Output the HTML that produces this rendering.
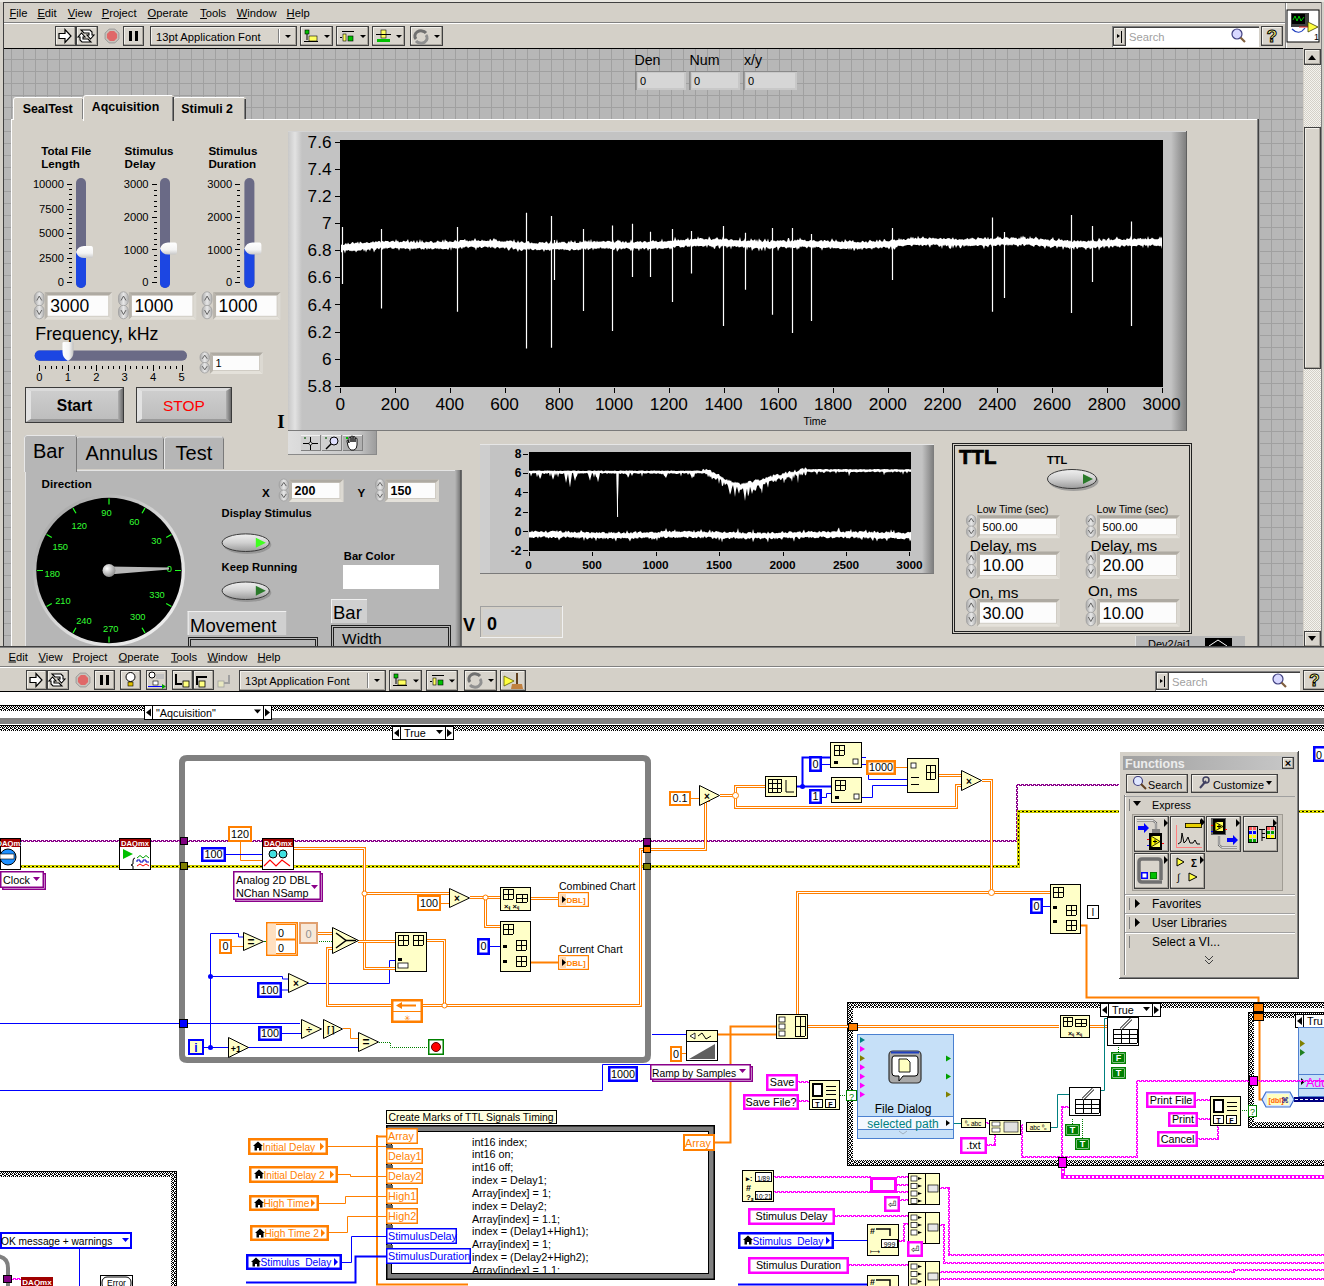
<!DOCTYPE html>
<html><head><meta charset="utf-8"><title>LabVIEW</title>
<style>html,body{margin:0;padding:0;background:#fff;width:1324px;height:1286px;overflow:hidden}svg{display:block}text{white-space:pre}</style>
</head><body><svg width="1324" height="1286" viewBox="0 0 1324 1286" shape-rendering="auto"><defs>
<pattern id="dith" width="2" height="2" patternUnits="userSpaceOnUse"><rect width="2" height="2" fill="#f4f3ee"/><rect width="1" height="1" fill="#d4d0c8"/><rect x="1" y="1" width="1" height="1" fill="#d4d0c8"/></pattern>
<linearGradient id="spin" x1="0" y1="0" x2="1" y2="0"><stop offset="0" stop-color="#a8a8a8"/><stop offset="0.5" stop-color="#e8e8e8"/><stop offset="1" stop-color="#b0b0b0"/></linearGradient>
<linearGradient id="thumb" x1="0" y1="0" x2="0" y2="1"><stop offset="0" stop-color="#ffffff"/><stop offset="0.6" stop-color="#f4f4f4"/><stop offset="1" stop-color="#c8c8c8"/></linearGradient>
<linearGradient id="thumb2" x1="0" y1="0" x2="1" y2="0"><stop offset="0" stop-color="#ffffff"/><stop offset="0.6" stop-color="#f4f4f4"/><stop offset="1" stop-color="#c0c0c0"/></linearGradient>
<linearGradient id="gbtn" x1="0" y1="0" x2="0" y2="1"><stop offset="0" stop-color="#cfcfcf"/><stop offset="1" stop-color="#bcbcbc"/></linearGradient><linearGradient id="bvr" x1="0" y1="0" x2="1" y2="0"><stop offset="0" stop-color="#b0b0b0"/><stop offset="1" stop-color="#6a6a6a"/></linearGradient>
<linearGradient id="lgrad" x1="0" y1="0" x2="1" y2="0"><stop offset="0" stop-color="#c8c8c8"/><stop offset="0.5" stop-color="#e2e2e2"/><stop offset="1" stop-color="#c3c3c3"/></linearGradient>
<linearGradient id="rgrad" x1="0" y1="0" x2="1" y2="0"><stop offset="0" stop-color="#c3c3c3"/><stop offset="1" stop-color="#7a7a7a"/></linearGradient>
<linearGradient id="rgrad2" x1="0" y1="0" x2="1" y2="0"><stop offset="0" stop-color="#b6b6b6"/><stop offset="1" stop-color="#7a7a7a"/></linearGradient><linearGradient id="palg" x1="0" y1="0" x2="1" y2="0"><stop offset="0" stop-color="#dedede"/><stop offset="0.8" stop-color="#c4c4c4"/><stop offset="1" stop-color="#9a9a9a"/></linearGradient>
<linearGradient id="ledg" x1="0" y1="0" x2="0" y2="1"><stop offset="0" stop-color="#f0f0f0"/><stop offset="0.5" stop-color="#d0d0d0"/><stop offset="1" stop-color="#9a9a9a"/></linearGradient>
<linearGradient id="bezel" x1="0" y1="0" x2="1" y2="1"><stop offset="0" stop-color="#9a9a9a"/><stop offset="0.5" stop-color="#d8d8d8"/><stop offset="1" stop-color="#f4f4f4"/></linearGradient>
<radialGradient id="hub" cx="0.35" cy="0.35" r="0.7"><stop offset="0" stop-color="#ffffff"/><stop offset="1" stop-color="#8a8a8a"/></radialGradient>
<linearGradient id="ttlbar" x1="0" y1="0" x2="1" y2="0"><stop offset="0" stop-color="#a0a0a0"/><stop offset="1" stop-color="#c8c8c8"/></linearGradient>
<pattern id="hatch" width="4" height="5" patternUnits="userSpaceOnUse"><rect width="4" height="5" fill="#fff"/><rect x="0" y="0" width="1" height="1" fill="#000"/><rect x="2" y="0" width="1" height="1" fill="#000"/><rect x="1" y="1" width="1" height="1" fill="#000"/><rect x="3" y="1" width="2" height="1" fill="#000"/><rect x="0" y="2" width="1" height="1" fill="#000"/><rect x="2" y="2" width="1" height="1" fill="#000"/><rect x="1" y="3" width="2" height="1" fill="#000"/><rect x="3" y="3" width="1" height="1" fill="#000"/><rect x="0" y="4" width="1" height="1" fill="#000"/><rect x="2" y="4" width="1" height="1" fill="#000"/></pattern>
<pattern id="hatchv" width="5" height="4" patternUnits="userSpaceOnUse"><rect width="5" height="4" fill="#fff"/><rect x="0" y="0" width="1" height="1" fill="#000"/><rect x="0" y="2" width="1" height="1" fill="#000"/><rect x="1" y="1" width="1" height="1" fill="#000"/><rect x="1" y="3" width="1" height="2" fill="#000"/><rect x="2" y="0" width="1" height="1" fill="#000"/><rect x="2" y="2" width="1" height="1" fill="#000"/><rect x="3" y="1" width="1" height="2" fill="#000"/><rect x="3" y="3" width="1" height="1" fill="#000"/><rect x="4" y="0" width="1" height="1" fill="#000"/><rect x="4" y="2" width="1" height="1" fill="#000"/></pattern>
</defs><rect x="0" y="0" width="1324" height="647" fill="#d4d0c8" /><rect x="0" y="0" width="1324" height="2" fill="#e9e7e1" /><line x1="3" y1="2.5" x2="1322" y2="2.5" stroke="#404040" stroke-width="1" /><line x1="3.5" y1="2" x2="3.5" y2="647" stroke="#404040" stroke-width="1" /><line x1="1321.5" y1="2" x2="1321.5" y2="647" stroke="#808080" stroke-width="1" /><line x1="4" y1="22.5" x2="1285" y2="22.5" stroke="#808080" stroke-width="1" /><line x1="4" y1="23.5" x2="1285" y2="23.5" stroke="#ffffff" stroke-width="1" /><line x1="1285.5" y1="3" x2="1285.5" y2="48" stroke="#808080" stroke-width="1" /><line x1="1286.5" y1="3" x2="1286.5" y2="48" stroke="#ffffff" stroke-width="1" /><line x1="4" y1="48.5" x2="1303" y2="48.5" stroke="#000" stroke-width="1" /><text x="9.5" y="17" font-family='"Liberation Sans", sans-serif' font-size="11.2" fill="#000" font-weight="normal" text-anchor="start" >File</text><line x1="9.5" y1="18.5" x2="16.34075" y2="18.5" stroke="#000" stroke-width="1" /><text x="37.4" y="17" font-family='"Liberation Sans", sans-serif' font-size="11.2" fill="#000" font-weight="normal" text-anchor="start" >Edit</text><line x1="37.4" y1="18.5" x2="44.87075" y2="18.5" stroke="#000" stroke-width="1" /><text x="67.8" y="17" font-family='"Liberation Sans", sans-serif' font-size="11.2" fill="#000" font-weight="normal" text-anchor="start" >View</text><line x1="67.8" y1="18.5" x2="75.27074999999999" y2="18.5" stroke="#000" stroke-width="1" /><text x="101.7" y="17" font-family='"Liberation Sans", sans-serif' font-size="11.2" fill="#000" font-weight="normal" text-anchor="start" >Project</text><line x1="101.7" y1="18.5" x2="109.17075" y2="18.5" stroke="#000" stroke-width="1" /><text x="147.6" y="17" font-family='"Liberation Sans", sans-serif' font-size="11.2" fill="#000" font-weight="normal" text-anchor="start" >Operate</text><line x1="147.6" y1="18.5" x2="156.3115" y2="18.5" stroke="#000" stroke-width="1" /><text x="200.1" y="17" font-family='"Liberation Sans", sans-serif' font-size="11.2" fill="#000" font-weight="normal" text-anchor="start" >Tools</text><line x1="200.1" y1="18.5" x2="206.94074999999998" y2="18.5" stroke="#000" stroke-width="1" /><text x="236.8" y="17" font-family='"Liberation Sans", sans-serif' font-size="11.2" fill="#000" font-weight="normal" text-anchor="start" >Window</text><line x1="236.8" y1="18.5" x2="247.37175000000002" y2="18.5" stroke="#000" stroke-width="1" /><text x="286.6" y="17" font-family='"Liberation Sans", sans-serif' font-size="11.2" fill="#000" font-weight="normal" text-anchor="start" >Help</text><line x1="286.6" y1="18.5" x2="294.68850000000003" y2="18.5" stroke="#000" stroke-width="1" /><rect x="55" y="26" width="21" height="20" fill="#d8d4cc" /><line x1="56" y1="27.5" x2="75" y2="27.5" stroke="#f2f0ea" stroke-width="1" /><line x1="56.5" y1="27" x2="56.5" y2="45" stroke="#f2f0ea" stroke-width="1" /><line x1="56" y1="44.5" x2="75" y2="44.5" stroke="#a8a49c" stroke-width="1" /><line x1="74.5" y1="27" x2="74.5" y2="45" stroke="#a8a49c" stroke-width="1" /><rect x="55.5" y="26.5" width="20" height="19" fill="none" stroke="#404040" stroke-width="1" /><polygon points="59,33.5 65,33.5 65,29.5 71,36 65,42.5 65,38.5 59,38.5" fill="#fff" stroke="#000" stroke-width="1.2" /><rect x="76" y="26" width="22" height="20" fill="#d8d4cc" /><line x1="77" y1="27.5" x2="97" y2="27.5" stroke="#f2f0ea" stroke-width="1" /><line x1="77.5" y1="27" x2="77.5" y2="45" stroke="#f2f0ea" stroke-width="1" /><line x1="77" y1="44.5" x2="97" y2="44.5" stroke="#a8a49c" stroke-width="1" /><line x1="96.5" y1="27" x2="96.5" y2="45" stroke="#a8a49c" stroke-width="1" /><rect x="76.5" y="26.5" width="21" height="19" fill="none" stroke="#404040" stroke-width="1" /><polygon points="81,30 90,30 92,32 92,35 94,35 90.5,39 87,35 89,35 89,33 84,33" fill="#fff" stroke="#000" stroke-width="1.1" /><polygon points="91,42 82,42 80,40 80,37 78,37 81.5,33 85,37 83,37 83,39 88,39" fill="#fff" stroke="#000" stroke-width="1.1" /><rect x="102" y="26" width="20" height="20" fill="#d4d0c8" /><polygon points="118.9,38.9 114.9,42.9 109.1,42.9 105.1,38.9 105.1,33.1 109.1,29.1 114.9,29.1 118.9,33.1" fill="#c8c4bc" stroke="#9a9a9a" stroke-width="1" /><polygon points="117.1,38.1 114.1,41.1 109.9,41.1 106.9,38.1 106.9,33.9 109.9,30.9 114.1,30.9 117.1,33.9" fill="#e06868" /><rect x="123" y="26" width="21" height="20" fill="#d8d4cc" /><line x1="124" y1="27.5" x2="143" y2="27.5" stroke="#f2f0ea" stroke-width="1" /><line x1="124.5" y1="27" x2="124.5" y2="45" stroke="#f2f0ea" stroke-width="1" /><line x1="124" y1="44.5" x2="143" y2="44.5" stroke="#a8a49c" stroke-width="1" /><line x1="142.5" y1="27" x2="142.5" y2="45" stroke="#a8a49c" stroke-width="1" /><rect x="123.5" y="26.5" width="20" height="19" fill="none" stroke="#404040" stroke-width="1" /><rect x="129" y="31" width="3" height="10" fill="#000" /><rect x="135" y="31" width="3" height="10" fill="#000" /><rect x="150" y="26" width="147" height="20" fill="#d8d4cc" /><line x1="151" y1="27.5" x2="296" y2="27.5" stroke="#f2f0ea" stroke-width="1" /><line x1="151.5" y1="27" x2="151.5" y2="45" stroke="#f2f0ea" stroke-width="1" /><line x1="151" y1="44.5" x2="296" y2="44.5" stroke="#a8a49c" stroke-width="1" /><line x1="295.5" y1="27" x2="295.5" y2="45" stroke="#a8a49c" stroke-width="1" /><rect x="150.5" y="26.5" width="146" height="19" fill="none" stroke="#404040" stroke-width="1" /><text x="156" y="40.5" font-family='"Liberation Sans", sans-serif' font-size="11.2" fill="#000" font-weight="normal" text-anchor="start" >13pt Application Font</text><line x1="278.5" y1="29" x2="278.5" y2="43" stroke="#808080" stroke-width="1" /><line x1="279.5" y1="29" x2="279.5" y2="43" stroke="#ffffff" stroke-width="1" /><polygon points="285,35 291,35 288,38" fill="#000" /><rect x="300" y="26" width="33" height="20" fill="#d8d4cc" /><line x1="301" y1="27.5" x2="332" y2="27.5" stroke="#f2f0ea" stroke-width="1" /><line x1="301.5" y1="27" x2="301.5" y2="45" stroke="#f2f0ea" stroke-width="1" /><line x1="301" y1="44.5" x2="332" y2="44.5" stroke="#a8a49c" stroke-width="1" /><line x1="331.5" y1="27" x2="331.5" y2="45" stroke="#a8a49c" stroke-width="1" /><rect x="300.5" y="26.5" width="32" height="19" fill="none" stroke="#404040" stroke-width="1" /><polygon points="324,35.0 330,35.0 327,38.0" fill="#000" /><rect x="305" y="30" width="4" height="4" fill="#00c000" stroke="#000" stroke-width="0.6" /><line x1="307" y1="34" x2="307" y2="40" stroke="#000" stroke-width="1" /><rect x="309" y="36" width="8" height="5" fill="#ffff60" stroke="#000" stroke-width="0.6" /><line x1="304" y1="41.5" x2="318" y2="41.5" stroke="#000" stroke-width="1" /><rect x="336" y="26" width="33" height="20" fill="#d8d4cc" /><line x1="337" y1="27.5" x2="368" y2="27.5" stroke="#f2f0ea" stroke-width="1" /><line x1="337.5" y1="27" x2="337.5" y2="45" stroke="#f2f0ea" stroke-width="1" /><line x1="337" y1="44.5" x2="368" y2="44.5" stroke="#a8a49c" stroke-width="1" /><line x1="367.5" y1="27" x2="367.5" y2="45" stroke="#a8a49c" stroke-width="1" /><rect x="336.5" y="26.5" width="32" height="19" fill="none" stroke="#404040" stroke-width="1" /><polygon points="360,35.0 366,35.0 363,38.0" fill="#000" /><line x1="342" y1="31.5" x2="354" y2="31.5" stroke="#000" stroke-width="1" /><rect x="343" y="34" width="3" height="7" fill="#ffff60" stroke="#000" stroke-width="0.6" /><rect x="348" y="36" width="5" height="5" fill="#00c000" stroke="#000" stroke-width="0.6" /><line x1="340" y1="37.5" x2="342" y2="37.5" stroke="#000" stroke-width="1" /><rect x="372" y="26" width="33" height="20" fill="#d8d4cc" /><line x1="373" y1="27.5" x2="404" y2="27.5" stroke="#f2f0ea" stroke-width="1" /><line x1="373.5" y1="27" x2="373.5" y2="45" stroke="#f2f0ea" stroke-width="1" /><line x1="373" y1="44.5" x2="404" y2="44.5" stroke="#a8a49c" stroke-width="1" /><line x1="403.5" y1="27" x2="403.5" y2="45" stroke="#a8a49c" stroke-width="1" /><rect x="372.5" y="26.5" width="32" height="19" fill="none" stroke="#404040" stroke-width="1" /><polygon points="396,35.0 402,35.0 399,38.0" fill="#000" /><rect x="377" y="39" width="13" height="3" fill="#00c000" /><rect x="381" y="30" width="5" height="8" fill="#ffff60" stroke="#000" stroke-width="0.6" /><line x1="376" y1="34.5" x2="391" y2="34.5" stroke="#000" stroke-width="1" /><rect x="410" y="26" width="33" height="20" fill="#d8d4cc" /><line x1="411" y1="27.5" x2="442" y2="27.5" stroke="#f2f0ea" stroke-width="1" /><line x1="411.5" y1="27" x2="411.5" y2="45" stroke="#f2f0ea" stroke-width="1" /><line x1="411" y1="44.5" x2="442" y2="44.5" stroke="#a8a49c" stroke-width="1" /><line x1="441.5" y1="27" x2="441.5" y2="45" stroke="#a8a49c" stroke-width="1" /><rect x="410.5" y="26.5" width="32" height="19" fill="none" stroke="#404040" stroke-width="1" /><polygon points="434,35.0 440,35.0 437,38.0" fill="#000" /><path d="M416,39.0 A6,5 0 0 1 426,33.0" fill="none" stroke="#707070" stroke-width="3"/><path d="M426,35.0 A6,5 0 0 1 416,41.0" fill="none" stroke="#909090" stroke-width="3"/><rect x="1112" y="26" width="147" height="21" fill="#ffffff" /><line x1="1112" y1="26.5" x2="1259" y2="26.5" stroke="#808080" stroke-width="1" /><line x1="1112.5" y1="26" x2="1112.5" y2="47" stroke="#808080" stroke-width="1" /><line x1="1113" y1="27.5" x2="1259" y2="27.5" stroke="#404040" stroke-width="1" /><rect x="1113" y="27" width="13" height="19" fill="#d8d4cc" /><line x1="1114" y1="28.5" x2="1125" y2="28.5" stroke="#f2f0ea" stroke-width="1" /><line x1="1114.5" y1="28" x2="1114.5" y2="45" stroke="#f2f0ea" stroke-width="1" /><line x1="1114" y1="44.5" x2="1125" y2="44.5" stroke="#a8a49c" stroke-width="1" /><line x1="1124.5" y1="28" x2="1124.5" y2="45" stroke="#a8a49c" stroke-width="1" /><rect x="1113.5" y="27.5" width="12" height="18" fill="none" stroke="#404040" stroke-width="1" /><polygon points="1117,34 1120,36 1117,38" fill="#000" /><line x1="1121.5" y1="31" x2="1121.5" y2="43" stroke="#000" stroke-width="1" /><text x="1129" y="41" font-family='"Liberation Sans", sans-serif' font-size="11.2" fill="#a0a0a0" font-weight="normal" text-anchor="start" >Search</text><circle cx="1237" cy="34" r="5" fill="#d8d8ff" stroke="#404080" stroke-width="1.2"/><line x1="1240.5" y1="37.5" x2="1245" y2="42" stroke="#806040" stroke-width="2.2" /><rect x="1261" y="26" width="22" height="20" fill="#d8d4cc" /><line x1="1262" y1="27.5" x2="1282" y2="27.5" stroke="#f2f0ea" stroke-width="1" /><line x1="1262.5" y1="27" x2="1262.5" y2="45" stroke="#f2f0ea" stroke-width="1" /><line x1="1262" y1="44.5" x2="1282" y2="44.5" stroke="#a8a49c" stroke-width="1" /><line x1="1281.5" y1="27" x2="1281.5" y2="45" stroke="#a8a49c" stroke-width="1" /><rect x="1261.5" y="26.5" width="21" height="19" fill="none" stroke="#404040" stroke-width="1" /><text x="1272.0" y="42" font-family='"Liberation Sans", sans-serif' font-size="17" fill="#ffff80" font-weight="bold" text-anchor="middle" stroke="#000" stroke-width="1">?</text><rect x="1287" y="10" width="32" height="32" fill="#fff" stroke="#000" stroke-width="1" /><rect x="1291" y="13" width="18" height="14" fill="#404040" /><rect x="1292" y="14" width="13" height="10" fill="#000" /><polyline points="1293,20 1295,16 1297,21 1299,16 1301,21 1304,17" fill="none" stroke="#00d000" stroke-width="1" /><path d="M1292,29 Q1299,36 1305,28" fill="none" stroke="#2040c0" stroke-width="1.2"/><line x1="1299" y1="27" x2="1317" y2="27" stroke="#e02020" stroke-width="1" /><polygon points="1308,22 1318,27 1308,32" fill="#ffff40" stroke="#404000" stroke-width="0.8" /><text x="1314" y="40" font-family='"Liberation Sans", sans-serif' font-size="9" fill="#000" font-weight="normal" text-anchor="start" >1</text><rect x="4" y="49" width="1299" height="598" fill="#b7b7b7" /><path d="M11.5,49V647M23.5,49V647M35.5,49V647M47.5,49V647M59.5,49V647M71.5,49V647M83.5,49V647M95.5,49V647M107.5,49V647M119.5,49V647M131.5,49V647M143.5,49V647M155.5,49V647M167.5,49V647M179.5,49V647M191.5,49V647M203.5,49V647M215.5,49V647M227.5,49V647M239.5,49V647M251.5,49V647M263.5,49V647M275.5,49V647M287.5,49V647M299.5,49V647M311.5,49V647M323.5,49V647M335.5,49V647M347.5,49V647M359.5,49V647M371.5,49V647M383.5,49V647M395.5,49V647M407.5,49V647M419.5,49V647M431.5,49V647M443.5,49V647M455.5,49V647M467.5,49V647M479.5,49V647M491.5,49V647M503.5,49V647M515.5,49V647M527.5,49V647M539.5,49V647M551.5,49V647M563.5,49V647M575.5,49V647M587.5,49V647M599.5,49V647M611.5,49V647M623.5,49V647M635.5,49V647M647.5,49V647M659.5,49V647M671.5,49V647M683.5,49V647M695.5,49V647M707.5,49V647M719.5,49V647M731.5,49V647M743.5,49V647M755.5,49V647M767.5,49V647M779.5,49V647M791.5,49V647M803.5,49V647M815.5,49V647M827.5,49V647M839.5,49V647M851.5,49V647M863.5,49V647M875.5,49V647M887.5,49V647M899.5,49V647M911.5,49V647M923.5,49V647M935.5,49V647M947.5,49V647M959.5,49V647M971.5,49V647M983.5,49V647M995.5,49V647M1007.5,49V647M1019.5,49V647M1031.5,49V647M1043.5,49V647M1055.5,49V647M1067.5,49V647M1079.5,49V647M1091.5,49V647M1103.5,49V647M1115.5,49V647M1127.5,49V647M1139.5,49V647M1151.5,49V647M1163.5,49V647M1175.5,49V647M1187.5,49V647M1199.5,49V647M1211.5,49V647M1223.5,49V647M1235.5,49V647M1247.5,49V647M1259.5,49V647M1271.5,49V647M1283.5,49V647M1295.5,49V647M4,59.5H1303M4,71.5H1303M4,83.5H1303M4,95.5H1303M4,107.5H1303M4,119.5H1303M4,131.5H1303M4,143.5H1303M4,155.5H1303M4,167.5H1303M4,179.5H1303M4,191.5H1303M4,203.5H1303M4,215.5H1303M4,227.5H1303M4,239.5H1303M4,251.5H1303M4,263.5H1303M4,275.5H1303M4,287.5H1303M4,299.5H1303M4,311.5H1303M4,323.5H1303M4,335.5H1303M4,347.5H1303M4,359.5H1303M4,371.5H1303M4,383.5H1303M4,395.5H1303M4,407.5H1303M4,419.5H1303M4,431.5H1303M4,443.5H1303M4,455.5H1303M4,467.5H1303M4,479.5H1303M4,491.5H1303M4,503.5H1303M4,515.5H1303M4,527.5H1303M4,539.5H1303M4,551.5H1303M4,563.5H1303M4,575.5H1303M4,587.5H1303M4,599.5H1303M4,611.5H1303M4,623.5H1303M4,635.5H1303" stroke="#a0a0a0" stroke-width="1" fill="none"/><rect x="1304" y="49" width="17" height="598" fill="url(#dith)"/><rect x="1304" y="49" width="17" height="16" fill="#d8d4cc" /><line x1="1305" y1="50.5" x2="1320" y2="50.5" stroke="#f2f0ea" stroke-width="1" /><line x1="1305.5" y1="50" x2="1305.5" y2="64" stroke="#f2f0ea" stroke-width="1" /><line x1="1305" y1="63.5" x2="1320" y2="63.5" stroke="#a8a49c" stroke-width="1" /><line x1="1319.5" y1="50" x2="1319.5" y2="64" stroke="#a8a49c" stroke-width="1" /><rect x="1304.5" y="49.5" width="16" height="15" fill="none" stroke="#404040" stroke-width="1" /><polygon points="1308,60 1316,60 1312,55" fill="#000" /><rect x="1304" y="127" width="17" height="242" fill="#d8d4cc" /><line x1="1305" y1="128.5" x2="1320" y2="128.5" stroke="#f2f0ea" stroke-width="1" /><line x1="1305.5" y1="128" x2="1305.5" y2="368" stroke="#f2f0ea" stroke-width="1" /><line x1="1305" y1="367.5" x2="1320" y2="367.5" stroke="#a8a49c" stroke-width="1" /><line x1="1319.5" y1="128" x2="1319.5" y2="368" stroke="#a8a49c" stroke-width="1" /><rect x="1304.5" y="127.5" width="16" height="241" fill="none" stroke="#404040" stroke-width="1" /><rect x="1304" y="631" width="17" height="16" fill="#d8d4cc" /><line x1="1305" y1="632.5" x2="1320" y2="632.5" stroke="#f2f0ea" stroke-width="1" /><line x1="1305.5" y1="632" x2="1305.5" y2="646" stroke="#f2f0ea" stroke-width="1" /><line x1="1305" y1="645.5" x2="1320" y2="645.5" stroke="#a8a49c" stroke-width="1" /><line x1="1319.5" y1="632" x2="1319.5" y2="646" stroke="#a8a49c" stroke-width="1" /><rect x="1304.5" y="631.5" width="16" height="15" fill="none" stroke="#404040" stroke-width="1" /><polygon points="1308,636 1316,636 1312,641" fill="#000" /><text x="634.4" y="64.5" font-family='"Liberation Sans", sans-serif' font-size="14.2" fill="#000" font-weight="normal" text-anchor="start" >Den</text><text x="689.5" y="64.5" font-family='"Liberation Sans", sans-serif' font-size="14.2" fill="#000" font-weight="normal" text-anchor="start" >Num</text><text x="743.9" y="64.5" font-family='"Liberation Sans", sans-serif' font-size="14.2" fill="#000" font-weight="normal" text-anchor="start" >x/y</text><rect x="635" y="71" width="51" height="19" fill="#c8c8c8" /><line x1="635" y1="71.5" x2="686" y2="71.5" stroke="#8a8a8a" stroke-width="1" /><line x1="635.5" y1="71" x2="635.5" y2="90" stroke="#8a8a8a" stroke-width="1" /><line x1="636.5" y1="72" x2="636.5" y2="90" stroke="#9c9c9c" stroke-width="1" /><rect x="638" y="73" width="46" height="15" fill="#d6d6d6" /><text x="640" y="85" font-family='"Liberation Sans", sans-serif' font-size="11" fill="#000" font-weight="normal" text-anchor="start" >0</text><rect x="689" y="71" width="51" height="19" fill="#c8c8c8" /><line x1="689" y1="71.5" x2="740" y2="71.5" stroke="#8a8a8a" stroke-width="1" /><line x1="689.5" y1="71" x2="689.5" y2="90" stroke="#8a8a8a" stroke-width="1" /><line x1="690.5" y1="72" x2="690.5" y2="90" stroke="#9c9c9c" stroke-width="1" /><rect x="692" y="73" width="46" height="15" fill="#d6d6d6" /><text x="694" y="85" font-family='"Liberation Sans", sans-serif' font-size="11" fill="#000" font-weight="normal" text-anchor="start" >0</text><rect x="743" y="71" width="54" height="19" fill="#c8c8c8" /><line x1="743" y1="71.5" x2="797" y2="71.5" stroke="#8a8a8a" stroke-width="1" /><line x1="743.5" y1="71" x2="743.5" y2="90" stroke="#8a8a8a" stroke-width="1" /><line x1="744.5" y1="72" x2="744.5" y2="90" stroke="#9c9c9c" stroke-width="1" /><rect x="746" y="73" width="49" height="15" fill="#d6d6d6" /><text x="748" y="85" font-family='"Liberation Sans", sans-serif' font-size="11" fill="#000" font-weight="normal" text-anchor="start" >0</text><rect x="11" y="119" width="1248" height="528" fill="#d4d0c8" /><line x1="11" y1="119.5" x2="1258" y2="119.5" stroke="#ffffff" stroke-width="1" /><line x1="11.5" y1="119" x2="11.5" y2="647" stroke="#ffffff" stroke-width="1" /><line x1="1257.5" y1="119" x2="1257.5" y2="647" stroke="#808080" stroke-width="1" /><line x1="1258.5" y1="119" x2="1258.5" y2="647" stroke="#404040" stroke-width="1" /><path d="M13,120 V100 Q13,97 16,97 H82 Q84,97 84,99 V120 Z" fill="#d4d0c8"/><path d="M13.5,120 V100 Q13.5,97.5 16,97.5 H82" fill="none" stroke="#ffffff" stroke-width="1"/><line x1="82.5" y1="99" x2="82.5" y2="119" stroke="#808080" stroke-width="1" /><line x1="83.5" y1="99" x2="83.5" y2="119" stroke="#404040" stroke-width="1" /><text x="22.7" y="112.7" font-family='"Liberation Sans", sans-serif' font-size="12.4" fill="#000" font-weight="bold" text-anchor="start" >SealTest</text><path d="M173,120 V100 Q173,97 176,97 H244 Q246,97 246,99 V120 Z" fill="#d4d0c8"/><path d="M173.5,120 V100 Q173.5,97.5 176,97.5 H244" fill="none" stroke="#ffffff" stroke-width="1"/><line x1="244.5" y1="99" x2="244.5" y2="119" stroke="#808080" stroke-width="1" /><line x1="245.5" y1="99" x2="245.5" y2="119" stroke="#404040" stroke-width="1" /><text x="181.3" y="112.7" font-family='"Liberation Sans", sans-serif' font-size="12.4" fill="#000" font-weight="bold" text-anchor="start" >Stimuli 2</text><path d="M83,121 V98 Q83,95 86,95 H172 Q174,95 174,97 V121 Z" fill="#d4d0c8"/><path d="M83.5,121 V98 Q83.5,95.5 86,95.5 H172" fill="none" stroke="#ffffff" stroke-width="1"/><line x1="172.5" y1="97" x2="172.5" y2="121" stroke="#808080" stroke-width="1" /><line x1="173.5" y1="97" x2="173.5" y2="121" stroke="#404040" stroke-width="1" /><text x="91.8" y="110.8" font-family='"Liberation Sans", sans-serif' font-size="12.4" fill="#000" font-weight="bold" text-anchor="start" >Aqcuisition</text><text x="41.2" y="155" font-family='"Liberation Sans", sans-serif' font-size="11.6" fill="#000" font-weight="bold" text-anchor="start" >Total File</text><text x="41.2" y="168.2" font-family='"Liberation Sans", sans-serif' font-size="11.6" fill="#000" font-weight="bold" text-anchor="start" >Length</text><text x="124.6" y="155" font-family='"Liberation Sans", sans-serif' font-size="11.6" fill="#000" font-weight="bold" text-anchor="start" >Stimulus</text><text x="124.6" y="168.2" font-family='"Liberation Sans", sans-serif' font-size="11.6" fill="#000" font-weight="bold" text-anchor="start" >Delay</text><text x="208.4" y="155" font-family='"Liberation Sans", sans-serif' font-size="11.6" fill="#000" font-weight="bold" text-anchor="start" >Stimulus</text><text x="208.4" y="168.2" font-family='"Liberation Sans", sans-serif' font-size="11.6" fill="#000" font-weight="bold" text-anchor="start" >Duration</text><rect x="76" y="178" width="10" height="110" rx="5" fill="#6a6a86"/><rect x="76" y="252" width="10" height="36" rx="5" fill="#1c46e2"/><rect x="76" y="252" width="10" height="6" fill="#1c46e2" /><path d="M76,252 Q78,246 84,246 L91,246 Q93,246 93,249 L93,255 Q93,258 91,258 L84,258 Q78,258 76,252 Z" fill="url(#thumb)"/><path d="M67,184.5H72M69,189.5H72M69,194.5H72M69,199.5H72M69,204.5H72M67,209.5H72M69,214.5H72M69,218.5H72M69,223.5H72M69,228.5H72M67,233.5H72M69,238.5H72M69,243.5H72M69,248.5H72M69,253.5H72M67,258.5H72M69,262.5H72M69,267.5H72M69,272.5H72M69,277.5H72M67,282.5H72" stroke="#000" stroke-width="1"/><text x="64" y="188.3" font-family='"Liberation Sans", sans-serif' font-size="11.2" fill="#000" font-weight="normal" text-anchor="end" >10000</text><text x="64" y="212.8" font-family='"Liberation Sans", sans-serif' font-size="11.2" fill="#000" font-weight="normal" text-anchor="end" >7500</text><text x="64" y="237.3" font-family='"Liberation Sans", sans-serif' font-size="11.2" fill="#000" font-weight="normal" text-anchor="end" >5000</text><text x="64" y="262" font-family='"Liberation Sans", sans-serif' font-size="11.2" fill="#000" font-weight="normal" text-anchor="end" >2500</text><text x="64" y="286" font-family='"Liberation Sans", sans-serif' font-size="11.2" fill="#000" font-weight="normal" text-anchor="end" >0</text><rect x="160" y="178" width="10" height="110" rx="5" fill="#6a6a86"/><rect x="160" y="248.5" width="10" height="39.5" rx="5" fill="#1c46e2"/><rect x="160" y="248.5" width="10" height="6" fill="#1c46e2" /><path d="M160,248.5 Q162,242.5 168,242.5 L175,242.5 Q177,242.5 177,245.5 L177,251.5 Q177,254.5 175,254.5 L168,254.5 Q162,254.5 160,248.5 Z" fill="url(#thumb)"/><path d="M152,184.5H157M154,190.5H157M154,195.5H157M154,201.5H157M154,206.5H157M154,211.5H157M152,217.5H157M154,222.5H157M154,228.5H157M154,233.5H157M154,239.5H157M154,244.5H157M152,249.5H157M154,255.5H157M154,260.5H157M154,266.5H157M154,271.5H157M154,277.5H157M152,282.5H157" stroke="#000" stroke-width="1"/><text x="148.6" y="188.3" font-family='"Liberation Sans", sans-serif' font-size="11.2" fill="#000" font-weight="normal" text-anchor="end" >3000</text><text x="148.6" y="221" font-family='"Liberation Sans", sans-serif' font-size="11.2" fill="#000" font-weight="normal" text-anchor="end" >2000</text><text x="148.6" y="253.5" font-family='"Liberation Sans", sans-serif' font-size="11.2" fill="#000" font-weight="normal" text-anchor="end" >1000</text><text x="148.6" y="286" font-family='"Liberation Sans", sans-serif' font-size="11.2" fill="#000" font-weight="normal" text-anchor="end" >0</text><rect x="244.4" y="178" width="10" height="110" rx="5" fill="#6a6a86"/><rect x="244.4" y="248.5" width="10" height="39.5" rx="5" fill="#1c46e2"/><rect x="244.4" y="248.5" width="10" height="6" fill="#1c46e2" /><path d="M244.4,248.5 Q246.4,242.5 252.4,242.5 L259.4,242.5 Q261.4,242.5 261.4,245.5 L261.4,251.5 Q261.4,254.5 259.4,254.5 L252.4,254.5 Q246.4,254.5 244.4,248.5 Z" fill="url(#thumb)"/><path d="M235,184.5H240M237,190.5H240M237,195.5H240M237,201.5H240M237,206.5H240M237,211.5H240M235,217.5H240M237,222.5H240M237,228.5H240M237,233.5H240M237,239.5H240M237,244.5H240M235,249.5H240M237,255.5H240M237,260.5H240M237,266.5H240M237,271.5H240M237,277.5H240M235,282.5H240" stroke="#000" stroke-width="1"/><text x="232.2" y="188.3" font-family='"Liberation Sans", sans-serif' font-size="11.2" fill="#000" font-weight="normal" text-anchor="end" >3000</text><text x="232.2" y="221" font-family='"Liberation Sans", sans-serif' font-size="11.2" fill="#000" font-weight="normal" text-anchor="end" >2000</text><text x="232.2" y="253.5" font-family='"Liberation Sans", sans-serif' font-size="11.2" fill="#000" font-weight="normal" text-anchor="end" >1000</text><text x="232.2" y="286" font-family='"Liberation Sans", sans-serif' font-size="11.2" fill="#000" font-weight="normal" text-anchor="end" >0</text><rect x="34.3" y="291.8" width="9.900000000000006" height="14.0" rx="4.950000000000003" ry="5.450000000000003" fill="url(#spin)" stroke="#a0a0a0" stroke-width="0.8"/><rect x="34.3" y="305.3" width="9.900000000000006" height="13.5" rx="4.950000000000003" ry="5.450000000000003" fill="url(#spin)" stroke="#a0a0a0" stroke-width="0.8"/><polyline points="36.8,300.5 39.2,296.1 41.8,300.5" fill="none" stroke="#555" stroke-width="0.9" /><polyline points="36.8,310.1 39.2,314.5 41.8,310.1" fill="none" stroke="#555" stroke-width="0.9" /><rect x="44.7" y="292.3" width="67.5" height="27.5" fill="#d0ccc4" /><polygon points="44.7,292.3 112.2,292.3 109.2,295.3 47.7,295.3" fill="#aeaaa2" /><polygon points="44.7,292.3 47.7,295.3 47.7,316.8 44.7,319.8" fill="#b8b4ac" /><polygon points="44.7,319.8 112.2,319.8 109.2,316.8 47.7,316.8" fill="#e4e1da" /><polygon points="112.2,292.3 112.2,319.8 109.2,316.8 109.2,295.3" fill="#dcd9d2" /><rect x="47.7" y="295.8" width="60.5" height="20.0" fill="#fcfcfc" /><text x="50.2" y="311.5" font-family='"Liberation Sans", sans-serif' font-size="17.5" fill="#000" font-weight="normal" text-anchor="start" >3000</text><rect x="118.5" y="291.8" width="9.900000000000006" height="14.0" rx="4.950000000000003" ry="5.450000000000003" fill="url(#spin)" stroke="#a0a0a0" stroke-width="0.8"/><rect x="118.5" y="305.3" width="9.900000000000006" height="13.5" rx="4.950000000000003" ry="5.450000000000003" fill="url(#spin)" stroke="#a0a0a0" stroke-width="0.8"/><polyline points="121.0,300.5 123.5,296.1 126.0,300.5" fill="none" stroke="#555" stroke-width="0.9" /><polyline points="121.0,310.1 123.5,314.5 126.0,310.1" fill="none" stroke="#555" stroke-width="0.9" /><rect x="128.9" y="292.3" width="67.5" height="27.5" fill="#d0ccc4" /><polygon points="128.9,292.3 196.4,292.3 193.4,295.3 131.9,295.3" fill="#aeaaa2" /><polygon points="128.9,292.3 131.9,295.3 131.9,316.8 128.9,319.8" fill="#b8b4ac" /><polygon points="128.9,319.8 196.4,319.8 193.4,316.8 131.9,316.8" fill="#e4e1da" /><polygon points="196.4,292.3 196.4,319.8 193.4,316.8 193.4,295.3" fill="#dcd9d2" /><rect x="131.9" y="295.8" width="60.5" height="20.0" fill="#fcfcfc" /><text x="134.4" y="311.5" font-family='"Liberation Sans", sans-serif' font-size="17.5" fill="#000" font-weight="normal" text-anchor="start" >1000</text><rect x="202.1" y="291.8" width="9.900000000000006" height="14.0" rx="4.950000000000003" ry="5.450000000000003" fill="url(#spin)" stroke="#a0a0a0" stroke-width="0.8"/><rect x="202.1" y="305.3" width="9.900000000000006" height="13.5" rx="4.950000000000003" ry="5.450000000000003" fill="url(#spin)" stroke="#a0a0a0" stroke-width="0.8"/><polyline points="204.6,300.5 207.1,296.1 209.6,300.5" fill="none" stroke="#555" stroke-width="0.9" /><polyline points="204.6,310.1 207.1,314.5 209.6,310.1" fill="none" stroke="#555" stroke-width="0.9" /><rect x="213.1" y="292.3" width="67.50000000000003" height="27.5" fill="#d0ccc4" /><polygon points="213.1,292.3 280.6,292.3 277.6,295.3 216.1,295.3" fill="#aeaaa2" /><polygon points="213.1,292.3 216.1,295.3 216.1,316.8 213.1,319.8" fill="#b8b4ac" /><polygon points="213.1,319.8 280.6,319.8 277.6,316.8 216.1,316.8" fill="#e4e1da" /><polygon points="280.6,292.3 280.6,319.8 277.6,316.8 277.6,295.3" fill="#dcd9d2" /><rect x="216.1" y="295.8" width="60.50000000000003" height="20.0" fill="#fcfcfc" /><text x="218.6" y="311.5" font-family='"Liberation Sans", sans-serif' font-size="17.5" fill="#000" font-weight="normal" text-anchor="start" >1000</text><text x="35.3" y="340.4" font-family='"Liberation Sans", sans-serif' font-size="17.8" fill="#000" font-weight="normal" text-anchor="start" >Frequency, kHz</text><rect x="34.7" y="350.6" width="152.3" height="10.2" rx="5" fill="#6a6a86"/><rect x="34.7" y="350.6" width="34" height="10.2" rx="5" fill="#1c46e2"/><rect x="60" y="350.6" width="9" height="10.2" fill="#1c46e2" /><path d="M62.5,343 Q62.5,342 64,342 H72 Q73.5,342 73.5,343 V352 Q73.5,358 68,361 Q62.5,358 62.5,352 Z" fill="url(#thumb2)"/><path d="M39.5,365V371M45.5,366V369M51.5,366V369M56.5,366V369M62.5,366V369M68.5,365V371M74.5,366V369M79.5,366V369M85.5,366V369M91.5,366V369M96.5,365V371M102.5,366V369M108.5,366V369M113.5,366V369M119.5,366V369M125.5,365V371M130.5,366V369M136.5,366V369M142.5,366V369M147.5,366V369M153.5,365V371M159.5,366V369M165.5,366V369M170.5,366V369M176.5,366V369M182.5,365V371" stroke="#000" stroke-width="1"/><text x="39.4" y="381" font-family='"Liberation Sans", sans-serif' font-size="11.2" fill="#000" font-weight="normal" text-anchor="middle" >0</text><text x="67.84" y="381" font-family='"Liberation Sans", sans-serif' font-size="11.2" fill="#000" font-weight="normal" text-anchor="middle" >1</text><text x="96.28" y="381" font-family='"Liberation Sans", sans-serif' font-size="11.2" fill="#000" font-weight="normal" text-anchor="middle" >2</text><text x="124.72" y="381" font-family='"Liberation Sans", sans-serif' font-size="11.2" fill="#000" font-weight="normal" text-anchor="middle" >3</text><text x="153.16" y="381" font-family='"Liberation Sans", sans-serif' font-size="11.2" fill="#000" font-weight="normal" text-anchor="middle" >4</text><text x="181.60000000000002" y="381" font-family='"Liberation Sans", sans-serif' font-size="11.2" fill="#000" font-weight="normal" text-anchor="middle" >5</text><rect x="200.0" y="352.0" width="9.5" height="11.0" rx="4.75" ry="5.25" fill="url(#spin)" stroke="#a0a0a0" stroke-width="0.8"/><rect x="200.0" y="362.5" width="9.5" height="10.5" rx="4.75" ry="5.25" fill="url(#spin)" stroke="#a0a0a0" stroke-width="0.8"/><polyline points="202.2,358.8 204.8,355.2 207.2,358.8" fill="none" stroke="#555" stroke-width="0.9" /><polyline points="202.2,366.2 204.8,369.8 207.2,366.2" fill="none" stroke="#555" stroke-width="0.9" /><rect x="210" y="352.5" width="53" height="21.5" fill="#d0ccc4" /><polygon points="210,352.5 263,352.5 260,355.5 213,355.5" fill="#aeaaa2" /><polygon points="210,352.5 213,355.5 213,371 210,374" fill="#b8b4ac" /><polygon points="210,374 263,374 260,371 213,371" fill="#e4e1da" /><polygon points="263,352.5 263,374 260,371 260,355.5" fill="#dcd9d2" /><rect x="213" y="356" width="46" height="14" fill="#fcfcfc" /><text x="215.5" y="367" font-family='"Liberation Sans", sans-serif' font-size="11" fill="#000" font-weight="normal" text-anchor="start" >1</text><rect x="25" y="387" width="99" height="36" fill="#3a3a3a" /><rect x="26" y="388" width="97" height="34" fill="url(#gbtn)" /><polygon points="26,388 123,388 118,391 31,391" fill="#dadada" /><polygon points="26,388 31,391 31,419 26,422" fill="#e2e2e2" /><polygon points="123,388 123,422 118,419 118,391" fill="url(#bvr)"/><polygon points="26,422 123,422 118,419 31,419" fill="#9a9a9a" /><text x="74.5" y="410.7" font-family='"Liberation Sans", sans-serif' font-size="15.6" fill="#000" font-weight="bold" text-anchor="middle" >Start</text><rect x="136" y="387" width="96" height="36" fill="#3a3a3a" /><rect x="137" y="388" width="94" height="34" fill="url(#gbtn)" /><polygon points="137,388 231,388 226,391 142,391" fill="#dadada" /><polygon points="137,388 142,391 142,419 137,422" fill="#e2e2e2" /><polygon points="231,388 231,422 226,419 226,391" fill="url(#bvr)"/><polygon points="137,422 231,422 226,419 142,419" fill="#9a9a9a" /><text x="184.0" y="410.7" font-family='"Liberation Sans", sans-serif' font-size="15.5" fill="#ff0000" font-weight="normal" text-anchor="middle" >STOP</text><text x="281" y="428" font-family='"Liberation Serif", serif' font-size="19" fill="#000" font-weight="bold" text-anchor="middle" >I</text><rect x="288" y="131" width="899" height="300" fill="#c3c3c3" /><rect x="288" y="131" width="14" height="300" fill="url(#lgrad)"/><rect x="1171" y="131" width="16" height="300" fill="url(#rgrad)"/><line x1="288" y1="131.5" x2="1187" y2="131.5" stroke="#d4d4d4" stroke-width="1" /><line x1="288" y1="430.5" x2="1187" y2="430.5" stroke="#7a7a7a" stroke-width="1" /><line x1="1186.5" y1="131" x2="1186.5" y2="431" stroke="#606060" stroke-width="1" /><rect x="340" y="140" width="823" height="247" fill="#000" /><text x="331.5" y="147.9" font-family='"Liberation Sans", sans-serif' font-size="17.2" fill="#000" font-weight="normal" text-anchor="end" >7.6</text><text x="331.5" y="175.0" font-family='"Liberation Sans", sans-serif' font-size="17.2" fill="#000" font-weight="normal" text-anchor="end" >7.4</text><text x="331.5" y="202.10000000000002" font-family='"Liberation Sans", sans-serif' font-size="17.2" fill="#000" font-weight="normal" text-anchor="end" >7.2</text><text x="331.5" y="229.20000000000002" font-family='"Liberation Sans", sans-serif' font-size="17.2" fill="#000" font-weight="normal" text-anchor="end" >7</text><text x="331.5" y="256.3" font-family='"Liberation Sans", sans-serif' font-size="17.2" fill="#000" font-weight="normal" text-anchor="end" >6.8</text><text x="331.5" y="283.4" font-family='"Liberation Sans", sans-serif' font-size="17.2" fill="#000" font-weight="normal" text-anchor="end" >6.6</text><text x="331.5" y="310.5" font-family='"Liberation Sans", sans-serif' font-size="17.2" fill="#000" font-weight="normal" text-anchor="end" >6.4</text><text x="331.5" y="337.6" font-family='"Liberation Sans", sans-serif' font-size="17.2" fill="#000" font-weight="normal" text-anchor="end" >6.2</text><text x="331.5" y="364.70000000000005" font-family='"Liberation Sans", sans-serif' font-size="17.2" fill="#000" font-weight="normal" text-anchor="end" >6</text><text x="331.5" y="391.8" font-family='"Liberation Sans", sans-serif' font-size="17.2" fill="#000" font-weight="normal" text-anchor="end" >5.8</text><text x="340.3" y="409.8" font-family='"Liberation Sans", sans-serif' font-size="17.2" fill="#000" font-weight="normal" text-anchor="middle" >0</text><text x="395.05" y="409.8" font-family='"Liberation Sans", sans-serif' font-size="17.2" fill="#000" font-weight="normal" text-anchor="middle" >200</text><text x="449.8" y="409.8" font-family='"Liberation Sans", sans-serif' font-size="17.2" fill="#000" font-weight="normal" text-anchor="middle" >400</text><text x="504.55" y="409.8" font-family='"Liberation Sans", sans-serif' font-size="17.2" fill="#000" font-weight="normal" text-anchor="middle" >600</text><text x="559.3" y="409.8" font-family='"Liberation Sans", sans-serif' font-size="17.2" fill="#000" font-weight="normal" text-anchor="middle" >800</text><text x="614.05" y="409.8" font-family='"Liberation Sans", sans-serif' font-size="17.2" fill="#000" font-weight="normal" text-anchor="middle" >1000</text><text x="668.8" y="409.8" font-family='"Liberation Sans", sans-serif' font-size="17.2" fill="#000" font-weight="normal" text-anchor="middle" >1200</text><text x="723.55" y="409.8" font-family='"Liberation Sans", sans-serif' font-size="17.2" fill="#000" font-weight="normal" text-anchor="middle" >1400</text><text x="778.3" y="409.8" font-family='"Liberation Sans", sans-serif' font-size="17.2" fill="#000" font-weight="normal" text-anchor="middle" >1600</text><text x="833.05" y="409.8" font-family='"Liberation Sans", sans-serif' font-size="17.2" fill="#000" font-weight="normal" text-anchor="middle" >1800</text><text x="887.8" y="409.8" font-family='"Liberation Sans", sans-serif' font-size="17.2" fill="#000" font-weight="normal" text-anchor="middle" >2000</text><text x="942.55" y="409.8" font-family='"Liberation Sans", sans-serif' font-size="17.2" fill="#000" font-weight="normal" text-anchor="middle" >2200</text><text x="997.3" y="409.8" font-family='"Liberation Sans", sans-serif' font-size="17.2" fill="#000" font-weight="normal" text-anchor="middle" >2400</text><text x="1052.05" y="409.8" font-family='"Liberation Sans", sans-serif' font-size="17.2" fill="#000" font-weight="normal" text-anchor="middle" >2600</text><text x="1106.8" y="409.8" font-family='"Liberation Sans", sans-serif' font-size="17.2" fill="#000" font-weight="normal" text-anchor="middle" >2800</text><text x="1161.55" y="409.8" font-family='"Liberation Sans", sans-serif' font-size="17.2" fill="#000" font-weight="normal" text-anchor="middle" >3000</text><path d="M335,142.5H340M335,169.5H340M335,196.5H340M335,223.5H340M335,250.5H340M335,277.5H340M335,304.5H340M335,332.5H340M335,359.5H340M335,386.5H340M340.5,388V393M395.5,388V393M450.5,388V393M505.5,388V393M559.5,388V393M614.5,388V393M669.5,388V393M724.5,388V393M778.5,388V393M833.5,388V393M888.5,388V393M943.5,388V393M997.5,388V393M1052.5,388V393M1107.5,388V393M1162.5,388V393" stroke="#000" stroke-width="1"/><text x="815" y="425" font-family='"Liberation Sans", sans-serif' font-size="10.5" fill="#000" font-weight="normal" text-anchor="middle" >Time</text><polygon points="341,244.7 342,244.5 343,245.1 344,244.9 345,244.0 346,242.9 347,244.6 348,242.4 349,244.0 350,244.2 351,243.6 352,242.3 353,242.0 354,243.4 355,243.3 356,242.5 357,243.0 358,241.5 359,243.9 360,241.4 361,242.2 362,243.1 363,243.6 364,242.8 365,243.0 366,242.6 367,242.0 368,242.7 369,243.0 370,243.1 371,242.1 372,242.5 373,241.0 374,242.6 375,242.0 376,241.1 377,242.2 378,241.3 379,240.9 380,241.3 381,242.7 382,241.3 383,240.7 384,242.2 385,240.8 386,241.0 387,241.0 388,241.0 389,241.7 390,242.2 391,240.9 392,241.2 393,240.5 394,241.6 395,242.0 396,239.1 397,241.5 398,240.6 399,242.4 400,242.1 401,241.8 402,242.3 403,240.9 404,240.7 405,241.5 406,241.6 407,240.7 408,239.0 409,242.4 410,242.3 411,240.7 412,241.7 413,241.8 414,239.9 415,242.7 416,242.6 417,240.0 418,242.5 419,242.2 420,239.0 421,242.6 422,239.9 423,242.1 424,242.6 425,242.7 426,241.3 427,242.2 428,241.7 429,242.6 430,241.2 431,240.9 432,241.6 433,242.7 434,242.7 435,242.3 436,242.5 437,240.9 438,240.4 439,241.8 440,241.5 441,242.3 442,241.4 443,239.6 444,242.6 445,239.1 446,240.9 447,240.8 448,242.5 449,241.4 450,241.5 451,241.4 452,241.9 453,241.9 454,241.5 455,239.7 456,240.7 457,241.6 458,241.5 459,241.8 460,240.1 461,240.0 462,240.0 463,240.0 464,240.1 465,238.8 466,241.2 467,240.0 468,241.4 469,241.1 470,240.4 471,241.5 472,239.7 473,241.1 474,239.9 475,237.9 476,239.9 477,241.2 478,239.9 479,240.8 480,241.0 481,240.9 482,239.4 483,240.8 484,240.5 485,240.7 486,241.1 487,240.9 488,240.5 489,241.3 490,238.7 491,239.8 492,241.2 493,239.6 494,238.0 495,239.7 496,239.1 497,240.4 498,241.6 499,240.4 500,241.2 501,241.7 502,241.3 503,241.8 504,241.5 505,241.6 506,241.6 507,240.2 508,241.3 509,240.7 510,240.5 511,240.5 512,240.9 513,241.8 514,238.9 515,241.9 516,242.6 517,242.4 518,240.2 519,242.4 520,242.5 521,241.6 522,241.3 523,242.3 524,242.8 525,243.0 526,241.9 527,241.4 528,240.9 529,241.6 530,243.5 531,242.8 532,242.4 533,243.6 534,243.1 535,243.4 536,243.3 537,243.5 538,243.8 539,242.2 540,242.1 541,242.4 542,242.3 543,242.3 544,243.0 545,242.8 546,241.4 547,241.8 548,243.4 549,243.6 550,242.5 551,240.0 552,242.6 553,243.9 554,242.4 555,243.2 556,242.3 557,239.3 558,243.2 559,242.3 560,242.5 561,242.4 562,241.5 563,242.2 564,241.6 565,242.6 566,243.0 567,243.8 568,242.2 569,240.9 570,242.7 571,240.1 572,241.7 573,242.1 574,242.5 575,240.2 576,243.1 577,243.1 578,242.8 579,242.9 580,240.8 581,242.4 582,241.4 583,242.3 584,241.9 585,240.0 586,241.7 587,241.0 588,242.0 589,239.8 590,242.4 591,238.7 592,242.5 593,241.2 594,241.6 595,240.8 596,242.6 597,240.4 598,242.3 599,241.3 600,242.0 601,241.2 602,241.7 603,240.7 604,241.2 605,241.5 606,242.0 607,240.8 608,241.1 609,240.8 610,241.3 611,241.7 612,241.7 613,239.4 614,242.4 615,242.6 616,241.2 617,241.0 618,239.5 619,241.0 620,240.3 621,242.3 622,242.2 623,240.8 624,242.7 625,242.1 626,241.1 627,242.8 628,242.8 629,242.5 630,242.4 631,239.2 632,241.5 633,242.1 634,242.9 635,241.9 636,242.0 637,241.6 638,241.2 639,242.0 640,241.1 641,241.5 642,242.4 643,242.2 644,240.9 645,241.3 646,241.6 647,242.7 648,241.8 649,241.9 650,241.6 651,241.2 652,240.9 653,240.1 654,241.1 655,241.6 656,240.6 657,241.7 658,242.1 659,242.1 660,241.2 661,241.4 662,238.4 663,242.0 664,241.2 665,241.5 666,241.5 667,241.6 668,240.8 669,241.0 670,240.7 671,240.8 672,241.0 673,240.8 674,240.5 675,236.7 676,239.6 677,241.1 678,239.1 679,240.3 680,240.6 681,239.5 682,240.4 683,239.8 684,240.2 685,240.3 686,238.8 687,239.3 688,237.3 689,240.3 690,239.6 691,238.4 692,239.5 693,239.1 694,239.2 695,238.4 696,239.0 697,239.3 698,236.2 699,238.8 700,238.1 701,238.1 702,238.5 703,238.5 704,239.8 705,239.1 706,239.3 707,239.0 708,239.8 709,236.2 710,238.0 711,239.7 712,239.9 713,238.7 714,239.4 715,238.5 716,238.6 717,237.1 718,238.4 719,239.8 720,239.0 721,239.4 722,239.4 723,236.2 724,238.7 725,238.7 726,238.6 727,238.7 728,239.7 729,240.5 730,239.5 731,239.3 732,239.2 733,240.3 734,240.5 735,240.0 736,240.5 737,240.0 738,240.7 739,240.0 740,237.0 741,241.0 742,241.3 743,240.4 744,240.6 745,238.1 746,241.4 747,240.7 748,240.8 749,240.5 750,240.9 751,238.2 752,240.0 753,240.4 754,240.3 755,239.0 756,241.6 757,239.2 758,241.9 759,238.3 760,240.3 761,240.3 762,241.9 763,241.5 764,240.3 765,238.4 766,240.7 767,241.5 768,238.5 769,241.9 770,242.0 771,240.3 772,240.2 773,240.4 774,240.8 775,240.7 776,241.5 777,240.5 778,240.2 779,240.9 780,240.2 781,240.6 782,240.8 783,240.1 784,240.3 785,240.8 786,241.7 787,241.5 788,238.1 789,237.9 790,241.5 791,241.0 792,239.9 793,241.2 794,240.7 795,239.6 796,240.8 797,239.7 798,239.6 799,240.2 800,237.5 801,239.6 802,239.7 803,240.1 804,240.2 805,239.5 806,241.2 807,240.9 808,241.2 809,241.0 810,240.2 811,240.1 812,240.5 813,240.5 814,239.8 815,241.0 816,241.2 817,241.5 818,241.4 819,241.3 820,240.4 821,240.2 822,240.2 823,241.8 824,239.9 825,240.1 826,241.0 827,240.8 828,240.3 829,241.4 830,241.9 831,240.4 832,238.2 833,240.3 834,241.2 835,241.6 836,239.2 837,241.2 838,241.4 839,241.8 840,241.8 841,242.3 842,240.6 843,242.0 844,242.3 845,238.9 846,240.5 847,241.6 848,241.6 849,240.8 850,239.9 851,241.2 852,241.3 853,239.7 854,242.2 855,241.7 856,242.4 857,242.2 858,241.7 859,242.4 860,242.2 861,242.4 862,240.9 863,240.8 864,242.1 865,242.3 866,240.9 867,242.5 868,242.4 869,240.7 870,239.7 871,240.8 872,241.3 873,241.4 874,241.1 875,242.2 876,241.0 877,239.6 878,241.9 879,240.3 880,239.4 881,241.3 882,241.4 883,241.5 884,239.0 885,239.5 886,241.3 887,241.0 888,241.5 889,241.3 890,241.1 891,239.7 892,239.6 893,240.2 894,239.3 895,240.0 896,240.7 897,239.7 898,240.2 899,237.8 900,240.0 901,238.6 902,240.1 903,239.2 904,239.0 905,239.9 906,240.0 907,239.1 908,238.2 909,238.4 910,238.7 911,236.6 912,238.5 913,236.7 914,239.1 915,237.8 916,238.1 917,238.9 918,235.7 919,237.9 920,238.5 921,238.3 922,237.5 923,236.3 924,237.8 925,238.4 926,238.0 927,238.8 928,239.0 929,237.4 930,237.4 931,238.2 932,238.4 933,237.6 934,238.5 935,238.3 936,238.6 937,238.4 938,239.3 939,238.4 940,238.3 941,237.8 942,239.3 943,238.8 944,238.1 945,238.9 946,239.1 947,238.5 948,238.0 949,238.2 950,238.3 951,239.6 952,238.5 953,237.2 954,239.5 955,239.2 956,238.6 957,239.7 958,239.9 959,239.2 960,239.2 961,239.6 962,239.3 963,239.4 964,240.1 965,238.8 966,239.6 967,238.1 968,238.4 969,239.4 970,238.3 971,238.7 972,237.4 973,238.2 974,238.6 975,239.2 976,239.8 977,238.6 978,236.9 979,238.1 980,238.3 981,238.1 982,238.6 983,238.8 984,238.5 985,236.8 986,238.2 987,239.2 988,236.7 989,239.2 990,238.9 991,237.8 992,239.1 993,239.5 994,238.5 995,239.0 996,238.1 997,237.6 998,235.7 999,238.0 1000,236.7 1001,238.3 1002,239.1 1003,239.1 1004,237.4 1005,237.7 1006,236.8 1007,237.6 1008,237.4 1009,238.8 1010,238.8 1011,237.2 1012,237.5 1013,237.6 1014,237.4 1015,238.3 1016,237.4 1017,238.8 1018,239.2 1019,237.6 1020,239.0 1021,236.0 1022,237.9 1023,235.4 1024,237.5 1025,236.5 1026,239.1 1027,238.7 1028,237.9 1029,239.3 1030,236.0 1031,238.4 1032,237.8 1033,238.8 1034,238.8 1035,237.8 1036,236.6 1037,238.0 1038,238.6 1039,239.9 1040,238.8 1041,238.6 1042,239.1 1043,238.9 1044,239.7 1045,239.3 1046,239.3 1047,240.0 1048,239.2 1049,240.5 1050,240.4 1051,239.1 1052,238.8 1053,236.9 1054,239.9 1055,240.2 1056,240.9 1057,240.5 1058,239.5 1059,238.1 1060,239.9 1061,239.7 1062,239.5 1063,240.7 1064,240.7 1065,240.0 1066,240.7 1067,239.9 1068,240.0 1069,241.6 1070,240.2 1071,241.6 1072,241.7 1073,241.7 1074,239.9 1075,240.8 1076,241.4 1077,240.8 1078,240.2 1079,241.5 1080,241.0 1081,240.3 1082,241.8 1083,240.8 1084,241.3 1085,241.0 1086,241.7 1087,241.7 1088,240.7 1089,240.4 1090,241.5 1091,240.1 1092,241.2 1093,238.9 1094,241.1 1095,241.2 1096,241.2 1097,241.4 1098,240.3 1099,237.8 1100,239.3 1101,240.6 1102,241.0 1103,238.5 1104,239.4 1105,239.1 1106,240.9 1107,239.4 1108,238.6 1109,237.6 1110,240.5 1111,239.3 1112,239.9 1113,240.2 1114,239.4 1115,239.4 1116,238.1 1117,236.4 1118,238.7 1119,238.7 1120,239.1 1121,239.6 1122,239.9 1123,239.9 1124,239.3 1125,239.9 1126,239.7 1127,238.1 1128,239.1 1129,238.8 1130,238.2 1131,235.6 1132,239.4 1133,239.4 1134,238.2 1135,238.7 1136,239.0 1137,239.4 1138,237.9 1139,239.1 1140,238.1 1141,238.2 1142,239.4 1143,238.3 1144,239.5 1145,238.3 1146,238.8 1147,239.4 1148,235.9 1149,239.2 1150,239.1 1151,238.8 1152,237.6 1153,238.5 1154,238.7 1155,239.4 1156,238.9 1157,239.5 1158,238.9 1159,238.6 1160,236.3 1161,238.6 1162,236.6 1162,248.9 1161,245.4 1160,246.4 1159,245.8 1158,245.8 1157,245.7 1156,246.3 1155,245.5 1154,246.0 1153,244.4 1152,244.8 1151,245.4 1150,246.1 1149,244.9 1148,248.6 1147,244.9 1146,246.0 1145,245.3 1144,244.6 1143,248.0 1142,245.6 1141,246.2 1140,245.1 1139,245.3 1138,244.8 1137,246.3 1136,246.3 1135,246.1 1134,246.1 1133,246.1 1132,246.4 1131,246.1 1130,245.8 1129,245.6 1128,246.6 1127,245.3 1126,245.2 1125,246.6 1124,246.4 1123,246.0 1122,245.3 1121,246.1 1120,247.7 1119,247.1 1118,246.2 1117,246.9 1116,245.6 1115,246.2 1114,245.5 1113,247.5 1112,247.1 1111,245.8 1110,246.7 1109,248.8 1108,246.8 1107,246.1 1106,246.4 1105,246.5 1104,248.5 1103,246.1 1102,247.0 1101,247.6 1100,248.0 1099,250.4 1098,246.4 1097,247.0 1096,247.9 1095,248.2 1094,247.6 1093,247.8 1092,248.3 1091,248.4 1090,249.6 1089,247.2 1088,248.2 1087,247.8 1086,250.2 1085,248.5 1084,248.1 1083,247.3 1082,247.3 1081,247.1 1080,247.7 1079,246.8 1078,248.3 1077,249.3 1076,247.3 1075,246.7 1074,250.0 1073,248.0 1072,248.0 1071,246.8 1070,249.4 1069,247.9 1068,247.8 1067,247.3 1066,248.1 1065,246.4 1064,247.4 1063,250.1 1062,246.6 1061,246.8 1060,246.7 1059,246.8 1058,246.4 1057,248.7 1056,246.2 1055,245.8 1054,246.2 1053,247.2 1052,247.0 1051,248.3 1050,247.5 1049,246.1 1048,247.0 1047,245.6 1046,246.2 1045,248.9 1044,246.9 1043,246.1 1042,246.1 1041,245.6 1040,246.8 1039,246.2 1038,245.8 1037,244.7 1036,245.0 1035,245.0 1034,247.0 1033,246.3 1032,245.8 1031,245.4 1030,245.0 1029,244.3 1028,244.7 1027,244.6 1026,244.8 1025,245.5 1024,246.2 1023,244.3 1022,244.1 1021,246.0 1020,244.7 1019,245.5 1018,247.0 1017,245.7 1016,244.7 1015,245.2 1014,244.3 1013,244.6 1012,245.8 1011,244.5 1010,245.6 1009,244.6 1008,246.0 1007,244.2 1006,245.6 1005,245.1 1004,245.2 1003,244.2 1002,244.6 1001,244.6 1000,246.5 999,245.0 998,244.6 997,245.3 996,245.9 995,245.9 994,245.6 993,246.1 992,247.2 991,244.7 990,244.6 989,245.6 988,247.6 987,246.2 986,246.0 985,245.4 984,249.3 983,246.5 982,245.2 981,245.3 980,245.0 979,245.6 978,246.0 977,246.0 976,245.0 975,245.8 974,245.6 973,245.9 972,245.7 971,246.0 970,246.3 969,245.5 968,246.5 967,245.0 966,246.1 965,245.5 964,247.1 963,244.9 962,245.8 961,248.0 960,248.2 959,245.8 958,245.2 957,245.8 956,248.0 955,245.0 954,245.8 953,248.4 952,245.2 951,248.6 950,248.7 949,247.7 948,244.9 947,246.2 946,245.9 945,244.5 944,246.2 943,244.7 942,249.0 941,245.4 940,246.4 939,246.8 938,245.3 937,244.5 936,244.5 935,245.0 934,244.4 933,244.2 932,245.5 931,244.8 930,247.8 929,246.0 928,244.3 927,245.1 926,245.8 925,245.0 924,245.0 923,245.7 922,246.2 921,244.4 920,245.3 919,245.7 918,244.8 917,245.1 916,245.0 915,244.8 914,244.8 913,244.8 912,246.4 911,245.7 910,244.9 909,244.9 908,245.1 907,245.1 906,245.5 905,245.5 904,246.0 903,246.6 902,246.3 901,245.9 900,245.8 899,246.0 898,245.6 897,247.5 896,247.0 895,249.3 894,249.4 893,247.7 892,250.5 891,246.2 890,247.7 889,249.4 888,247.9 887,247.2 886,248.1 885,247.3 884,246.7 883,246.9 882,248.4 881,247.6 880,247.4 879,248.5 878,248.4 877,247.6 876,247.3 875,247.5 874,248.4 873,247.8 872,249.8 871,248.5 870,248.3 869,247.9 868,248.2 867,248.4 866,249.0 865,247.7 864,248.1 863,248.4 862,250.3 861,248.0 860,249.4 859,248.5 858,249.6 857,249.5 856,247.8 855,249.6 854,251.3 853,248.2 852,248.3 851,249.9 850,247.8 849,250.0 848,248.1 847,248.9 846,248.9 845,248.7 844,248.7 843,248.4 842,249.1 841,249.1 840,249.2 839,248.3 838,248.1 837,248.3 836,248.2 835,248.3 834,248.1 833,248.5 832,247.0 831,248.8 830,248.7 829,247.1 828,247.8 827,247.5 826,248.1 825,247.9 824,247.8 823,248.1 822,250.7 821,248.0 820,248.2 819,247.1 818,246.9 817,247.2 816,246.5 815,248.3 814,246.8 813,248.8 812,246.9 811,247.2 810,247.4 809,246.4 808,246.8 807,248.4 806,247.4 805,246.8 804,246.7 803,246.8 802,246.3 801,247.5 800,246.3 799,248.9 798,248.1 797,250.0 796,247.2 795,247.9 794,248.0 793,248.0 792,246.7 791,248.8 790,246.7 789,247.9 788,246.9 787,248.2 786,248.5 785,247.6 784,246.7 783,247.2 782,246.9 781,246.6 780,247.4 779,248.4 778,251.3 777,246.8 776,246.9 775,248.2 774,247.8 773,249.4 772,248.6 771,247.9 770,249.4 769,248.3 768,248.7 767,247.2 766,247.3 765,251.4 764,247.5 763,247.6 762,251.0 761,249.2 760,248.0 759,251.4 758,248.6 757,248.1 756,247.7 755,248.2 754,248.5 753,249.2 752,251.0 751,247.0 750,247.4 749,247.7 748,246.7 747,250.5 746,246.4 745,246.8 744,248.1 743,247.3 742,246.2 741,247.3 740,246.8 739,247.8 738,246.3 737,246.8 736,246.9 735,245.9 734,246.2 733,246.8 732,245.9 731,249.4 730,246.0 729,247.0 728,246.5 727,248.4 726,246.0 725,246.4 724,245.8 723,245.6 722,246.6 721,246.3 720,248.4 719,248.3 718,245.0 717,246.3 716,245.7 715,248.7 714,248.7 713,246.4 712,247.6 711,246.0 710,246.6 709,245.5 708,244.9 707,248.0 706,245.2 705,246.3 704,246.2 703,246.9 702,245.9 701,245.9 700,245.9 699,246.2 698,246.3 697,245.4 696,246.8 695,245.7 694,246.0 693,246.5 692,246.7 691,245.1 690,247.0 689,246.3 688,247.1 687,246.6 686,245.3 685,246.3 684,247.6 683,247.3 682,246.9 681,247.4 680,247.5 679,246.1 678,246.0 677,245.9 676,246.3 675,247.8 674,247.4 673,246.7 672,249.6 671,248.0 670,249.7 669,247.8 668,247.7 667,248.2 666,248.3 665,248.2 664,248.2 663,249.3 662,248.5 661,248.9 660,248.3 659,248.3 658,248.7 657,250.3 656,247.6 655,248.6 654,248.6 653,248.7 652,248.8 651,249.2 650,249.0 649,249.0 648,251.1 647,248.4 646,247.8 645,249.1 644,249.6 643,248.1 642,248.3 641,249.4 640,248.2 639,251.2 638,249.0 637,248.4 636,248.8 635,248.5 634,248.1 633,251.3 632,249.3 631,251.3 630,249.6 629,248.7 628,248.6 627,248.0 626,247.8 625,249.0 624,248.4 623,248.6 622,249.0 621,249.7 620,248.1 619,249.1 618,250.4 617,251.8 616,247.6 615,248.8 614,250.3 613,249.7 612,248.9 611,249.1 610,248.8 609,248.0 608,249.3 607,247.4 606,248.7 605,248.2 604,249.1 603,247.8 602,248.9 601,247.4 600,247.5 599,249.0 598,247.8 597,249.0 596,248.5 595,249.0 594,248.2 593,250.6 592,247.8 591,248.5 590,248.8 589,249.4 588,250.2 587,247.7 586,249.7 585,249.3 584,248.6 583,249.5 582,248.1 581,249.7 580,249.6 579,249.9 578,250.5 577,249.2 576,250.0 575,250.1 574,250.2 573,250.0 572,248.7 571,249.5 570,251.0 569,250.6 568,250.1 567,249.8 566,250.0 565,249.3 564,250.4 563,248.8 562,249.6 561,249.2 560,249.3 559,250.1 558,249.0 557,249.3 556,249.2 555,249.3 554,249.2 553,249.0 552,249.8 551,249.4 550,251.0 549,250.2 548,249.6 547,250.3 546,250.1 545,249.4 544,251.9 543,249.7 542,249.2 541,249.8 540,250.1 539,250.3 538,249.8 537,250.4 536,249.5 535,249.0 534,250.1 533,250.3 532,250.1 531,249.0 530,248.6 529,250.2 528,248.5 527,249.8 526,249.4 525,249.8 524,248.9 523,249.9 522,250.7 521,251.0 520,249.7 519,249.2 518,252.0 517,250.1 516,248.5 515,249.1 514,249.3 513,249.5 512,247.3 511,247.8 510,248.9 509,250.8 508,250.1 507,247.9 506,247.3 505,248.7 504,248.3 503,247.3 502,248.0 501,247.6 500,248.4 499,248.2 498,247.0 497,247.2 496,247.7 495,249.1 494,247.4 493,247.7 492,246.5 491,247.9 490,247.4 489,246.2 488,248.1 487,246.7 486,247.1 485,246.3 484,247.0 483,247.3 482,248.0 481,248.0 480,246.6 479,247.3 478,248.1 477,247.2 476,250.4 475,247.7 474,247.5 473,247.1 472,246.8 471,246.6 470,247.1 469,247.2 468,248.3 467,246.5 466,246.8 465,246.7 464,248.1 463,247.0 462,249.2 461,247.7 460,246.9 459,248.7 458,247.9 457,248.3 456,248.7 455,248.3 454,248.0 453,248.6 452,247.3 451,250.8 450,247.3 449,248.5 448,250.3 447,248.7 446,249.0 445,249.0 444,249.1 443,249.4 442,248.9 441,248.7 440,248.3 439,249.5 438,248.3 437,248.7 436,248.5 435,248.1 434,249.3 433,249.1 432,249.7 431,248.3 430,248.4 429,249.3 428,248.0 427,250.1 426,248.2 425,248.0 424,250.0 423,248.7 422,249.3 421,249.5 420,247.8 419,247.9 418,248.4 417,248.1 416,249.5 415,248.2 414,248.9 413,248.5 412,249.4 411,247.9 410,251.6 409,248.7 408,249.1 407,247.9 406,249.2 405,248.7 404,248.2 403,248.3 402,248.4 401,248.3 400,248.2 399,250.7 398,248.3 397,248.4 396,248.1 395,247.8 394,249.0 393,248.6 392,249.0 391,247.6 390,247.6 389,248.1 388,248.0 387,248.9 386,247.6 385,249.1 384,247.9 383,249.4 382,249.4 381,247.6 380,248.1 379,249.4 378,248.4 377,248.1 376,249.5 375,250.2 374,252.5 373,248.9 372,248.3 371,248.4 370,251.1 369,249.6 368,249.6 367,250.1 366,252.5 365,249.6 364,251.6 363,249.0 362,249.4 361,250.4 360,250.6 359,250.6 358,250.4 357,251.1 356,252.5 355,250.4 354,251.1 353,250.4 352,251.4 351,250.6 350,251.2 349,250.3 348,249.9 347,251.0 346,250.1 345,253.4 344,250.4 343,250.2 342,252.1 341,252.5" fill="#fff" /><path d="M342.5,227V284M381.5,229V308.5M457.5,227V311.7M526.5,212.7V348.5M551.5,215.9V347.8M554.5,240V280M583.5,229V311M612.5,225.4V331M632.5,223.8V277M650.5,231.7V277M672.5,229V302M691.5,231V273.6M723.5,226V326M745.5,232.7V289.8M772.5,227.9V314.8M792.5,228V333M811.5,234V321M892.5,228V280M992.5,217.4V311.7M1004.5,232V298M1071.5,215V313M1092.5,226V282M1131.5,221.6V326" stroke="#fff" stroke-width="1.2"/><rect x="288" y="431" width="89" height="24" fill="url(#palg)" /><line x1="288" y1="454.5" x2="377" y2="454.5" stroke="#8a8a8a" stroke-width="1" /><line x1="376.5" y1="431" x2="376.5" y2="455" stroke="#8a8a8a" stroke-width="1" /><rect x="301" y="435" width="20" height="16" fill="#d0d0d0" /><line x1="301" y1="435.5" x2="321" y2="435.5" stroke="#f0f0f0" stroke-width="1" /><line x1="301" y1="450.5" x2="321" y2="450.5" stroke="#808080" stroke-width="1" /><line x1="320.5" y1="435" x2="320.5" y2="451" stroke="#808080" stroke-width="1" /><rect x="304" y="437" width="2" height="2" fill="#5a8a5a" /><rect x="322" y="435" width="20" height="16" fill="#d0d0d0" /><line x1="322" y1="435.5" x2="342" y2="435.5" stroke="#f0f0f0" stroke-width="1" /><line x1="322" y1="450.5" x2="342" y2="450.5" stroke="#808080" stroke-width="1" /><line x1="341.5" y1="435" x2="341.5" y2="451" stroke="#808080" stroke-width="1" /><rect x="325" y="437" width="2" height="2" fill="#5a8a5a" /><rect x="343" y="435" width="20" height="16" fill="#b0b0b0" /><line x1="343" y1="435.5" x2="363" y2="435.5" stroke="#f0f0f0" stroke-width="1" /><line x1="343" y1="450.5" x2="363" y2="450.5" stroke="#808080" stroke-width="1" /><line x1="362.5" y1="435" x2="362.5" y2="451" stroke="#808080" stroke-width="1" /><rect x="346" y="437" width="2" height="2" fill="#00c000" /><line x1="303" y1="443.5" x2="318" y2="443.5" stroke="#000" stroke-width="1" /><line x1="310.5" y1="437" x2="310.5" y2="450" stroke="#000" stroke-width="1" /><circle cx="310.5" cy="443.5" r="1.5" fill="#fff" stroke="#000" stroke-width="0.8"/><circle cx="334" cy="441" r="4" fill="#e0e0ff" stroke="#000" stroke-width="1"/><line x1="331" y1="444" x2="326" y2="449" stroke="#000" stroke-width="1.5" /><path d="M348,446 L347,441 Q347,440 348,440 L349,443 L349,437.5 Q350,436.5 351,437.5 L351,442 L351,436.5 Q352,435.5 353,436.5 L353,442 L353,437 Q354,436 355,437 L355,442 L355,438.5 Q356,437.5 357,438.5 L357,445 Q357,449 354,450 L351,450 Q349,449 348,446 Z" fill="#fff" stroke="#000" stroke-width="0.9"/><rect x="480" y="444" width="454" height="130" fill="#c3c3c3" /><rect x="480" y="444" width="10" height="130" fill="#cecece"/><rect x="922" y="444" width="12" height="130" fill="url(#rgrad)"/><line x1="480" y1="444.5" x2="934" y2="444.5" stroke="#e6e6e6" stroke-width="1" /><line x1="480" y1="573.5" x2="934" y2="573.5" stroke="#7a7a7a" stroke-width="1" /><rect x="529" y="452" width="382" height="99" fill="#000" /><text x="521.5" y="458.0" font-family='"Liberation Sans", sans-serif' font-size="12" fill="#000" font-weight="bold" text-anchor="end" >8</text><text x="521.5" y="477.38" font-family='"Liberation Sans", sans-serif' font-size="12" fill="#000" font-weight="bold" text-anchor="end" >6</text><text x="521.5" y="496.76" font-family='"Liberation Sans", sans-serif' font-size="12" fill="#000" font-weight="bold" text-anchor="end" >4</text><text x="521.5" y="516.14" font-family='"Liberation Sans", sans-serif' font-size="12" fill="#000" font-weight="bold" text-anchor="end" >2</text><text x="521.5" y="535.52" font-family='"Liberation Sans", sans-serif' font-size="12" fill="#000" font-weight="bold" text-anchor="end" >0</text><text x="521.5" y="554.9" font-family='"Liberation Sans", sans-serif' font-size="12" fill="#000" font-weight="bold" text-anchor="end" >-2</text><text x="528.6" y="569" font-family='"Liberation Sans", sans-serif' font-size="11.8" fill="#000" font-weight="bold" text-anchor="middle" >0</text><text x="592.08" y="569" font-family='"Liberation Sans", sans-serif' font-size="11.8" fill="#000" font-weight="bold" text-anchor="middle" >500</text><text x="655.5600000000001" y="569" font-family='"Liberation Sans", sans-serif' font-size="11.8" fill="#000" font-weight="bold" text-anchor="middle" >1000</text><text x="719.04" y="569" font-family='"Liberation Sans", sans-serif' font-size="11.8" fill="#000" font-weight="bold" text-anchor="middle" >1500</text><text x="782.52" y="569" font-family='"Liberation Sans", sans-serif' font-size="11.8" fill="#000" font-weight="bold" text-anchor="middle" >2000</text><text x="846.0" y="569" font-family='"Liberation Sans", sans-serif' font-size="11.8" fill="#000" font-weight="bold" text-anchor="middle" >2500</text><text x="909.48" y="569" font-family='"Liberation Sans", sans-serif' font-size="11.8" fill="#000" font-weight="bold" text-anchor="middle" >3000</text><path d="M523,454.5H528M523,473.5H528M523,492.5H528M523,512.5H528M523,531.5H528M523,550.5H528M529.5,552V556M592.5,552V556M656.5,552V556M719.5,552V556M783.5,552V556M846.5,552V556M909.5,552V556" stroke="#000" stroke-width="1"/><polygon points="529,470.8 530,470.7 531,471.0 532,470.8 533,470.7 534,470.5 535,470.7 536,470.7 537,470.8 538,470.6 539,470.6 540,470.5 541,471.0 542,470.7 543,470.9 544,470.7 545,470.5 546,470.7 547,470.4 548,470.6 549,470.7 550,470.4 551,470.9 552,470.6 553,471.2 554,470.5 555,470.4 556,471.2 557,470.7 558,470.9 559,470.9 560,470.7 561,470.7 562,470.9 563,471.0 564,470.8 565,470.7 566,470.7 567,470.8 568,470.6 569,470.7 570,470.8 571,470.9 572,470.7 573,470.6 574,470.6 575,470.6 576,470.9 577,470.9 578,470.5 579,470.7 580,471.0 581,471.0 582,471.1 583,470.7 584,471.1 585,471.0 586,470.9 587,471.1 588,470.5 589,470.4 590,470.6 591,470.8 592,471.0 593,471.0 594,470.6 595,470.5 596,471.1 597,470.8 598,470.7 599,470.5 600,470.9 601,470.5 602,470.5 603,471.2 604,471.2 605,470.8 606,470.6 607,471.1 608,470.5 609,470.9 610,470.7 611,471.0 612,470.8 613,471.1 614,470.7 615,470.6 616,470.9 617,470.9 618,471.0 619,471.1 620,470.5 621,470.5 622,470.8 623,470.7 624,470.7 625,471.1 626,470.6 627,470.5 628,471.1 629,470.5 630,470.6 631,470.8 632,470.5 633,470.7 634,471.1 635,470.6 636,470.9 637,471.1 638,470.9 639,470.6 640,470.8 641,470.5 642,470.5 643,470.6 644,471.0 645,471.0 646,471.0 647,470.5 648,471.0 649,470.9 650,470.9 651,470.4 652,470.8 653,470.8 654,470.5 655,470.4 656,471.0 657,470.4 658,471.0 659,470.6 660,471.0 661,470.9 662,470.5 663,470.7 664,470.9 665,470.7 666,470.8 667,470.7 668,470.5 669,470.9 670,471.0 671,470.6 672,470.4 673,471.1 674,470.6 675,471.1 676,471.1 677,471.1 678,470.9 679,470.8 680,471.0 681,470.6 682,470.9 683,470.5 684,471.0 685,470.9 686,470.6 687,471.1 688,470.6 689,471.0 690,470.5 691,471.1 692,470.8 693,471.0 694,470.5 695,470.8 696,470.4 697,470.5 698,470.6 699,470.7 700,470.8 701,471.2 702,470.8 703,468.7 704,469.5 705,470.6 706,468.8 707,469.6 708,470.1 709,469.9 710,469.7 711,470.5 712,472.7 713,472.0 714,472.6 715,472.9 716,474.2 717,474.2 718,474.0 719,474.1 720,476.3 721,476.2 722,477.4 723,477.2 724,478.9 725,479.5 726,479.9 727,478.9 728,481.1 729,479.5 730,481.3 731,480.3 732,482.8 733,481.8 734,483.3 735,481.6 736,483.1 737,482.0 738,483.1 739,482.6 740,484.2 741,484.7 742,482.9 743,483.9 744,482.5 745,484.0 746,482.2 747,483.5 748,481.6 749,481.1 750,480.8 751,480.9 752,482.5 753,482.2 754,480.4 755,480.1 756,479.0 757,480.3 758,479.0 759,480.5 760,480.4 761,479.9 762,479.6 763,478.2 764,478.7 765,479.1 766,476.9 767,477.7 768,477.3 769,476.4 770,476.5 771,475.2 772,477.5 773,474.8 774,474.4 775,475.5 776,474.2 777,474.3 778,473.7 779,475.5 780,475.0 781,475.4 782,474.1 783,473.0 784,473.7 785,472.5 786,471.6 787,473.7 788,472.4 789,471.3 790,471.0 791,472.5 792,471.5 793,472.6 794,471.2 795,469.5 796,472.0 797,471.7 798,470.9 799,470.6 800,469.3 801,468.6 802,468.5 803,468.1 804,469.7 805,467.4 806,467.8 807,469.2 808,469.6 809,468.9 810,469.4 811,469.3 812,469.4 813,469.0 814,469.2 815,469.3 816,469.1 817,469.4 818,468.9 819,469.0 820,469.0 821,468.9 822,469.4 823,469.5 824,469.5 825,469.1 826,469.0 827,468.9 828,469.3 829,469.7 830,469.6 831,468.9 832,469.6 833,469.6 834,469.0 835,469.3 836,468.9 837,469.6 838,469.0 839,468.9 840,469.5 841,469.3 842,469.7 843,469.1 844,469.3 845,469.0 846,469.0 847,468.9 848,469.5 849,469.4 850,469.0 851,469.2 852,469.6 853,469.6 854,469.3 855,469.4 856,469.0 857,469.5 858,469.6 859,469.4 860,468.9 861,469.3 862,469.3 863,469.6 864,469.1 865,469.4 866,469.5 867,469.4 868,469.4 869,469.4 870,469.0 871,469.5 872,469.6 873,469.5 874,469.0 875,469.0 876,469.3 877,469.0 878,469.0 879,469.0 880,469.4 881,469.6 882,469.3 883,469.2 884,469.1 885,469.1 886,469.3 887,469.0 888,469.2 889,469.4 890,469.7 891,469.2 892,469.3 893,469.5 894,469.3 895,469.0 896,469.2 897,469.0 898,469.5 899,469.5 900,469.5 901,469.6 902,469.5 903,469.4 904,469.7 905,469.6 906,469.1 907,469.3 908,469.1 909,469.2 910,469.4 911,469.2 911,471.8 910,471.9 909,471.5 908,471.6 907,473.6 906,471.7 905,471.6 904,471.8 903,474.8 902,471.5 901,472.4 900,472.3 899,471.5 898,471.4 897,472.3 896,471.7 895,471.5 894,471.5 893,472.5 892,472.3 891,471.4 890,472.4 889,471.4 888,472.4 887,471.7 886,472.8 885,472.5 884,475.3 883,471.8 882,471.8 881,471.6 880,472.4 879,472.0 878,471.6 877,471.8 876,472.1 875,472.3 874,471.9 873,471.3 872,471.4 871,471.7 870,472.0 869,471.7 868,471.7 867,472.3 866,472.0 865,472.5 864,471.4 863,471.8 862,471.8 861,472.3 860,471.8 859,472.1 858,471.9 857,472.5 856,472.3 855,472.0 854,471.7 853,472.0 852,471.9 851,471.9 850,473.3 849,476.3 848,471.5 847,472.3 846,472.3 845,471.5 844,471.8 843,472.0 842,471.7 841,472.1 840,471.7 839,472.5 838,471.4 837,471.5 836,473.8 835,471.8 834,471.4 833,471.5 832,471.4 831,472.1 830,472.4 829,471.6 828,471.6 827,471.4 826,471.3 825,472.3 824,473.1 823,472.5 822,471.6 821,472.4 820,471.7 819,471.5 818,472.1 817,474.9 816,472.4 815,471.9 814,471.3 813,472.3 812,471.9 811,472.5 810,471.8 809,472.0 808,471.5 807,471.8 806,475.2 805,475.3 804,471.8 803,474.3 802,475.6 801,473.5 800,475.5 799,473.1 798,483.3 797,475.7 796,475.5 795,474.0 794,478.2 793,475.2 792,481.7 791,478.2 790,478.4 789,476.5 788,477.8 787,477.1 786,479.7 785,479.2 784,483.4 783,477.9 782,478.4 781,480.3 780,479.6 779,478.0 778,479.1 777,479.8 776,482.3 775,480.3 774,481.4 773,482.1 772,480.2 771,481.0 770,480.7 769,481.8 768,487.7 767,483.6 766,481.7 765,484.6 764,483.8 763,484.7 762,493.7 761,488.8 760,488.4 759,485.9 758,485.0 757,486.3 756,490.1 755,491.1 754,489.2 753,490.4 752,494.0 751,490.0 750,486.7 749,493.7 748,496.5 747,488.5 746,493.4 745,501.1 744,494.3 743,488.3 742,489.1 741,489.9 740,489.6 739,493.7 738,490.4 737,486.4 736,489.4 735,496.9 734,490.0 733,485.1 732,487.5 731,491.9 730,494.8 729,490.3 728,485.9 727,483.7 726,483.7 725,485.3 724,482.3 723,485.5 722,486.2 721,479.7 720,479.3 719,484.1 718,478.3 717,478.4 716,480.1 715,479.0 714,478.1 713,477.9 712,479.4 711,476.2 710,477.5 709,475.0 708,477.3 707,473.7 706,474.4 705,473.2 704,473.0 703,473.4 702,473.5 701,473.4 700,473.0 699,473.4 698,472.8 697,473.4 696,473.6 695,473.5 694,477.3 693,476.2 692,478.5 691,475.8 690,473.7 689,473.3 688,475.0 687,473.1 686,473.2 685,473.3 684,473.7 683,472.9 682,473.1 681,476.6 680,473.0 679,473.6 678,473.7 677,473.9 676,473.9 675,473.6 674,473.6 673,473.4 672,473.6 671,473.1 670,473.6 669,473.7 668,472.9 667,475.4 666,477.9 665,476.4 664,475.4 663,473.6 662,474.4 661,473.7 660,473.8 659,473.8 658,473.1 657,473.8 656,473.7 655,473.4 654,473.3 653,473.4 652,473.8 651,473.4 650,473.7 649,473.0 648,472.8 647,473.5 646,473.6 645,473.6 644,473.5 643,473.0 642,476.7 641,473.0 640,473.4 639,473.7 638,473.7 637,473.4 636,473.2 635,473.3 634,473.1 633,473.8 632,476.1 631,473.7 630,472.8 629,475.9 628,477.8 627,475.0 626,474.3 625,473.5 624,473.7 623,473.9 622,472.9 621,473.7 620,473.9 619,473.3 618,473.4 617,473.6 616,473.4 615,473.5 614,473.7 613,473.0 612,473.7 611,473.2 610,473.5 609,473.2 608,472.9 607,474.3 606,472.8 605,473.3 604,473.1 603,473.6 602,473.8 601,473.0 600,473.0 599,477.9 598,482.2 597,477.8 596,476.4 595,473.5 594,477.6 593,473.8 592,472.9 591,476.6 590,480.8 589,477.4 588,474.0 587,472.8 586,473.3 585,473.2 584,473.2 583,473.8 582,473.1 581,473.8 580,472.9 579,473.9 578,473.0 577,475.8 576,477.6 575,481.1 574,477.2 573,472.8 572,473.2 571,480.2 570,487.5 569,481.0 568,473.7 567,478.6 566,482.9 565,477.8 564,472.8 563,474.0 562,473.7 561,473.9 560,473.5 559,473.4 558,477.6 557,473.0 556,475.8 555,473.2 554,477.0 553,479.7 552,476.8 551,473.0 550,476.5 549,473.1 548,473.1 547,473.9 546,473.0 545,473.8 544,473.9 543,473.2 542,473.2 541,477.0 540,478.9 539,476.3 538,473.9 537,477.3 536,473.2 535,472.9 534,473.4 533,473.0 532,473.8 531,476.6 530,472.9 529,473.2" fill="#fff" /><polygon points="529,532.6 530,531.4 531,532.2 532,530.5 533,531.9 534,531.5 535,530.7 536,530.8 537,531.4 538,531.4 539,532.0 540,531.8 541,531.1 542,531.4 543,531.7 544,532.4 545,531.5 546,530.6 547,532.5 548,532.4 549,532.1 550,531.5 551,530.9 552,531.1 553,530.5 554,531.2 555,530.8 556,531.8 557,529.9 558,532.3 559,530.9 560,531.1 561,530.6 562,532.5 563,532.5 564,532.6 565,532.0 566,530.5 567,532.5 568,530.8 569,531.2 570,532.5 571,532.5 572,531.8 573,533.0 574,531.8 575,531.7 576,532.5 577,533.0 578,532.2 579,532.4 580,532.2 581,530.1 582,531.3 583,532.3 584,532.0 585,533.0 586,531.7 587,531.9 588,532.0 589,532.2 590,533.4 591,532.5 592,531.9 593,532.8 594,532.2 595,533.2 596,532.4 597,532.0 598,533.2 599,532.3 600,532.6 601,533.3 602,531.7 603,532.2 604,531.8 605,533.1 606,533.4 607,533.1 608,533.7 609,531.6 610,533.3 611,531.8 612,532.6 613,533.1 614,532.0 615,533.5 616,532.6 617,533.2 618,531.8 619,531.8 620,532.5 621,533.7 622,533.0 623,532.9 624,532.0 625,533.5 626,532.9 627,530.3 628,532.6 629,533.3 630,533.3 631,531.8 632,533.5 633,532.6 634,532.1 635,531.6 636,531.3 637,533.4 638,532.0 639,531.9 640,531.3 641,531.6 642,533.1 643,532.8 644,532.4 645,532.6 646,532.7 647,532.0 648,532.8 649,532.4 650,531.8 651,532.0 652,531.4 653,532.2 654,532.8 655,532.6 656,532.4 657,533.0 658,532.3 659,531.9 660,532.8 661,530.7 662,531.0 663,531.5 664,530.7 665,530.9 666,528.1 667,530.8 668,532.2 669,531.0 670,530.8 671,532.6 672,531.2 673,531.2 674,530.9 675,529.2 676,532.2 677,530.7 678,532.3 679,531.0 680,532.2 681,531.8 682,531.8 683,531.5 684,530.9 685,530.8 686,531.4 687,531.2 688,531.3 689,530.7 690,531.3 691,531.5 692,531.6 693,532.3 694,529.8 695,532.5 696,532.0 697,531.8 698,531.0 699,531.4 700,531.4 701,528.9 702,531.0 703,532.4 704,531.0 705,532.3 706,532.1 707,532.6 708,532.5 709,530.9 710,529.6 711,532.9 712,531.1 713,531.4 714,532.4 715,531.7 716,531.1 717,531.3 718,531.8 719,531.5 720,532.6 721,532.1 722,532.9 723,532.5 724,531.7 725,531.5 726,532.9 727,532.6 728,533.0 729,531.9 730,532.0 731,531.9 732,532.4 733,531.7 734,531.4 735,532.7 736,532.6 737,531.8 738,528.0 739,533.0 740,531.8 741,533.4 742,533.0 743,531.9 744,533.6 745,532.9 746,533.7 747,533.3 748,532.2 749,532.0 750,532.3 751,532.1 752,533.7 753,529.1 754,533.1 755,532.9 756,533.6 757,533.1 758,531.7 759,533.3 760,531.8 761,533.6 762,533.4 763,532.6 764,532.9 765,532.5 766,533.4 767,533.5 768,531.6 769,532.9 770,533.6 771,533.0 772,531.8 773,532.2 774,533.0 775,533.4 776,532.9 777,533.0 778,533.2 779,532.4 780,532.9 781,532.6 782,531.3 783,531.6 784,533.3 785,532.3 786,532.4 787,533.3 788,532.8 789,531.2 790,531.4 791,531.2 792,532.2 793,532.7 794,532.2 795,532.2 796,532.4 797,532.3 798,531.4 799,532.1 800,531.1 801,532.5 802,533.0 803,531.2 804,529.4 805,532.5 806,532.5 807,532.1 808,531.6 809,530.7 810,532.1 811,531.1 812,531.3 813,532.1 814,532.0 815,531.6 816,532.4 817,532.3 818,532.5 819,531.1 820,531.6 821,532.4 822,531.5 823,530.9 824,531.3 825,531.3 826,532.2 827,532.2 828,530.9 829,531.9 830,532.3 831,532.5 832,531.0 833,531.8 834,530.8 835,531.7 836,531.3 837,531.8 838,528.7 839,527.5 840,531.3 841,532.0 842,532.3 843,531.4 844,532.0 845,532.7 846,531.1 847,531.4 848,530.9 849,531.2 850,531.2 851,528.8 852,532.7 853,531.2 854,532.1 855,531.4 856,531.3 857,532.3 858,532.8 859,531.3 860,530.9 861,531.3 862,531.2 863,531.7 864,531.6 865,531.1 866,529.5 867,532.5 868,533.1 869,531.3 870,532.1 871,532.6 872,531.6 873,533.0 874,530.7 875,531.3 876,532.7 877,532.0 878,531.4 879,532.9 880,532.9 881,532.4 882,532.2 883,532.5 884,533.2 885,532.6 886,531.5 887,531.6 888,532.6 889,531.5 890,533.0 891,529.2 892,531.9 893,532.0 894,529.7 895,533.4 896,532.4 897,532.9 898,532.1 899,532.5 900,532.4 901,533.1 902,533.4 903,532.8 904,533.3 905,533.7 906,533.1 907,532.6 908,531.7 909,532.2 910,532.3 911,531.8 911,539.5 910,541.5 909,538.3 908,538.2 907,538.2 906,537.9 905,539.3 904,539.4 903,538.9 902,538.9 901,538.6 900,539.0 899,539.0 898,539.0 897,539.0 896,537.6 895,538.7 894,538.1 893,538.0 892,538.1 891,537.4 890,537.7 889,538.8 888,538.2 887,541.3 886,539.4 885,538.2 884,538.3 883,538.5 882,539.3 881,538.5 880,538.6 879,538.8 878,539.0 877,541.6 876,538.9 875,537.8 874,537.8 873,541.0 872,539.6 871,537.9 870,537.1 869,538.6 868,538.3 867,538.4 866,537.0 865,538.7 864,537.1 863,537.6 862,540.3 861,538.5 860,538.4 859,537.2 858,538.7 857,536.7 856,537.7 855,537.4 854,538.4 853,536.9 852,536.6 851,536.9 850,538.2 849,538.4 848,537.8 847,538.5 846,537.4 845,536.5 844,538.2 843,538.1 842,537.0 841,536.8 840,537.1 839,538.0 838,536.8 837,537.4 836,536.8 835,538.1 834,537.8 833,538.3 832,538.2 831,536.4 830,537.6 829,537.9 828,538.3 827,538.3 826,537.9 825,536.9 824,536.9 823,536.2 822,537.5 821,536.4 820,536.3 819,537.6 818,538.2 817,537.6 816,538.3 815,537.9 814,538.2 813,536.8 812,537.8 811,537.8 810,536.7 809,538.5 808,536.7 807,537.2 806,537.1 805,537.1 804,538.0 803,537.5 802,537.7 801,537.1 800,538.7 799,539.2 798,537.9 797,537.0 796,536.8 795,537.5 794,541.7 793,538.5 792,537.4 791,538.6 790,537.8 789,537.4 788,538.4 787,537.5 786,537.6 785,537.4 784,537.1 783,537.7 782,539.7 781,539.0 780,537.9 779,538.0 778,538.2 777,539.2 776,537.6 775,539.4 774,537.7 773,538.6 772,539.2 771,539.0 770,538.3 769,537.4 768,542.6 767,539.5 766,538.7 765,537.9 764,537.8 763,538.8 762,537.9 761,539.3 760,539.2 759,537.8 758,538.1 757,538.4 756,537.7 755,537.7 754,539.4 753,542.2 752,537.9 751,537.8 750,538.8 749,538.7 748,538.1 747,538.9 746,539.4 745,539.3 744,538.3 743,537.4 742,538.9 741,538.1 740,538.8 739,538.2 738,539.1 737,537.8 736,538.4 735,538.7 734,537.1 733,537.4 732,538.5 731,537.4 730,539.1 729,539.1 728,537.5 727,538.2 726,538.1 725,538.4 724,539.0 723,538.8 722,542.6 721,538.3 720,538.5 719,540.8 718,536.9 717,538.6 716,538.7 715,538.2 714,537.6 713,539.1 712,538.4 711,536.8 710,537.3 709,536.6 708,537.0 707,537.2 706,538.2 705,536.5 704,536.8 703,538.5 702,536.8 701,538.5 700,537.7 699,537.1 698,536.5 697,538.2 696,538.0 695,537.2 694,538.0 693,538.1 692,537.9 691,536.8 690,536.9 689,536.3 688,538.3 687,537.9 686,537.0 685,537.6 684,536.8 683,536.8 682,537.4 681,536.9 680,537.9 679,537.1 678,538.1 677,537.5 676,537.5 675,538.2 674,537.1 673,537.1 672,538.2 671,536.9 670,538.0 669,536.6 668,537.1 667,537.9 666,538.0 665,538.2 664,536.8 663,536.6 662,537.8 661,536.5 660,537.8 659,538.5 658,537.2 657,541.0 656,538.1 655,538.8 654,539.5 653,538.3 652,539.9 651,537.9 650,538.1 649,538.9 648,537.1 647,537.8 646,537.1 645,537.7 644,537.8 643,537.5 642,538.6 641,538.0 640,537.5 639,537.1 638,538.7 637,538.3 636,538.6 635,537.4 634,539.1 633,538.8 632,538.1 631,539.1 630,541.6 629,539.4 628,538.3 627,538.1 626,538.5 625,537.7 624,538.3 623,538.1 622,537.6 621,539.3 620,537.9 619,538.3 618,538.1 617,538.0 616,541.4 615,539.5 614,537.6 613,539.2 612,538.6 611,538.1 610,537.9 609,538.0 608,539.5 607,538.3 606,537.8 605,539.2 604,537.6 603,539.5 602,537.7 601,538.2 600,538.1 599,538.9 598,537.8 597,538.0 596,541.2 595,538.3 594,537.7 593,537.3 592,539.2 591,537.7 590,537.8 589,537.9 588,539.1 587,539.4 586,538.1 585,537.2 584,541.0 583,537.6 582,537.0 581,537.9 580,537.4 579,539.0 578,537.1 577,538.8 576,536.9 575,538.3 574,537.3 573,536.7 572,537.8 571,537.5 570,537.6 569,537.5 568,536.8 567,536.6 566,538.0 565,537.5 564,536.5 563,536.7 562,537.6 561,538.0 560,538.4 559,540.6 558,538.0 557,537.2 556,538.1 555,537.9 554,536.9 553,537.0 552,537.9 551,537.9 550,536.7 549,538.3 548,538.3 547,536.8 546,538.1 545,536.6 544,536.3 543,536.6 542,536.9 541,537.4 540,537.3 539,536.2 538,538.4 537,536.9 536,536.7 535,537.2 534,538.1 533,537.9 532,537.3 531,538.1 530,536.9 529,538.0" fill="#fff" /><polygon points="616.5,472 617.5,517 618.8,473" fill="#fff" /><polyline points="617,472 617.6,517.0" fill="none" stroke="#fff" stroke-width="1" /><rect x="952" y="443" width="240" height="191" fill="#d4d0c8" /><rect x="952.5" y="443.5" width="239" height="190" fill="none" stroke="#202020" stroke-width="1" /><rect x="954.5" y="445.5" width="235" height="186" fill="none" stroke="#202020" stroke-width="1" /><text x="958.9" y="463.9" font-family='"Liberation Sans", sans-serif' font-size="20.5" fill="#000" font-weight="bold" text-anchor="start" stroke="#000" stroke-width="0.7">TTL</text><text x="1047" y="464" font-family='"Liberation Sans", sans-serif' font-size="11" fill="#000" font-weight="bold" text-anchor="start" >TTL</text><ellipse cx="1073.5" cy="481.0" rx="25.0" ry="10.0" fill="#8a8a8a" opacity="0.7"/><ellipse cx="1072.0" cy="479.0" rx="24.5" ry="9.5" fill="url(#ledg)" stroke="#3a3a3a" stroke-width="1"/><polygon points="1083,474.0 1093,479.0 1083,484.0" fill="#2a7a2a" /><text x="976.8" y="512.5" font-family='"Liberation Sans", sans-serif' font-size="10.6" fill="#000" font-weight="normal" text-anchor="start" >Low Time (sec)</text><text x="1096.5" y="512.5" font-family='"Liberation Sans", sans-serif' font-size="10.6" fill="#000" font-weight="normal" text-anchor="start" >Low Time (sec)</text><rect x="966.5" y="514.8" width="9.5" height="11.700000000000045" rx="4.75" ry="5.25" fill="url(#spin)" stroke="#a0a0a0" stroke-width="0.8"/><rect x="966.5" y="526.0" width="9.5" height="11.200000000000045" rx="4.75" ry="5.25" fill="url(#spin)" stroke="#a0a0a0" stroke-width="0.8"/><polyline points="968.8,522.0 971.2,518.3 973.8,522.0" fill="none" stroke="#555" stroke-width="0.9" /><polyline points="968.8,530.0 971.2,533.7 973.8,530.0" fill="none" stroke="#555" stroke-width="0.9" /><rect x="977" y="515.3" width="83" height="22.90000000000009" fill="#d0ccc4" /><polygon points="977,515.3 1060,515.3 1057,518.3 980,518.3" fill="#aeaaa2" /><polygon points="977,515.3 980,518.3 980,535.2 977,538.2" fill="#b8b4ac" /><polygon points="977,538.2 1060,538.2 1057,535.2 980,535.2" fill="#e4e1da" /><polygon points="1060,515.3 1060,538.2 1057,535.2 1057,518.3" fill="#dcd9d2" /><rect x="980" y="518.8" width="76" height="15.400000000000091" fill="#fcfcfc" /><text x="982.5" y="530.5" font-family='"Liberation Sans", sans-serif' font-size="11.5" fill="#000" font-weight="normal" text-anchor="start" >500.00</text><rect x="1086.1" y="514.8" width="9.400000000000091" height="11.700000000000045" rx="4.7000000000000455" ry="5.2000000000000455" fill="url(#spin)" stroke="#a0a0a0" stroke-width="0.8"/><rect x="1086.1" y="526.0" width="9.400000000000091" height="11.200000000000045" rx="4.7000000000000455" ry="5.2000000000000455" fill="url(#spin)" stroke="#a0a0a0" stroke-width="0.8"/><polyline points="1088.3,522.0 1090.8,518.3 1093.3,522.0" fill="none" stroke="#555" stroke-width="0.9" /><polyline points="1088.3,530.0 1090.8,533.7 1093.3,530.0" fill="none" stroke="#555" stroke-width="0.9" /><rect x="1097" y="515.3" width="83" height="22.90000000000009" fill="#d0ccc4" /><polygon points="1097,515.3 1180,515.3 1177,518.3 1100,518.3" fill="#aeaaa2" /><polygon points="1097,515.3 1100,518.3 1100,535.2 1097,538.2" fill="#b8b4ac" /><polygon points="1097,538.2 1180,538.2 1177,535.2 1100,535.2" fill="#e4e1da" /><polygon points="1180,515.3 1180,538.2 1177,535.2 1177,518.3" fill="#dcd9d2" /><rect x="1100" y="518.8" width="76" height="15.400000000000091" fill="#fcfcfc" /><text x="1102.5" y="530.5" font-family='"Liberation Sans", sans-serif' font-size="11.5" fill="#000" font-weight="normal" text-anchor="start" >500.00</text><rect x="966.5" y="551.0" width="9.5" height="14.0" rx="4.75" ry="5.25" fill="url(#spin)" stroke="#a0a0a0" stroke-width="0.8"/><rect x="966.5" y="564.5" width="9.5" height="13.5" rx="4.75" ry="5.25" fill="url(#spin)" stroke="#a0a0a0" stroke-width="0.8"/><polyline points="968.8,559.7 971.2,555.3 973.8,559.7" fill="none" stroke="#555" stroke-width="0.9" /><polyline points="968.8,569.3 971.2,573.7 973.8,569.3" fill="none" stroke="#555" stroke-width="0.9" /><rect x="977" y="551.5" width="83" height="27.5" fill="#d0ccc4" /><polygon points="977,551.5 1060,551.5 1057,554.5 980,554.5" fill="#aeaaa2" /><polygon points="977,551.5 980,554.5 980,576 977,579" fill="#b8b4ac" /><polygon points="977,579 1060,579 1057,576 980,576" fill="#e4e1da" /><polygon points="1060,551.5 1060,579 1057,576 1057,554.5" fill="#dcd9d2" /><rect x="980" y="555" width="76" height="20" fill="#fcfcfc" /><text x="982.5" y="570.8" font-family='"Liberation Sans", sans-serif' font-size="16.5" fill="#000" font-weight="normal" text-anchor="start" >10.00</text><rect x="1086.1" y="551.0" width="9.400000000000091" height="14.0" rx="4.7000000000000455" ry="5.2000000000000455" fill="url(#spin)" stroke="#a0a0a0" stroke-width="0.8"/><rect x="1086.1" y="564.5" width="9.400000000000091" height="13.5" rx="4.7000000000000455" ry="5.2000000000000455" fill="url(#spin)" stroke="#a0a0a0" stroke-width="0.8"/><polyline points="1088.3,559.7 1090.8,555.3 1093.3,559.7" fill="none" stroke="#555" stroke-width="0.9" /><polyline points="1088.3,569.3 1090.8,573.7 1093.3,569.3" fill="none" stroke="#555" stroke-width="0.9" /><rect x="1097" y="551.5" width="83" height="27.5" fill="#d0ccc4" /><polygon points="1097,551.5 1180,551.5 1177,554.5 1100,554.5" fill="#aeaaa2" /><polygon points="1097,551.5 1100,554.5 1100,576 1097,579" fill="#b8b4ac" /><polygon points="1097,579 1180,579 1177,576 1100,576" fill="#e4e1da" /><polygon points="1180,551.5 1180,579 1177,576 1177,554.5" fill="#dcd9d2" /><rect x="1100" y="555" width="76" height="20" fill="#fcfcfc" /><text x="1102.5" y="570.8" font-family='"Liberation Sans", sans-serif' font-size="16.5" fill="#000" font-weight="normal" text-anchor="start" >20.00</text><rect x="966.5" y="598.6" width="9.5" height="14.099999999999966" rx="4.75" ry="5.25" fill="url(#spin)" stroke="#a0a0a0" stroke-width="0.8"/><rect x="966.5" y="612.2" width="9.5" height="13.599999999999966" rx="4.75" ry="5.25" fill="url(#spin)" stroke="#a0a0a0" stroke-width="0.8"/><polyline points="968.8,607.4 971.2,602.9 973.8,607.4" fill="none" stroke="#555" stroke-width="0.9" /><polyline points="968.8,617.0 971.2,621.5 973.8,617.0" fill="none" stroke="#555" stroke-width="0.9" /><rect x="977" y="599.1" width="83" height="27.699999999999932" fill="#d0ccc4" /><polygon points="977,599.1 1060,599.1 1057,602.1 980,602.1" fill="#aeaaa2" /><polygon points="977,599.1 980,602.1 980,623.8 977,626.8" fill="#b8b4ac" /><polygon points="977,626.8 1060,626.8 1057,623.8 980,623.8" fill="#e4e1da" /><polygon points="1060,599.1 1060,626.8 1057,623.8 1057,602.1" fill="#dcd9d2" /><rect x="980" y="602.6" width="76" height="20.199999999999932" fill="#fcfcfc" /><text x="982.5" y="618.5" font-family='"Liberation Sans", sans-serif' font-size="16.5" fill="#000" font-weight="normal" text-anchor="start" >30.00</text><rect x="1086.1" y="598.6" width="9.400000000000091" height="14.099999999999966" rx="4.7000000000000455" ry="5.2000000000000455" fill="url(#spin)" stroke="#a0a0a0" stroke-width="0.8"/><rect x="1086.1" y="612.2" width="9.400000000000091" height="13.599999999999966" rx="4.7000000000000455" ry="5.2000000000000455" fill="url(#spin)" stroke="#a0a0a0" stroke-width="0.8"/><polyline points="1088.3,607.4 1090.8,602.9 1093.3,607.4" fill="none" stroke="#555" stroke-width="0.9" /><polyline points="1088.3,617.0 1090.8,621.5 1093.3,617.0" fill="none" stroke="#555" stroke-width="0.9" /><rect x="1097" y="599.1" width="83" height="27.699999999999932" fill="#d0ccc4" /><polygon points="1097,599.1 1180,599.1 1177,602.1 1100,602.1" fill="#aeaaa2" /><polygon points="1097,599.1 1100,602.1 1100,623.8 1097,626.8" fill="#b8b4ac" /><polygon points="1097,626.8 1180,626.8 1177,623.8 1100,623.8" fill="#e4e1da" /><polygon points="1180,599.1 1180,626.8 1177,623.8 1177,602.1" fill="#dcd9d2" /><rect x="1100" y="602.6" width="76" height="20.199999999999932" fill="#fcfcfc" /><text x="1102.5" y="618.5" font-family='"Liberation Sans", sans-serif' font-size="16.5" fill="#000" font-weight="normal" text-anchor="start" >10.00</text><text x="969.7" y="550.5" font-family='"Liberation Sans", sans-serif' font-size="15.3" fill="#000" font-weight="normal" text-anchor="start" >Delay, ms</text><text x="1090.4" y="550.5" font-family='"Liberation Sans", sans-serif' font-size="15.3" fill="#000" font-weight="normal" text-anchor="start" >Delay, ms</text><text x="969" y="598" font-family='"Liberation Sans", sans-serif' font-size="15.3" fill="#000" font-weight="normal" text-anchor="start" >On, ms</text><text x="1088" y="596" font-family='"Liberation Sans", sans-serif' font-size="15.3" fill="#000" font-weight="normal" text-anchor="start" >On, ms</text><rect x="1135" y="636" width="110" height="11" fill="#b8b8b8" /><line x1="1135.5" y1="636" x2="1135.5" y2="647" stroke="#e0e0e0" stroke-width="1" /><text x="1148" y="648" font-family='"Liberation Sans", sans-serif' font-size="11" fill="#000" font-weight="normal" text-anchor="start" >Dev2/ai1</text><rect x="1205" y="638" width="27" height="9" fill="#000" /><polyline points="1209,646 1218,640 1227,646" fill="none" stroke="#fff" stroke-width="1" /><text x="463" y="631" font-family='"Liberation Sans", sans-serif' font-size="18" fill="#000" font-weight="bold" text-anchor="start" >V</text><rect x="480" y="606" width="83" height="32" fill="#d4d0c8" /><line x1="480" y1="606.5" x2="563" y2="606.5" stroke="#a0a0a0" stroke-width="1" /><line x1="480.5" y1="606" x2="480.5" y2="638" stroke="#a0a0a0" stroke-width="1" /><line x1="480" y1="637.5" x2="563" y2="637.5" stroke="#f0f0f0" stroke-width="1" /><line x1="562.5" y1="606" x2="562.5" y2="638" stroke="#f0f0f0" stroke-width="1" /><rect x="483" y="609" width="77" height="26" fill="#d0d0d0" /><text x="487" y="630" font-family='"Liberation Sans", sans-serif' font-size="18" fill="#000" font-weight="bold" text-anchor="start" >0</text><rect x="25" y="470" width="437" height="177" fill="#b6b6b6" /><line x1="25" y1="470.5" x2="462" y2="470.5" stroke="#e4e4e4" stroke-width="1" /><line x1="25.5" y1="470" x2="25.5" y2="647" stroke="#e4e4e4" stroke-width="1" /><rect x="455" y="470" width="5" height="177" fill="url(#rgrad2)"/><line x1="460.5" y1="470" x2="460.5" y2="647" stroke="#5a5a5a" stroke-width="1" /><line x1="461.5" y1="470" x2="461.5" y2="647" stroke="#6a6a6a" stroke-width="1" /><path d="M76,469 V439.5 Q76,436.5 79,436.5 H162 Q164,436.5 164,438.5 V469 Z" fill="#b6b6b6"/><path d="M76.5,469 V439.5 Q76.5,437.0 79,437.0 H162" fill="none" stroke="#e8e8e8" stroke-width="1"/><line x1="163.5" y1="438.5" x2="163.5" y2="469" stroke="#7a7a7a" stroke-width="1" /><text x="85.6" y="459.6" font-family='"Liberation Sans", sans-serif' font-size="20" fill="#000" font-weight="normal" text-anchor="start" >Annulus</text><path d="M164,469 V439.5 Q164,436.5 167,436.5 H222 Q224,436.5 224,438.5 V469 Z" fill="#b6b6b6"/><path d="M164.5,469 V439.5 Q164.5,437.0 167,437.0 H222" fill="none" stroke="#e8e8e8" stroke-width="1"/><line x1="223.5" y1="438.5" x2="223.5" y2="469" stroke="#7a7a7a" stroke-width="1" /><text x="175.6" y="459.6" font-family='"Liberation Sans", sans-serif' font-size="20" fill="#000" font-weight="normal" text-anchor="start" >Test</text><path d="M24,472 V438 Q24,435 27,435 H75 Q77,435 77,437 V472 Z" fill="#b6b6b6"/><path d="M24.5,472 V438 Q24.5,435.5 27,435.5 H75" fill="none" stroke="#e8e8e8" stroke-width="1"/><line x1="76.5" y1="437" x2="76.5" y2="472" stroke="#7a7a7a" stroke-width="1" /><text x="33" y="457.8" font-family='"Liberation Sans", sans-serif' font-size="20" fill="#000" font-weight="normal" text-anchor="start" >Bar</text><text x="41.6" y="488" font-family='"Liberation Sans", sans-serif' font-size="11.6" fill="#000" font-weight="bold" text-anchor="start" >Direction</text><circle cx="109" cy="570.5" r="76" fill="url(#bezel)"/><circle cx="109" cy="570.5" r="72.7" fill="#000"/><path d="M175.0,570.5L181.0,570.5M166.2,537.5L171.4,534.5M142.0,513.3L145.0,508.1M109.0,504.5L109.0,498.5M76.0,513.3L73.0,508.1M51.8,537.5L46.6,534.5M43.0,570.5L37.0,570.5M51.8,603.5L46.6,606.5M76.0,627.7L73.0,632.9M109.0,636.5L109.0,642.5M142.0,627.7L145.0,632.9M166.2,603.5L171.4,606.5" stroke="#20ff20" stroke-width="1.2"/><text x="106.4" y="515.8" font-family='"Liberation Sans", sans-serif' font-size="9.3" fill="#33ff33" font-weight="normal" text-anchor="middle" >90</text><text x="134.3" y="525.2" font-family='"Liberation Sans", sans-serif' font-size="9.3" fill="#33ff33" font-weight="normal" text-anchor="middle" >60</text><text x="156.5" y="543.9" font-family='"Liberation Sans", sans-serif' font-size="9.3" fill="#33ff33" font-weight="normal" text-anchor="middle" >30</text><text x="169.4" y="571.9" font-family='"Liberation Sans", sans-serif' font-size="9.3" fill="#33ff33" font-weight="normal" text-anchor="middle" >0</text><text x="157" y="598.0" font-family='"Liberation Sans", sans-serif' font-size="9.3" fill="#33ff33" font-weight="normal" text-anchor="middle" >330</text><text x="137.8" y="619.8" font-family='"Liberation Sans", sans-serif' font-size="9.3" fill="#33ff33" font-weight="normal" text-anchor="middle" >300</text><text x="110.8" y="631.7" font-family='"Liberation Sans", sans-serif' font-size="9.3" fill="#33ff33" font-weight="normal" text-anchor="middle" >270</text><text x="83.9" y="623.7" font-family='"Liberation Sans", sans-serif' font-size="9.3" fill="#33ff33" font-weight="normal" text-anchor="middle" >240</text><text x="62.9" y="604.2" font-family='"Liberation Sans", sans-serif' font-size="9.3" fill="#33ff33" font-weight="normal" text-anchor="middle" >210</text><text x="52.3" y="577.2" font-family='"Liberation Sans", sans-serif' font-size="9.3" fill="#33ff33" font-weight="normal" text-anchor="middle" >180</text><text x="60.3" y="550.1" font-family='"Liberation Sans", sans-serif' font-size="9.3" fill="#33ff33" font-weight="normal" text-anchor="middle" >150</text><text x="79.3" y="529.1" font-family='"Liberation Sans", sans-serif' font-size="9.3" fill="#33ff33" font-weight="normal" text-anchor="middle" >120</text><polygon points="109,566.5 169,567.5 169,569.5 109,574.5" fill="#b8b8b8" /><circle cx="109" cy="570.5" r="6.5" fill="url(#hub)"/><text x="262" y="497" font-family='"Liberation Sans", sans-serif' font-size="11.6" fill="#000" font-weight="bold" text-anchor="start" >X</text><rect x="279.1" y="479.0" width="9.399999999999977" height="11.5" rx="4.699999999999989" ry="5.199999999999989" fill="url(#spin)" stroke="#a0a0a0" stroke-width="0.8"/><rect x="279.1" y="490.0" width="9.399999999999977" height="11.0" rx="4.699999999999989" ry="5.199999999999989" fill="url(#spin)" stroke="#a0a0a0" stroke-width="0.8"/><polyline points="281.3,486.1 283.8,482.4 286.3,486.1" fill="none" stroke="#555" stroke-width="0.9" /><polyline points="281.3,493.9 283.8,497.6 286.3,493.9" fill="none" stroke="#555" stroke-width="0.9" /><rect x="289" y="479.5" width="54.39999999999998" height="22.5" fill="#d0ccc4" /><polygon points="289,479.5 343.4,479.5 340.4,482.5 292,482.5" fill="#aeaaa2" /><polygon points="289,479.5 292,482.5 292,499 289,502" fill="#b8b4ac" /><polygon points="289,502 343.4,502 340.4,499 292,499" fill="#e4e1da" /><polygon points="343.4,479.5 343.4,502 340.4,499 340.4,482.5" fill="#dcd9d2" /><rect x="292" y="483" width="47.39999999999998" height="15" fill="#fcfcfc" /><text x="294.5" y="495" font-family='"Liberation Sans", sans-serif' font-size="12.5" fill="#000" font-weight="bold" text-anchor="start" >200</text><text x="357.4" y="497" font-family='"Liberation Sans", sans-serif' font-size="11.6" fill="#000" font-weight="bold" text-anchor="start" >Y</text><rect x="375.5" y="479.0" width="9" height="11.5" rx="4.5" ry="5.0" fill="url(#spin)" stroke="#a0a0a0" stroke-width="0.8"/><rect x="375.5" y="490.0" width="9" height="11.0" rx="4.5" ry="5.0" fill="url(#spin)" stroke="#a0a0a0" stroke-width="0.8"/><polyline points="377.5,486.1 380.0,482.4 382.5,486.1" fill="none" stroke="#555" stroke-width="0.9" /><polyline points="377.5,493.9 380.0,497.6 382.5,493.9" fill="none" stroke="#555" stroke-width="0.9" /><rect x="385" y="479.5" width="54" height="22.5" fill="#d0ccc4" /><polygon points="385,479.5 439,479.5 436,482.5 388,482.5" fill="#aeaaa2" /><polygon points="385,479.5 388,482.5 388,499 385,502" fill="#b8b4ac" /><polygon points="385,502 439,502 436,499 388,499" fill="#e4e1da" /><polygon points="439,479.5 439,502 436,499 436,482.5" fill="#dcd9d2" /><rect x="388" y="483" width="47" height="15" fill="#fcfcfc" /><text x="390.5" y="495" font-family='"Liberation Sans", sans-serif' font-size="12.5" fill="#000" font-weight="bold" text-anchor="start" >150</text><text x="221.6" y="517" font-family='"Liberation Sans", sans-serif' font-size="11.2" fill="#000" font-weight="bold" text-anchor="start" >Display Stimulus</text><ellipse cx="247.2" cy="544.7" rx="24.10000000000001" ry="9.300000000000011" fill="#8a8a8a" opacity="0.7"/><ellipse cx="245.7" cy="542.7" rx="23.60000000000001" ry="8.800000000000011" fill="url(#ledg)" stroke="#3a3a3a" stroke-width="1"/><polygon points="255.8,537.7 265.8,542.7 255.8,547.7" fill="#40ff20" /><text x="221.6" y="571" font-family='"Liberation Sans", sans-serif' font-size="11.2" fill="#000" font-weight="bold" text-anchor="start" >Keep Running</text><ellipse cx="247.2" cy="592.75" rx="24.10000000000001" ry="9.25" fill="#8a8a8a" opacity="0.7"/><ellipse cx="245.7" cy="590.75" rx="23.60000000000001" ry="8.75" fill="url(#ledg)" stroke="#3a3a3a" stroke-width="1"/><polygon points="255.8,585.75 265.8,590.75 255.8,595.75" fill="#2a7a2a" /><text x="343.8" y="560" font-family='"Liberation Sans", sans-serif' font-size="11.2" fill="#000" font-weight="bold" text-anchor="start" >Bar Color</text><rect x="343" y="565" width="96" height="24" fill="#ffffff" /><rect x="187.7" y="611" width="98.5" height="24" fill="#d0d0d0" /><line x1="187.7" y1="611.5" x2="286.2" y2="611.5" stroke="#f0f0f0" stroke-width="1" /><line x1="188.2" y1="611" x2="188.2" y2="635" stroke="#f0f0f0" stroke-width="1" /><text x="190" y="632" font-family='"Liberation Sans", sans-serif' font-size="18.5" fill="#000" font-weight="normal" text-anchor="start" >Movement</text><rect x="188.5" y="637.5" width="129" height="9" fill="none" stroke="#202020" stroke-width="1" /><rect x="190.5" y="639.5" width="125" height="7" fill="none" stroke="#202020" stroke-width="1" /><rect x="331" y="599" width="36" height="24" fill="#d0d0d0" /><line x1="331" y1="599.5" x2="367" y2="599.5" stroke="#f0f0f0" stroke-width="1" /><line x1="331.5" y1="599" x2="331.5" y2="623" stroke="#f0f0f0" stroke-width="1" /><text x="333" y="619" font-family='"Liberation Sans", sans-serif' font-size="18.5" fill="#000" font-weight="normal" text-anchor="start" >Bar</text><rect x="331.5" y="625.5" width="119" height="21" fill="none" stroke="#202020" stroke-width="1" /><rect x="333.5" y="627.5" width="115" height="19" fill="none" stroke="#202020" stroke-width="1" /><text x="342" y="644" font-family='"Liberation Sans", sans-serif' font-size="15.5" fill="#000" font-weight="normal" text-anchor="start" >Width</text><rect x="0" y="647" width="1324" height="45" fill="#d4d0c8" /><line x1="0" y1="646.5" x2="1324" y2="646.5" stroke="#404040" stroke-width="1" /><line x1="0" y1="647.5" x2="1324" y2="647.5" stroke="#808080" stroke-width="1" /><line x1="0" y1="666.5" x2="1324" y2="666.5" stroke="#808080" stroke-width="1" /><line x1="0" y1="667.5" x2="1324" y2="667.5" stroke="#ffffff" stroke-width="1" /><line x1="0" y1="691.5" x2="1324" y2="691.5" stroke="#000" stroke-width="1" /><text x="8.6" y="660.5" font-family='"Liberation Sans", sans-serif' font-size="11.2" fill="#000" font-weight="normal" text-anchor="start" >Edit</text><line x1="8.6" y1="662.0" x2="16.070749999999997" y2="662.0" stroke="#000" stroke-width="1" /><text x="38.5" y="660.5" font-family='"Liberation Sans", sans-serif' font-size="11.2" fill="#000" font-weight="normal" text-anchor="start" >View</text><line x1="38.5" y1="662.0" x2="45.970749999999995" y2="662.0" stroke="#000" stroke-width="1" /><text x="72.5" y="660.5" font-family='"Liberation Sans", sans-serif' font-size="11.2" fill="#000" font-weight="normal" text-anchor="start" >Project</text><line x1="72.5" y1="662.0" x2="79.97075" y2="662.0" stroke="#000" stroke-width="1" /><text x="118.5" y="660.5" font-family='"Liberation Sans", sans-serif' font-size="11.2" fill="#000" font-weight="normal" text-anchor="start" >Operate</text><line x1="118.5" y1="662.0" x2="127.2115" y2="662.0" stroke="#000" stroke-width="1" /><text x="171" y="660.5" font-family='"Liberation Sans", sans-serif' font-size="11.2" fill="#000" font-weight="normal" text-anchor="start" >Tools</text><line x1="171" y1="662.0" x2="177.84074999999999" y2="662.0" stroke="#000" stroke-width="1" /><text x="207.5" y="660.5" font-family='"Liberation Sans", sans-serif' font-size="11.2" fill="#000" font-weight="normal" text-anchor="start" >Window</text><line x1="207.5" y1="662.0" x2="218.07175" y2="662.0" stroke="#000" stroke-width="1" /><text x="257.5" y="660.5" font-family='"Liberation Sans", sans-serif' font-size="11.2" fill="#000" font-weight="normal" text-anchor="start" >Help</text><line x1="257.5" y1="662.0" x2="265.5885" y2="662.0" stroke="#000" stroke-width="1" /><rect x="26" y="670" width="21" height="20" fill="#d8d4cc" /><line x1="27" y1="671.5" x2="46" y2="671.5" stroke="#f2f0ea" stroke-width="1" /><line x1="27.5" y1="671" x2="27.5" y2="689" stroke="#f2f0ea" stroke-width="1" /><line x1="27" y1="688.5" x2="46" y2="688.5" stroke="#a8a49c" stroke-width="1" /><line x1="45.5" y1="671" x2="45.5" y2="689" stroke="#a8a49c" stroke-width="1" /><rect x="26.5" y="670.5" width="20" height="19" fill="none" stroke="#404040" stroke-width="1" /><polygon points="30,677.5 36,677.5 36,673.5 42,680 36,686.5 36,682.5 30,682.5" fill="#fff" stroke="#000" stroke-width="1.2" /><rect x="47" y="670" width="22" height="20" fill="#d8d4cc" /><line x1="48" y1="671.5" x2="68" y2="671.5" stroke="#f2f0ea" stroke-width="1" /><line x1="48.5" y1="671" x2="48.5" y2="689" stroke="#f2f0ea" stroke-width="1" /><line x1="48" y1="688.5" x2="68" y2="688.5" stroke="#a8a49c" stroke-width="1" /><line x1="67.5" y1="671" x2="67.5" y2="689" stroke="#a8a49c" stroke-width="1" /><rect x="47.5" y="670.5" width="21" height="19" fill="none" stroke="#404040" stroke-width="1" /><polygon points="52,674 61,674 63,676 63,679 65,679 61.5,683 58,679 60,679 60,677 55,677" fill="#fff" stroke="#000" stroke-width="1.1" /><polygon points="62,686 53,686 51,684 51,681 49,681 52.5,677 56,681 54,681 54,683 59,683" fill="#fff" stroke="#000" stroke-width="1.1" /><rect x="73" y="670" width="20" height="20" fill="#d4d0c8" /><polygon points="89.9,682.9 85.9,686.9 80.1,686.9 76.1,682.9 76.1,677.1 80.1,673.1 85.9,673.1 89.9,677.1" fill="#c8c4bc" stroke="#9a9a9a" stroke-width="1" /><polygon points="88.1,682.1 85.1,685.1 80.9,685.1 77.9,682.1 77.9,677.9 80.9,674.9 85.1,674.9 88.1,677.9" fill="#e06868" /><rect x="94" y="670" width="21" height="20" fill="#d8d4cc" /><line x1="95" y1="671.5" x2="114" y2="671.5" stroke="#f2f0ea" stroke-width="1" /><line x1="95.5" y1="671" x2="95.5" y2="689" stroke="#f2f0ea" stroke-width="1" /><line x1="95" y1="688.5" x2="114" y2="688.5" stroke="#a8a49c" stroke-width="1" /><line x1="113.5" y1="671" x2="113.5" y2="689" stroke="#a8a49c" stroke-width="1" /><rect x="94.5" y="670.5" width="20" height="19" fill="none" stroke="#404040" stroke-width="1" /><rect x="100" y="675" width="3" height="10" fill="#000" /><rect x="106" y="675" width="3" height="10" fill="#000" /><rect x="120" y="670" width="21" height="20" fill="#d8d4cc" /><line x1="121" y1="671.5" x2="140" y2="671.5" stroke="#f2f0ea" stroke-width="1" /><line x1="121.5" y1="671" x2="121.5" y2="689" stroke="#f2f0ea" stroke-width="1" /><line x1="121" y1="688.5" x2="140" y2="688.5" stroke="#a8a49c" stroke-width="1" /><line x1="139.5" y1="671" x2="139.5" y2="689" stroke="#a8a49c" stroke-width="1" /><rect x="120.5" y="670.5" width="20" height="19" fill="none" stroke="#404040" stroke-width="1" /><rect x="146" y="670" width="21" height="20" fill="#d8d4cc" /><line x1="147" y1="671.5" x2="166" y2="671.5" stroke="#f2f0ea" stroke-width="1" /><line x1="147.5" y1="671" x2="147.5" y2="689" stroke="#f2f0ea" stroke-width="1" /><line x1="147" y1="688.5" x2="166" y2="688.5" stroke="#a8a49c" stroke-width="1" /><line x1="165.5" y1="671" x2="165.5" y2="689" stroke="#a8a49c" stroke-width="1" /><rect x="146.5" y="670.5" width="20" height="19" fill="none" stroke="#404040" stroke-width="1" /><rect x="172" y="670" width="21" height="20" fill="#d8d4cc" /><line x1="173" y1="671.5" x2="192" y2="671.5" stroke="#f2f0ea" stroke-width="1" /><line x1="173.5" y1="671" x2="173.5" y2="689" stroke="#f2f0ea" stroke-width="1" /><line x1="173" y1="688.5" x2="192" y2="688.5" stroke="#a8a49c" stroke-width="1" /><line x1="191.5" y1="671" x2="191.5" y2="689" stroke="#a8a49c" stroke-width="1" /><rect x="172.5" y="670.5" width="20" height="19" fill="none" stroke="#404040" stroke-width="1" /><rect x="193" y="670" width="21" height="20" fill="#d8d4cc" /><line x1="194" y1="671.5" x2="213" y2="671.5" stroke="#f2f0ea" stroke-width="1" /><line x1="194.5" y1="671" x2="194.5" y2="689" stroke="#f2f0ea" stroke-width="1" /><line x1="194" y1="688.5" x2="213" y2="688.5" stroke="#a8a49c" stroke-width="1" /><line x1="212.5" y1="671" x2="212.5" y2="689" stroke="#a8a49c" stroke-width="1" /><rect x="193.5" y="670.5" width="20" height="19" fill="none" stroke="#404040" stroke-width="1" /><rect x="214" y="670" width="21" height="20" fill="#d4d0c8" /><circle cx="130.5" cy="677" r="4.5" fill="#fff" stroke="#000" stroke-width="1"/><rect x="128" y="682" width="5" height="4" fill="#e0c000" stroke="#000" stroke-width="0.6" /><circle cx="152" cy="675" r="3" fill="#fff" stroke="#000" stroke-width="1"/><rect x="156" y="674" width="8" height="5" fill="#c0c0c0" /><rect x="153" y="681" width="5" height="4" fill="#fff" stroke="#000" stroke-width="0.6" /><line x1="148" y1="686.5" x2="164" y2="686.5" stroke="#0000ff" stroke-width="1" /><polygon points="162,684 166,686.5 162,689" fill="#00a000" /><polyline points="176,674 176,684 182,684" fill="none" stroke="#000" stroke-width="2" /><rect x="183" y="681" width="6" height="6" fill="#ffff80" stroke="#000" stroke-width="0.8" /><polyline points="197,685 197,677 207,677" fill="none" stroke="#000" stroke-width="2" /><rect x="199" y="681" width="6" height="6" fill="#ffff80" stroke="#000" stroke-width="0.8" /><rect x="218" y="681" width="6" height="6" fill="#e8e8c0" stroke="#a0a0a0" stroke-width="0.8" /><polyline points="224,683 229,683 229,675" fill="none" stroke="#a0a0a0" stroke-width="2" /><rect x="239" y="670" width="147" height="21" fill="#d8d4cc" /><line x1="240" y1="671.5" x2="385" y2="671.5" stroke="#f2f0ea" stroke-width="1" /><line x1="240.5" y1="671" x2="240.5" y2="690" stroke="#f2f0ea" stroke-width="1" /><line x1="240" y1="689.5" x2="385" y2="689.5" stroke="#a8a49c" stroke-width="1" /><line x1="384.5" y1="671" x2="384.5" y2="690" stroke="#a8a49c" stroke-width="1" /><rect x="239.5" y="670.5" width="146" height="20" fill="none" stroke="#404040" stroke-width="1" /><text x="245" y="684.5" font-family='"Liberation Sans", sans-serif' font-size="11.2" fill="#000" font-weight="normal" text-anchor="start" >13pt Application Font</text><line x1="367.5" y1="673" x2="367.5" y2="688" stroke="#808080" stroke-width="1" /><line x1="368.5" y1="673" x2="368.5" y2="688" stroke="#ffffff" stroke-width="1" /><polygon points="374,679 380,679 377,682" fill="#000" /><rect x="389" y="670" width="33" height="21" fill="#d8d4cc" /><line x1="390" y1="671.5" x2="421" y2="671.5" stroke="#f2f0ea" stroke-width="1" /><line x1="390.5" y1="671" x2="390.5" y2="690" stroke="#f2f0ea" stroke-width="1" /><line x1="390" y1="689.5" x2="421" y2="689.5" stroke="#a8a49c" stroke-width="1" /><line x1="420.5" y1="671" x2="420.5" y2="690" stroke="#a8a49c" stroke-width="1" /><rect x="389.5" y="670.5" width="32" height="20" fill="none" stroke="#404040" stroke-width="1" /><polygon points="413,679.5 419,679.5 416,682.5" fill="#000" /><rect x="394" y="674" width="4" height="4" fill="#00c000" stroke="#000" stroke-width="0.6" /><line x1="396" y1="678" x2="396" y2="684" stroke="#000" stroke-width="1" /><rect x="398" y="680" width="8" height="5" fill="#ffff60" stroke="#000" stroke-width="0.6" /><line x1="393" y1="685.5" x2="407" y2="685.5" stroke="#000" stroke-width="1" /><rect x="426" y="670" width="32" height="21" fill="#d8d4cc" /><line x1="427" y1="671.5" x2="457" y2="671.5" stroke="#f2f0ea" stroke-width="1" /><line x1="427.5" y1="671" x2="427.5" y2="690" stroke="#f2f0ea" stroke-width="1" /><line x1="427" y1="689.5" x2="457" y2="689.5" stroke="#a8a49c" stroke-width="1" /><line x1="456.5" y1="671" x2="456.5" y2="690" stroke="#a8a49c" stroke-width="1" /><rect x="426.5" y="670.5" width="31" height="20" fill="none" stroke="#404040" stroke-width="1" /><polygon points="449,679.5 455,679.5 452,682.5" fill="#000" /><line x1="432" y1="675.5" x2="444" y2="675.5" stroke="#000" stroke-width="1" /><rect x="433" y="678" width="3" height="7" fill="#ffff60" stroke="#000" stroke-width="0.6" /><rect x="438" y="680" width="5" height="5" fill="#00c000" stroke="#000" stroke-width="0.6" /><line x1="430" y1="681.5" x2="432" y2="681.5" stroke="#000" stroke-width="1" /><rect x="464" y="670" width="33" height="21" fill="#d8d4cc" /><line x1="465" y1="671.5" x2="496" y2="671.5" stroke="#f2f0ea" stroke-width="1" /><line x1="465.5" y1="671" x2="465.5" y2="690" stroke="#f2f0ea" stroke-width="1" /><line x1="465" y1="689.5" x2="496" y2="689.5" stroke="#a8a49c" stroke-width="1" /><line x1="495.5" y1="671" x2="495.5" y2="690" stroke="#a8a49c" stroke-width="1" /><rect x="464.5" y="670.5" width="32" height="20" fill="none" stroke="#404040" stroke-width="1" /><path d="M470,682 A6,5 0 0 1 480,676" fill="none" stroke="#707070" stroke-width="3"/><path d="M480,679 A6,5 0 0 1 470,685" fill="none" stroke="#909090" stroke-width="3"/><polygon points="488,679 494,679 491,682" fill="#000" /><rect x="500" y="670" width="26" height="21" fill="#d8d4cc" /><line x1="501" y1="671.5" x2="525" y2="671.5" stroke="#f2f0ea" stroke-width="1" /><line x1="501.5" y1="671" x2="501.5" y2="690" stroke="#f2f0ea" stroke-width="1" /><line x1="501" y1="689.5" x2="525" y2="689.5" stroke="#a8a49c" stroke-width="1" /><line x1="524.5" y1="671" x2="524.5" y2="690" stroke="#a8a49c" stroke-width="1" /><rect x="500.5" y="670.5" width="25" height="20" fill="none" stroke="#404040" stroke-width="1" /><polygon points="504,676 514,681 504,686" fill="#ffff40" stroke="#606000" stroke-width="0.8" /><polyline points="517,673 517,684" fill="none" stroke="#604020" stroke-width="2" /><polygon points="512,684 522,684 523,689 511,689" fill="#c08040" /><rect x="1155" y="671" width="145" height="20" fill="#ffffff" /><line x1="1155" y1="671.5" x2="1300" y2="671.5" stroke="#808080" stroke-width="1" /><line x1="1155.5" y1="671" x2="1155.5" y2="691" stroke="#808080" stroke-width="1" /><line x1="1156" y1="672.5" x2="1300" y2="672.5" stroke="#404040" stroke-width="1" /><rect x="1156" y="672" width="13" height="18" fill="#d8d4cc" /><line x1="1157" y1="673.5" x2="1168" y2="673.5" stroke="#f2f0ea" stroke-width="1" /><line x1="1157.5" y1="673" x2="1157.5" y2="689" stroke="#f2f0ea" stroke-width="1" /><line x1="1157" y1="688.5" x2="1168" y2="688.5" stroke="#a8a49c" stroke-width="1" /><line x1="1167.5" y1="673" x2="1167.5" y2="689" stroke="#a8a49c" stroke-width="1" /><rect x="1156.5" y="672.5" width="12" height="17" fill="none" stroke="#404040" stroke-width="1" /><polygon points="1160,679 1163,681 1160,683" fill="#000" /><line x1="1164.5" y1="676" x2="1164.5" y2="687" stroke="#000" stroke-width="1" /><text x="1172" y="686" font-family='"Liberation Sans", sans-serif' font-size="11.2" fill="#a0a0a0" font-weight="normal" text-anchor="start" >Search</text><circle cx="1278" cy="679" r="5" fill="#d8d8ff" stroke="#404080" stroke-width="1.2"/><line x1="1281.5" y1="682.5" x2="1286" y2="687" stroke="#806040" stroke-width="2.2" /><rect x="1303" y="670" width="23" height="20" fill="#d8d4cc" /><line x1="1304" y1="671.5" x2="1325" y2="671.5" stroke="#f2f0ea" stroke-width="1" /><line x1="1304.5" y1="671" x2="1304.5" y2="689" stroke="#f2f0ea" stroke-width="1" /><line x1="1304" y1="688.5" x2="1325" y2="688.5" stroke="#a8a49c" stroke-width="1" /><line x1="1324.5" y1="671" x2="1324.5" y2="689" stroke="#a8a49c" stroke-width="1" /><rect x="1303.5" y="670.5" width="22" height="19" fill="none" stroke="#404040" stroke-width="1" /><text x="1314.5" y="686" font-family='"Liberation Sans", sans-serif' font-size="17" fill="#ffff80" font-weight="bold" text-anchor="middle" stroke="#000" stroke-width="1">?</text><rect x="0" y="692" width="1324" height="594" fill="#ffffff" /><pattern id="hp1" x="0" y="706" width="4" height="5" patternUnits="userSpaceOnUse"><rect width="4" height="5" fill="#fff"/><rect x="1" y="0" width="1" height="1" fill="#000"/><rect x="3" y="0" width="1" height="1" fill="#000"/><rect x="0" y="1" width="1" height="1" fill="#000"/><rect x="2" y="1" width="1" height="1" fill="#000"/><rect x="2" y="2" width="1" height="1" fill="#000"/><rect x="3" y="2" width="1" height="1" fill="#000"/><rect x="0" y="3" width="1" height="1" fill="#000"/><rect x="1" y="3" width="1" height="1" fill="#000"/><rect x="1" y="4" width="1" height="1" fill="#000"/><rect x="3" y="4" width="1" height="1" fill="#000"/></pattern><rect x="0" y="705" width="1324" height="1" fill="#000" /><rect x="0" y="706" width="1324" height="5" fill="url(#hp1)"/><rect x="0" y="718" width="1324" height="6" fill="#808080" /><pattern id="hp2" x="0" y="726" width="4" height="5" patternUnits="userSpaceOnUse"><rect width="4" height="5" fill="#fff"/><rect x="1" y="0" width="1" height="1" fill="#000"/><rect x="3" y="0" width="1" height="1" fill="#000"/><rect x="0" y="1" width="1" height="1" fill="#000"/><rect x="2" y="1" width="1" height="1" fill="#000"/><rect x="2" y="2" width="1" height="1" fill="#000"/><rect x="3" y="2" width="1" height="1" fill="#000"/><rect x="0" y="3" width="1" height="1" fill="#000"/><rect x="1" y="3" width="1" height="1" fill="#000"/><rect x="1" y="4" width="1" height="1" fill="#000"/><rect x="3" y="4" width="1" height="1" fill="#000"/></pattern><rect x="0" y="725" width="1324" height="1" fill="#000" /><rect x="0" y="726" width="1324" height="5" fill="url(#hp2)"/><rect x="144.5" y="705.5" width="127" height="14" fill="#fff" stroke="#000" stroke-width="1" /><line x1="152.5" y1="705" x2="152.5" y2="720" stroke="#000" stroke-width="1" /><line x1="263.5" y1="705" x2="263.5" y2="720" stroke="#000" stroke-width="1" /><polygon points="146,712.5 151,708.5 151,716.5" fill="#000" /><polygon points="270,712.5 265,708.5 265,716.5" fill="#000" /><polygon points="254,709.5 261,709.5 257.5,713.5" fill="#000" /><text x="156" y="717" font-family='"Liberation Sans", sans-serif' font-size="10.8" fill="#000" font-weight="normal" text-anchor="start" >"Aqcuisition"</text><rect x="392.5" y="726.5" width="61" height="13" fill="#fff" stroke="#000" stroke-width="1" /><line x1="400.5" y1="726" x2="400.5" y2="740" stroke="#000" stroke-width="1" /><line x1="445.5" y1="726" x2="445.5" y2="740" stroke="#000" stroke-width="1" /><polygon points="394,733.0 399,729.0 399,737.0" fill="#000" /><polygon points="452,733.0 447,729.0 447,737.0" fill="#000" /><polygon points="436,730.0 443,730.0 439.5,734.0" fill="#000" /><text x="404" y="737" font-family='"Liberation Sans", sans-serif' font-size="10.8" fill="#000" font-weight="normal" text-anchor="start" >True</text><path d="M182,1055 V763 Q182,758 187,758 H643 Q648,758 648,763 V1055 Q648,1060 643,1060 H187 Q182,1060 182,1055 Z" fill="none" stroke="#808080" stroke-width="6"/><pattern id="wv0" x="0" y="0" width="4" height="2" patternUnits="userSpaceOnUse"><rect x="1" y="0" width="1" height="1" fill="#8a008a"/><rect x="2" y="0" width="1" height="1" fill="#8a008a"/><rect x="3" y="0" width="1" height="1" fill="#8a008a"/><rect x="0" y="1" width="1" height="1" fill="#8a008a"/><rect x="1" y="1" width="1" height="1" fill="#8a008a"/><rect x="3" y="1" width="1" height="1" fill="#8a008a"/></pattern><rect x="0" y="840" width="1018" height="2" fill="url(#wv0)" transform="translate(0,0)"/><pattern id="wv1" x="0" y="0" width="2" height="4" patternUnits="userSpaceOnUse"><rect x="0" y="1" width="1" height="1" fill="#8a008a"/><rect x="0" y="2" width="1" height="1" fill="#8a008a"/><rect x="0" y="3" width="1" height="1" fill="#8a008a"/><rect x="1" y="0" width="1" height="1" fill="#8a008a"/><rect x="1" y="1" width="1" height="1" fill="#8a008a"/><rect x="1" y="3" width="1" height="1" fill="#8a008a"/></pattern><rect x="1016" y="784" width="2" height="58" fill="url(#wv1)"/><rect x="1017" y="784" width="103" height="2" fill="url(#wv0)" transform="translate(0,0)"/><rect x="-1" y="865" width="1021" height="3" fill="#c4c400" /><line x1="0" y1="866.5" x2="1019" y2="866.5" stroke="#000" stroke-width="1" stroke-dasharray="2,2"/><line x1="2" y1="866.5" x2="1019" y2="866.5" stroke="#ffff00" stroke-width="1" stroke-dasharray="2,2"/><rect x="1017" y="810" width="3" height="58" fill="#c4c400" /><line x1="1018.5" y1="811" x2="1018.5" y2="867" stroke="#000" stroke-width="1" stroke-dasharray="2,2"/><line x1="1018.5" y1="813" x2="1018.5" y2="867" stroke="#ffff00" stroke-width="1" stroke-dasharray="2,2"/><rect x="1017" y="810" width="309" height="3" fill="#c4c400" /><line x1="1018" y1="811.5" x2="1325" y2="811.5" stroke="#000" stroke-width="1" stroke-dasharray="2,2"/><line x1="1020" y1="811.5" x2="1325" y2="811.5" stroke="#ffff00" stroke-width="1" stroke-dasharray="2,2"/><polyline points="0.0,1023.5 300.0,1023.5" fill="none" stroke="#0000ff" stroke-width="1"  stroke-linejoin="miter"/><polyline points="0.0,1090.5 602.5,1090.5 602.5,1064.5 650.0,1064.5" fill="none" stroke="#0000ff" stroke-width="1"  stroke-linejoin="miter"/><polyline points="204.0,1047.5 358.0,1047.5" fill="none" stroke="#0000ff" stroke-width="1"  stroke-linejoin="miter"/><polyline points="210.5,1047.5 210.5,933.5 238.5,933.5 238.5,937.0 244,937" fill="none" stroke="#0000ff" stroke-width="1"  stroke-linejoin="miter"/><polyline points="210.5,976.5 282.5,976.5 282.5,979.0 290,979" fill="none" stroke="#0000ff" stroke-width="1"  stroke-linejoin="miter"/><polyline points="282,990 290,990" fill="none" stroke="#0000ff" stroke-width="1"  stroke-linejoin="miter"/><polyline points="308.0,983.5 389.5,983.5 389.5,960.5 396.0,960.5" fill="none" stroke="#0000ff" stroke-width="1"  stroke-linejoin="miter"/><polyline points="282.0,1033.5 302.0,1033.5" fill="none" stroke="#0000ff" stroke-width="1"  stroke-linejoin="miter"/><circle cx="210.5" cy="1047.5" r="2.5" fill="#0000ff"/><circle cx="210.5" cy="976.5" r="2.5" fill="#0000ff"/><polyline points="240.5,842.0 240.5,860.5 263.0,860.5" fill="none" stroke="#ff7f00" stroke-width="1"  stroke-linejoin="miter"/><polyline points="225.0,854.5 263.0,854.5" fill="none" stroke="#0000ff" stroke-width="1"  stroke-linejoin="miter"/><polyline points="231.0,946.5 246.0,946.5" fill="none" stroke="#ff7f00" stroke-width="1"  stroke-linejoin="miter"/><polyline points="294.0,848.5 364.5,848.5 364.5,968.5 396.0,968.5" fill="none" stroke="#ff7f00" stroke-width="3" stroke-linejoin="miter"/><polyline points="294.0,848.5 364.5,848.5 364.5,968.5 396.0,968.5" fill="none" stroke="#fff" stroke-width="1" stroke-linejoin="miter"/><polyline points="364.5,893.5 449.0,893.5" fill="none" stroke="#ff7f00" stroke-width="3" stroke-linejoin="miter"/><polyline points="364.5,893.5 449.0,893.5" fill="none" stroke="#fff" stroke-width="1" stroke-linejoin="miter"/><polyline points="441.0,903.5 452.0,903.5" fill="none" stroke="#ff7f00" stroke-width="1"  stroke-linejoin="miter"/><polyline points="470.0,897.5 500.0,897.5" fill="none" stroke="#ff7f00" stroke-width="3" stroke-linejoin="miter"/><polyline points="470.0,897.5 500.0,897.5" fill="none" stroke="#fff" stroke-width="1" stroke-linejoin="miter"/><polyline points="485.5,897.5 485.5,926.5 500.0,926.5" fill="none" stroke="#ff7f00" stroke-width="3" stroke-linejoin="miter"/><polyline points="485.5,897.5 485.5,926.5 500.0,926.5" fill="none" stroke="#fff" stroke-width="1" stroke-linejoin="miter"/><polyline points="531.0,898.5 558.0,898.5" fill="none" stroke="#ff7f00" stroke-width="3" stroke-linejoin="miter"/><polyline points="531.0,898.5 558.0,898.5" fill="none" stroke="#fff" stroke-width="1" stroke-linejoin="miter"/><polyline points="531.0,962.5 558.0,962.5" fill="none" stroke="#ff7f00" stroke-width="2"  stroke-linejoin="miter"/><polyline points="489.0,946.5 500.0,946.5" fill="none" stroke="#0000ff" stroke-width="1"  stroke-linejoin="miter"/><polyline points="264.0,941.5 266.0,941.5" fill="none" stroke="#008000" stroke-width="1"  stroke-linejoin="miter"/><polyline points="297.0,941.5 333.0,941.5" fill="none" stroke="#008000" stroke-width="1" stroke-dasharray="1,1" stroke-linejoin="miter"/><polyline points="318.0,933.5 334.0,933.5" fill="none" stroke="#ff7f00" stroke-width="3" stroke-linejoin="miter"/><polyline points="318.0,933.5 334.0,933.5" fill="none" stroke="#fff" stroke-width="1" stroke-linejoin="miter"/><polyline points="358.0,941.5 396.0,941.5" fill="none" stroke="#ff7f00" stroke-width="3" stroke-linejoin="miter"/><polyline points="358.0,941.5 396.0,941.5" fill="none" stroke="#fff" stroke-width="1" stroke-linejoin="miter"/><polyline points="391.0,1005.5 327.5,1005.5 327.5,948.5 335.0,948.5" fill="none" stroke="#ff7f00" stroke-width="3" stroke-linejoin="miter"/><polyline points="391.0,1005.5 327.5,1005.5 327.5,948.5 335.0,948.5" fill="none" stroke="#fff" stroke-width="1" stroke-linejoin="miter"/><polyline points="426.0,940.5 444.5,940.5 444.5,1005.5" fill="none" stroke="#ff7f00" stroke-width="3" stroke-linejoin="miter"/><polyline points="426.0,940.5 444.5,940.5 444.5,1005.5" fill="none" stroke="#fff" stroke-width="1" stroke-linejoin="miter"/><polyline points="422.0,1005.5 640.5,1005.5 640.5,849.5 648.0,849.5" fill="none" stroke="#ff7f00" stroke-width="3" stroke-linejoin="miter"/><polyline points="422.0,1005.5 640.5,1005.5 640.5,849.5 648.0,849.5" fill="none" stroke="#fff" stroke-width="1" stroke-linejoin="miter"/><circle cx="364.5" cy="893.5" r="2.5" fill="#fff" stroke="#ff7f00" stroke-width="1"/><circle cx="485.5" cy="897.5" r="2.5" fill="#fff" stroke="#ff7f00" stroke-width="1"/><circle cx="444.5" cy="1005.5" r="2.5" fill="#fff" stroke="#ff7f00" stroke-width="1"/><polyline points="343.0,1028.5 350.5,1028.5 350.5,1038.5 360.0,1038.5" fill="none" stroke="#ff7f00" stroke-width="1"  stroke-linejoin="miter"/><polyline points="379.0,1042.5 390.5,1042.5 390.5,1047.5 428.0,1047.5" fill="none" stroke="#008000" stroke-width="1" stroke-dasharray="1,1" stroke-linejoin="miter"/><polyline points="651.0,849.5 705.5,849.5 705.5,800.5 710.0,800.5" fill="none" stroke="#ff7f00" stroke-width="3" stroke-linejoin="miter"/><polyline points="651.0,849.5 705.5,849.5 705.5,800.5 710.0,800.5" fill="none" stroke="#fff" stroke-width="1" stroke-linejoin="miter"/><polyline points="691.0,798.5 702.0,798.5" fill="none" stroke="#ff7f00" stroke-width="1"  stroke-linejoin="miter"/><polyline points="720.0,795.5 735.5,795.5" fill="none" stroke="#ff7f00" stroke-width="3" stroke-linejoin="miter"/><polyline points="720.0,795.5 735.5,795.5" fill="none" stroke="#fff" stroke-width="1" stroke-linejoin="miter"/><polyline points="735.5,795.5 735.5,786.5 765.0,786.5" fill="none" stroke="#ff7f00" stroke-width="3" stroke-linejoin="miter"/><polyline points="735.5,795.5 735.5,786.5 765.0,786.5" fill="none" stroke="#fff" stroke-width="1" stroke-linejoin="miter"/><polyline points="735.5,795.5 735.5,807.5 956.5,807.5 956.5,785.5 962.0,785.5" fill="none" stroke="#ff7f00" stroke-width="3" stroke-linejoin="miter"/><polyline points="735.5,795.5 735.5,807.5 956.5,807.5 956.5,785.5 962.0,785.5" fill="none" stroke="#fff" stroke-width="1" stroke-linejoin="miter"/><circle cx="735.5" cy="795.5" r="3" fill="#fff" stroke="#ff7f00" stroke-width="1"/><polyline points="797.0,786.5 831.0,786.5" fill="none" stroke="#0000ff" stroke-width="2"  stroke-linejoin="miter"/><polyline points="802.5,786.5 802.5,757.5 831.0,757.5" fill="none" stroke="#0000ff" stroke-width="2"  stroke-linejoin="miter"/><circle cx="802.5" cy="786.5" r="2.5" fill="#0000ff"/><polyline points="822.0,764.5 831.0,764.5" fill="none" stroke="#0000ff" stroke-width="1"  stroke-linejoin="miter"/><polyline points="822.0,797.5 826.5,797.5 826.5,793.5 831.0,793.5" fill="none" stroke="#0000ff" stroke-width="1"  stroke-linejoin="miter"/><polyline points="862.0,757.5 866.0,757.5" fill="none" stroke="#0000ff" stroke-width="1"  stroke-linejoin="miter"/><polyline points="896.0,767.5 907.0,767.5" fill="none" stroke="#ff7f00" stroke-width="1"  stroke-linejoin="miter"/><polyline points="862.0,764.5 868.5,764.5 868.5,779.5 907.0,779.5" fill="none" stroke="#0000ff" stroke-width="1"  stroke-linejoin="miter"/><polyline points="862.0,797.5 872.5,797.5 872.5,785.5 907.0,785.5" fill="none" stroke="#0000ff" stroke-width="1"  stroke-linejoin="miter"/><polyline points="938.0,775.5 962.0,775.5" fill="none" stroke="#ff7f00" stroke-width="3" stroke-linejoin="miter"/><polyline points="938.0,775.5 962.0,775.5" fill="none" stroke="#fff" stroke-width="1" stroke-linejoin="miter"/><polyline points="982.0,780.5 991.5,780.5 991.5,892.5 1050.0,892.5" fill="none" stroke="#ff7f00" stroke-width="3" stroke-linejoin="miter"/><polyline points="982.0,780.5 991.5,780.5 991.5,892.5 1050.0,892.5" fill="none" stroke="#fff" stroke-width="1" stroke-linejoin="miter"/><polyline points="991.5,892.5 797.5,892.5 797.5,1014.0" fill="none" stroke="#ff7f00" stroke-width="3" stroke-linejoin="miter"/><polyline points="991.5,892.5 797.5,892.5 797.5,1014.0" fill="none" stroke="#fff" stroke-width="1" stroke-linejoin="miter"/><circle cx="991.5" cy="892.5" r="3" fill="#fff" stroke="#ff7f00" stroke-width="1"/><polyline points="1042.0,906.5 1050.0,906.5" fill="none" stroke="#0000ff" stroke-width="1"  stroke-linejoin="miter"/><polyline points="1081.0,925.5 1086.5,925.5 1086.5,997.5 1258.5,997.5 1258.5,1004.0" fill="none" stroke="#ff7f00" stroke-width="2"  stroke-linejoin="miter"/><rect x="670.0" y="792.0" width="20" height="13" fill="#fff" stroke="#ff7f00" stroke-width="2" /><text x="680.0" y="802.4" font-family='"Liberation Sans", sans-serif' font-size="10.8" fill="#000" font-weight="normal" text-anchor="middle" >0.1</text><polygon points="699.5,785.5 719.5,795.5 699.5,805.5" fill="#ffffc8" stroke="#000" stroke-width="1" /><text x="706.98" y="799.5" font-family='"Liberation Sans", sans-serif' font-size="10" fill="#000" font-weight="bold" text-anchor="middle" >×</text><rect x="765.5" y="776.5" width="31" height="20" fill="#ffffc8" stroke="#000" stroke-width="1" /><path d="M768.5,779V792M768,779.5H781M772.5,779V792M768,783.5H781M777.5,779V792M768,788.5H781M781.5,779V792M768,792.5H781" stroke="#000" stroke-width="1" fill="none"/><polyline points="786,780 786,792 794,792" fill="none" stroke="#000" stroke-width="1" /><rect x="830.5" y="742.5" width="31" height="25" fill="#ffffc8" stroke="#000" stroke-width="1" /><path d="M834.5,745V755M834,745.5H844M839.5,745V755M834,750.5H844M844.5,745V755M834,755.5H844" stroke="#000" stroke-width="1" fill="none"/><rect x="834" y="761" width="4" height="3" fill="#000" /><rect x="853" y="759" width="5" height="5" fill="#fff" stroke="#000" stroke-width="0.8" /><rect x="831.5" y="777.5" width="30" height="25" fill="#ffffc8" stroke="#000" stroke-width="1" /><path d="M835.5,780V790M835,780.5H845M840.5,780V790M835,785.5H845M845.5,780V790M835,790.5H845" stroke="#000" stroke-width="1" fill="none"/><rect x="835" y="796" width="4" height="3" fill="#000" /><rect x="854" y="794" width="5" height="5" fill="#fff" stroke="#000" stroke-width="0.8" /><rect x="810.25" y="757.25" width="10.5" height="13.5" fill="#fff" stroke="#0000ff" stroke-width="2.5" /><text x="815.5" y="767.9" font-family='"Liberation Sans", sans-serif' font-size="10.8" fill="#000" font-weight="normal" text-anchor="middle" >0</text><rect x="810.25" y="790.25" width="10.5" height="12.5" fill="#fff" stroke="#0000ff" stroke-width="2.5" /><text x="815.5" y="800.4" font-family='"Liberation Sans", sans-serif' font-size="10.8" fill="#000" font-weight="normal" text-anchor="middle" >1</text><rect x="867.25" y="761.25" width="27.5" height="12.5" fill="#fff" stroke="#ff7f00" stroke-width="2.5" /><text x="881.0" y="771.4" font-family='"Liberation Sans", sans-serif' font-size="10.8" fill="#000" font-weight="normal" text-anchor="middle" >1000</text><rect x="907.5" y="758.5" width="31" height="34" fill="#ffffc8" stroke="#000" stroke-width="1" /><rect x="911" y="763" width="5" height="5" fill="#fff" stroke="#000" stroke-width="0.8" /><path d="M926.5,765V779M926,765.5H935M930.5,765V779M926,772.5H935M935.5,765V779M926,779.5H935" stroke="#000" stroke-width="1" fill="none"/><line x1="911" y1="777.5" x2="919" y2="777.5" stroke="#000" stroke-width="1" /><line x1="911" y1="784.5" x2="919" y2="784.5" stroke="#000" stroke-width="1" /><polygon points="961.5,770.5 981.5,780.5 961.5,790.5" fill="#ffffc8" stroke="#000" stroke-width="1" /><text x="968.98" y="784.5" font-family='"Liberation Sans", sans-serif' font-size="10" fill="#000" font-weight="bold" text-anchor="middle" >×</text><rect x="1050.5" y="884.5" width="30" height="49" fill="#ffffc8" stroke="#000" stroke-width="1" /><path d="M1053.5,887V897M1053,887.5H1063M1058.5,887V897M1053,892.5H1063M1063.5,887V897M1053,897.5H1063" stroke="#000" stroke-width="1" fill="none"/><path d="M1066.5,905V915M1066,905.5H1076M1071.5,905V915M1066,910.5H1076M1076.5,905V915M1066,915.5H1076" stroke="#000" stroke-width="1" fill="none"/><path d="M1066.5,920V930M1066,920.5H1076M1071.5,920V930M1066,925.5H1076M1076.5,920V930M1066,930.5H1076" stroke="#000" stroke-width="1" fill="none"/><rect x="1053" y="906" width="4" height="3" fill="#000" /><rect x="1053" y="920" width="4" height="3" fill="#000" /><rect x="1031.25" y="899.25" width="10.5" height="13.5" fill="#fff" stroke="#0000ff" stroke-width="2.5" /><text x="1036.5" y="909.9" font-family='"Liberation Sans", sans-serif' font-size="10.8" fill="#000" font-weight="normal" text-anchor="middle" >0</text><rect x="1087.5" y="905.5" width="11" height="13" fill="#fff" stroke="#000" stroke-width="1" /><text x="1093" y="916" font-family='"Liberation Sans", sans-serif' font-size="10" fill="#000" font-weight="normal" text-anchor="middle" >I</text><rect x="1314.25" y="747.25" width="14.5" height="13.5" fill="#fff" stroke="#0000ff" stroke-width="2.5" /><text x="1316" y="759" font-family='"Liberation Sans", sans-serif' font-size="10.8" fill="#000" font-weight="normal" text-anchor="start" >0</text><rect x="0.5" y="838.5" width="20" height="31" fill="#fff" stroke="#000" stroke-width="1" /><rect x="1" y="839" width="19" height="8" fill="#a00000" /><text x="10.5" y="846.2" font-family='"Liberation Sans", sans-serif' font-size="7.6" fill="#fff" font-weight="bold" text-anchor="middle" >DAQmx</text><circle cx="8" cy="857" r="8" fill="#1e90ff" stroke="#000" stroke-width="1"/><rect x="0" y="854" width="14" height="5" fill="#fff" stroke="#000" stroke-width="0.6" /><rect x="119.5" y="838.5" width="31" height="31" fill="#fff" stroke="#000" stroke-width="1" /><rect x="120" y="839" width="30" height="8" fill="#a00000" /><text x="135.0" y="846.2" font-family='"Liberation Sans", sans-serif' font-size="7.6" fill="#fff" font-weight="bold" text-anchor="middle" >DAQmx</text><polygon points="123,849 133,854 123,859" fill="#00c000" /><path d="M135,858 Q133,858 133,861 V864 L131,865 L133,866 V869" fill="none" stroke="#000" stroke-width="1"/><polyline points="137,858 140.0,855.5 143,858 146.0,855.5 149,858" fill="none" stroke="#00a000" stroke-width="1" /><polyline points="137,862 137,860 140,860 140,862 143,862 143,860 146,860 146,862 149,862" fill="none" stroke="#0000c0" stroke-width="1" /><polyline points="137,866 140,864 143,866 146,864 149,866" fill="none" stroke="#ff0000" stroke-width="1" /><rect x="262.5" y="838.5" width="31" height="31" fill="#fff" stroke="#000" stroke-width="1" /><rect x="263" y="839" width="30" height="8" fill="#a00000" /><text x="278.0" y="846.2" font-family='"Liberation Sans", sans-serif' font-size="7.6" fill="#fff" font-weight="bold" text-anchor="middle" >DAQmx</text><circle cx="273" cy="854" r="4" fill="#40e0e0" stroke="#000" stroke-width="1"/><circle cx="283" cy="854" r="4" fill="#40e0e0" stroke="#000" stroke-width="1"/><polyline points="264,866 270,860 276,866 282,860 290,866" fill="none" stroke="#ff0000" stroke-width="1.2" /><rect x="2.75" y="873.75" width="42.5" height="15.5" fill="#fff" stroke="#8a008a" stroke-width="1.5" /><rect x="0.75" y="871.75" width="42.5" height="15.5" fill="#fff" stroke="#8a008a" stroke-width="1.5" /><text x="3" y="884" font-family='"Liberation Sans", sans-serif' font-size="10.8" fill="#000" font-weight="normal" text-anchor="start" >Clock</text><polygon points="33,877 40,877 36.5,881" fill="#8a008a" /><rect x="180" y="837" width="8" height="8" fill="#800080" /><rect x="180.5" y="837.5" width="7" height="7" fill="none" stroke="#000" stroke-width="1" /><rect x="180" y="862" width="8" height="8" fill="#808000" /><rect x="180.5" y="862.5" width="7" height="7" fill="none" stroke="#000" stroke-width="1" /><rect x="179" y="1019" width="9" height="9" fill="#0000ff" /><rect x="179.5" y="1019.5" width="8" height="8" fill="none" stroke="#000" stroke-width="1" /><rect x="643" y="838" width="8" height="8" fill="#800080" /><rect x="643.5" y="838.5" width="7" height="7" fill="none" stroke="#000" stroke-width="1" /><rect x="643" y="846" width="8" height="7" fill="#ff8000" /><rect x="643.5" y="846.5" width="7" height="6" fill="none" stroke="#000" stroke-width="1" /><rect x="643" y="863" width="8" height="7" fill="#808000" /><rect x="643.5" y="863.5" width="7" height="6" fill="none" stroke="#000" stroke-width="1" /><rect x="229.0" y="827.0" width="22" height="14" fill="#fff" stroke="#ff7f00" stroke-width="2" /><text x="240.0" y="837.9" font-family='"Liberation Sans", sans-serif' font-size="10.8" fill="#000" font-weight="normal" text-anchor="middle" >120</text><rect x="202.25" y="848.25" width="22.5" height="12.5" fill="#fff" stroke="#0000ff" stroke-width="2.5" /><text x="213.5" y="858.4" font-family='"Liberation Sans", sans-serif' font-size="10.8" fill="#000" font-weight="normal" text-anchor="middle" >100</text><rect x="235.75" y="873.75" width="86.5" height="27.5" fill="#fff" stroke="#8a008a" stroke-width="1.5" /><rect x="233.75" y="871.75" width="86.5" height="27.5" fill="#fff" stroke="#8a008a" stroke-width="1.5" /><text x="236" y="884" font-family='"Liberation Sans", sans-serif' font-size="10.8" fill="#000" font-weight="normal" text-anchor="start" >Analog 2D DBL</text><text x="236" y="897" font-family='"Liberation Sans", sans-serif' font-size="10.8" fill="#000" font-weight="normal" text-anchor="start" >NChan NSamp</text><polygon points="311,885 318,885 314.5,889" fill="#8a008a" /><rect x="220.0" y="940.0" width="11" height="13" fill="#fff" stroke="#ff7f00" stroke-width="2" /><text x="225.5" y="950.4" font-family='"Liberation Sans", sans-serif' font-size="10.8" fill="#000" font-weight="normal" text-anchor="middle" >0</text><polygon points="243.5,932.5 263.5,941.5 243.5,950.5" fill="#ffffc8" stroke="#000" stroke-width="1" /><text x="250.98" y="945.5" font-family='"Liberation Sans", sans-serif' font-size="12" fill="#000" font-weight="bold" text-anchor="middle" >=</text><rect x="266.75" y="922.75" width="30.5" height="32.5" fill="#fff" stroke="#ff7f00" stroke-width="1.5" /><rect x="268.5" y="924.5" width="27" height="29" fill="none" stroke="#ff7f00" stroke-width="1" /><line x1="268" y1="939.5" x2="296" y2="939.5" stroke="#ff7f00" stroke-width="2" /><rect x="268" y="924" width="8" height="30" fill="#ffe0c0" /><text x="278" y="937" font-family='"Liberation Sans", sans-serif' font-size="10.8" fill="#000" font-weight="normal" text-anchor="start" >0</text><text x="278" y="952" font-family='"Liberation Sans", sans-serif' font-size="10.8" fill="#000" font-weight="normal" text-anchor="start" >0</text><rect x="300.0" y="923.0" width="17" height="20" fill="#f8e8d8" stroke="#e0a070" stroke-width="2" /><text x="308.5" y="938" font-family='"Liberation Sans", sans-serif' font-size="11" fill="#909090" font-weight="normal" text-anchor="middle" >0</text><polygon points="332.5,927.5 358.5,940.5 332.5,953.5" fill="#ffffc8" stroke="#000" stroke-width="1" /><polyline points="336,933 346.0,940.5 336,948" fill="none" stroke="#000" stroke-width="1.5" /><line x1="346" y1="940.5" x2="356" y2="940.5" stroke="#000" stroke-width="1.5" /><rect x="395.5" y="932.5" width="31" height="39" fill="#ffffc8" stroke="#000" stroke-width="1" /><path d="M398.5,935V945M398,935.5H408M403.5,935V945M398,940.5H408M408.5,935V945M398,945.5H408" stroke="#000" stroke-width="1" fill="none"/><path d="M413.5,935V945M413,935.5H423M418.5,935V945M413,940.5H423M423.5,935V945M413,945.5H423" stroke="#000" stroke-width="1" fill="none"/><rect x="398" y="958" width="4" height="3" fill="#000" /><rect x="398" y="963" width="10" height="5" fill="#fff" stroke="#000" stroke-width="0.8" /><polygon points="288.5,973.5 308.5,983.0 288.5,992.5" fill="#ffffc8" stroke="#000" stroke-width="1" /><text x="295.98" y="987.0" font-family='"Liberation Sans", sans-serif' font-size="10" fill="#000" font-weight="bold" text-anchor="middle" >×</text><rect x="258.25" y="983.25" width="22.5" height="13.5" fill="#fff" stroke="#0000ff" stroke-width="2.5" /><text x="269.5" y="993.9" font-family='"Liberation Sans", sans-serif' font-size="10.8" fill="#000" font-weight="normal" text-anchor="middle" >100</text><rect x="418.0" y="896.0" width="22" height="14" fill="#fff" stroke="#ff7f00" stroke-width="2" /><text x="429.0" y="906.9" font-family='"Liberation Sans", sans-serif' font-size="10.8" fill="#000" font-weight="normal" text-anchor="middle" >100</text><polygon points="449.5,888.5 469.5,898.0 449.5,907.5" fill="#ffffc8" stroke="#000" stroke-width="1" /><text x="456.98" y="902.0" font-family='"Liberation Sans", sans-serif' font-size="10" fill="#000" font-weight="bold" text-anchor="middle" >×</text><rect x="500.5" y="887.5" width="30" height="23" fill="#ffffc8" stroke="#000" stroke-width="1" /><path d="M503.5,889V899M503,889.5H513M508.5,889V899M503,894.5H513M513.5,889V899M503,899.5H513" stroke="#000" stroke-width="1" fill="none"/><path d="M516.5,894V902M516,894.5H527M522.5,894V902M516,898.5H527M527.5,894V902M516,902.5H527" stroke="#000" stroke-width="1" fill="none"/><text x="504" y="909" font-family='"Liberation Sans", sans-serif' font-size="7.5" fill="#000" font-weight="bold" text-anchor="start" >×ᵢⱼ ×ᵢⱼ</text><rect x="500.5" y="921.5" width="30" height="50" fill="#ffffc8" stroke="#000" stroke-width="1" /><path d="M503.5,924V934M503,924.5H513M508.5,924V934M503,929.5H513M513.5,924V934M503,934.5H513" stroke="#000" stroke-width="1" fill="none"/><path d="M516.5,940V950M516,940.5H526M521.5,940V950M516,945.5H526M526.5,940V950M516,950.5H526" stroke="#000" stroke-width="1" fill="none"/><path d="M516.5,956V966M516,956.5H526M521.5,956V966M516,961.5H526M526.5,956V966M516,966.5H526" stroke="#000" stroke-width="1" fill="none"/><rect x="503" y="945" width="4" height="3" fill="#000" /><rect x="503" y="960" width="4" height="3" fill="#000" /><rect x="478.25" y="939.25" width="10.5" height="14.5" fill="#fff" stroke="#0000ff" stroke-width="2.5" /><text x="483.5" y="950.4" font-family='"Liberation Sans", sans-serif' font-size="10.8" fill="#000" font-weight="normal" text-anchor="middle" >0</text><text x="559" y="890" font-family='"Liberation Sans", sans-serif' font-size="10.5" fill="#000" font-weight="normal" text-anchor="start" >Combined Chart</text><text x="559" y="953" font-family='"Liberation Sans", sans-serif' font-size="10.5" fill="#000" font-weight="normal" text-anchor="start" >Current Chart</text><rect x="558.6" y="892.6" width="29.8" height="13.8" fill="#fff" stroke="#ff7f00" stroke-width="1.2" /><rect x="560" y="894" width="6" height="11" fill="#ffd8b0" /><text x="576" y="903" font-family='"Liberation Sans", sans-serif' font-size="8" fill="#ff7f00" font-weight="bold" text-anchor="middle" >DBL]</text><polygon points="562,896 566,899.5 562,903" fill="#000" /><rect x="558.6" y="955.6" width="29.8" height="13.8" fill="#fff" stroke="#ff7f00" stroke-width="1.2" /><rect x="560" y="957" width="6" height="11" fill="#ffd8b0" /><text x="576" y="966" font-family='"Liberation Sans", sans-serif' font-size="8" fill="#ff7f00" font-weight="bold" text-anchor="middle" >DBL]</text><polygon points="562,959 566,962.5 562,966" fill="#000" /><rect x="392.25" y="1000.25" width="29.5" height="21.5" fill="#fff" stroke="#ff7f00" stroke-width="2.5" /><line x1="391" y1="1011.5" x2="423" y2="1011.5" stroke="#ff7f00" stroke-width="1" /><line x1="398" y1="1005.5" x2="416" y2="1005.5" stroke="#ff7f00" stroke-width="2" /><polygon points="396,1005.5 402,1002 402,1009" fill="#ff7f00" /><text x="407" y="1021" font-family='"Liberation Sans", sans-serif' font-size="8" fill="#ff7f00" font-weight="normal" text-anchor="middle" >✳</text><rect x="259.25" y="1027.25" width="21.5" height="12.5" fill="#fff" stroke="#0000ff" stroke-width="2.5" /><text x="270.0" y="1037.4" font-family='"Liberation Sans", sans-serif' font-size="10.8" fill="#000" font-weight="normal" text-anchor="middle" >100</text><polygon points="301.5,1019.5 321.5,1029.0 301.5,1038.5" fill="#ffffc8" stroke="#000" stroke-width="1" /><text x="308.98" y="1033.0" font-family='"Liberation Sans", sans-serif' font-size="11" fill="#000" font-weight="bold" text-anchor="middle" >÷</text><polygon points="323.5,1019.5 342.5,1029.0 323.5,1038.5" fill="#ffffc8" stroke="#000" stroke-width="1" /><text x="330.6" y="1033.0" font-family='"Liberation Sans", sans-serif' font-size="9" fill="#000" font-weight="bold" text-anchor="middle" >⌈⌉</text><polygon points="358.5,1032.5 378.5,1042.0 358.5,1051.5" fill="#ffffc8" stroke="#000" stroke-width="1" /><text x="365.98" y="1046.0" font-family='"Liberation Sans", sans-serif' font-size="12" fill="#000" font-weight="bold" text-anchor="middle" >=</text><rect x="428.75" y="1039.75" width="14.5" height="14.5" fill="#fff" stroke="#008000" stroke-width="1.5" /><circle cx="436" cy="1047" r="4.5" fill="#ff0000" stroke="#600000" stroke-width="1"/><rect x="189.0" y="1040.0" width="14" height="14" fill="#ffffc8" stroke="#0000ff" stroke-width="2" /><text x="196" y="1052" font-family='"Liberation Sans", sans-serif' font-size="12" fill="#0000ff" font-weight="bold" text-anchor="middle" >i</text><polygon points="228.5,1037.5 248.5,1047.5 228.5,1057.5" fill="#ffffc8" stroke="#000" stroke-width="1" /><text x="235.98" y="1051.5" font-family='"Liberation Sans", sans-serif' font-size="9" fill="#000" font-weight="bold" text-anchor="middle" >+1</text><pattern id="hp3" x="0" y="1003" width="4" height="5" patternUnits="userSpaceOnUse"><rect width="4" height="5" fill="#fff"/><rect x="1" y="0" width="1" height="1" fill="#000"/><rect x="3" y="0" width="1" height="1" fill="#000"/><rect x="0" y="1" width="1" height="1" fill="#000"/><rect x="2" y="1" width="1" height="1" fill="#000"/><rect x="2" y="2" width="1" height="1" fill="#000"/><rect x="3" y="2" width="1" height="1" fill="#000"/><rect x="0" y="3" width="1" height="1" fill="#000"/><rect x="1" y="3" width="1" height="1" fill="#000"/><rect x="1" y="4" width="1" height="1" fill="#000"/><rect x="3" y="4" width="1" height="1" fill="#000"/></pattern><rect x="847" y="1003" width="493" height="5" fill="url(#hp3)"/><pattern id="hp4" x="0" y="1160" width="4" height="5" patternUnits="userSpaceOnUse"><rect width="4" height="5" fill="#fff"/><rect x="1" y="0" width="1" height="1" fill="#000"/><rect x="3" y="0" width="1" height="1" fill="#000"/><rect x="0" y="1" width="1" height="1" fill="#000"/><rect x="2" y="1" width="1" height="1" fill="#000"/><rect x="2" y="2" width="1" height="1" fill="#000"/><rect x="3" y="2" width="1" height="1" fill="#000"/><rect x="0" y="3" width="1" height="1" fill="#000"/><rect x="1" y="3" width="1" height="1" fill="#000"/><rect x="1" y="4" width="1" height="1" fill="#000"/><rect x="3" y="4" width="1" height="1" fill="#000"/></pattern><rect x="847" y="1160" width="493" height="5" fill="url(#hp4)"/><pattern id="hp5" x="848" y="0" width="5" height="4" patternUnits="userSpaceOnUse"><rect width="5" height="4" fill="#fff"/><rect x="0" y="1" width="1" height="1" fill="#000"/><rect x="0" y="3" width="1" height="1" fill="#000"/><rect x="1" y="0" width="1" height="1" fill="#000"/><rect x="1" y="2" width="1" height="1" fill="#000"/><rect x="2" y="2" width="1" height="1" fill="#000"/><rect x="2" y="3" width="1" height="1" fill="#000"/><rect x="3" y="0" width="1" height="1" fill="#000"/><rect x="3" y="1" width="1" height="1" fill="#000"/><rect x="4" y="1" width="1" height="1" fill="#000"/><rect x="4" y="3" width="1" height="1" fill="#000"/></pattern><rect x="848" y="1003" width="5" height="162" fill="url(#hp5)"/><pattern id="hp6" x="1334" y="0" width="5" height="4" patternUnits="userSpaceOnUse"><rect width="5" height="4" fill="#fff"/><rect x="0" y="1" width="1" height="1" fill="#000"/><rect x="0" y="3" width="1" height="1" fill="#000"/><rect x="1" y="0" width="1" height="1" fill="#000"/><rect x="1" y="2" width="1" height="1" fill="#000"/><rect x="2" y="2" width="1" height="1" fill="#000"/><rect x="2" y="3" width="1" height="1" fill="#000"/><rect x="3" y="0" width="1" height="1" fill="#000"/><rect x="3" y="1" width="1" height="1" fill="#000"/><rect x="4" y="1" width="1" height="1" fill="#000"/><rect x="4" y="3" width="1" height="1" fill="#000"/></pattern><rect x="1334" y="1003" width="5" height="162" fill="url(#hp6)"/><rect x="847.5" y="1002.5" width="492" height="163" fill="none" stroke="#000" stroke-width="1" /><pattern id="hp7" x="0" y="1013" width="4" height="5" patternUnits="userSpaceOnUse"><rect width="4" height="5" fill="#fff"/><rect x="1" y="0" width="1" height="1" fill="#000"/><rect x="3" y="0" width="1" height="1" fill="#000"/><rect x="0" y="1" width="1" height="1" fill="#000"/><rect x="2" y="1" width="1" height="1" fill="#000"/><rect x="2" y="2" width="1" height="1" fill="#000"/><rect x="3" y="2" width="1" height="1" fill="#000"/><rect x="0" y="3" width="1" height="1" fill="#000"/><rect x="1" y="3" width="1" height="1" fill="#000"/><rect x="1" y="4" width="1" height="1" fill="#000"/><rect x="3" y="4" width="1" height="1" fill="#000"/></pattern><rect x="1248" y="1013" width="92" height="5" fill="url(#hp7)"/><pattern id="hp8" x="0" y="1122" width="4" height="5" patternUnits="userSpaceOnUse"><rect width="4" height="5" fill="#fff"/><rect x="1" y="0" width="1" height="1" fill="#000"/><rect x="3" y="0" width="1" height="1" fill="#000"/><rect x="0" y="1" width="1" height="1" fill="#000"/><rect x="2" y="1" width="1" height="1" fill="#000"/><rect x="2" y="2" width="1" height="1" fill="#000"/><rect x="3" y="2" width="1" height="1" fill="#000"/><rect x="0" y="3" width="1" height="1" fill="#000"/><rect x="1" y="3" width="1" height="1" fill="#000"/><rect x="1" y="4" width="1" height="1" fill="#000"/><rect x="3" y="4" width="1" height="1" fill="#000"/></pattern><rect x="1248" y="1122" width="92" height="5" fill="url(#hp8)"/><pattern id="hp9" x="1249" y="0" width="5" height="4" patternUnits="userSpaceOnUse"><rect width="5" height="4" fill="#fff"/><rect x="0" y="1" width="1" height="1" fill="#000"/><rect x="0" y="3" width="1" height="1" fill="#000"/><rect x="1" y="0" width="1" height="1" fill="#000"/><rect x="1" y="2" width="1" height="1" fill="#000"/><rect x="2" y="2" width="1" height="1" fill="#000"/><rect x="2" y="3" width="1" height="1" fill="#000"/><rect x="3" y="0" width="1" height="1" fill="#000"/><rect x="3" y="1" width="1" height="1" fill="#000"/><rect x="4" y="1" width="1" height="1" fill="#000"/><rect x="4" y="3" width="1" height="1" fill="#000"/></pattern><rect x="1249" y="1013" width="5" height="114" fill="url(#hp9)"/><pattern id="hp10" x="1334" y="0" width="5" height="4" patternUnits="userSpaceOnUse"><rect width="5" height="4" fill="#fff"/><rect x="0" y="1" width="1" height="1" fill="#000"/><rect x="0" y="3" width="1" height="1" fill="#000"/><rect x="1" y="0" width="1" height="1" fill="#000"/><rect x="1" y="2" width="1" height="1" fill="#000"/><rect x="2" y="2" width="1" height="1" fill="#000"/><rect x="2" y="3" width="1" height="1" fill="#000"/><rect x="3" y="0" width="1" height="1" fill="#000"/><rect x="3" y="1" width="1" height="1" fill="#000"/><rect x="4" y="1" width="1" height="1" fill="#000"/><rect x="4" y="3" width="1" height="1" fill="#000"/></pattern><rect x="1334" y="1013" width="5" height="114" fill="url(#hp10)"/><rect x="1248.5" y="1012.5" width="91" height="115" fill="none" stroke="#000" stroke-width="1" /><rect x="1100.5" y="1003.5" width="60" height="13" fill="#fff" stroke="#000" stroke-width="1" /><line x1="1108.5" y1="1003" x2="1108.5" y2="1017" stroke="#000" stroke-width="1" /><line x1="1152.5" y1="1003" x2="1152.5" y2="1017" stroke="#000" stroke-width="1" /><polygon points="1102,1010.0 1107,1006.0 1107,1014.0" fill="#000" /><polygon points="1159,1010.0 1154,1006.0 1154,1014.0" fill="#000" /><polygon points="1143,1007.0 1150,1007.0 1146.5,1011.0" fill="#000" /><text x="1112" y="1014" font-family='"Liberation Sans", sans-serif' font-size="10.8" fill="#000" font-weight="normal" text-anchor="start" >True</text><rect x="1295.5" y="1014.5" width="54" height="13" fill="#fff" stroke="#000" stroke-width="1" /><line x1="1303.5" y1="1014" x2="1303.5" y2="1028" stroke="#000" stroke-width="1" /><line x1="1341.5" y1="1014" x2="1341.5" y2="1028" stroke="#000" stroke-width="1" /><polygon points="1297,1021.0 1302,1017.0 1302,1025.0" fill="#000" /><polygon points="1348,1021.0 1343,1017.0 1343,1025.0" fill="#000" /><polygon points="1332,1018.0 1339,1018.0 1335.5,1022.0" fill="#000" /><text x="1307" y="1025" font-family='"Liberation Sans", sans-serif' font-size="10.8" fill="#000" font-weight="normal" text-anchor="start" >Tru</text><rect x="1298.5" y="1027.5" width="41" height="69" fill="#c6e0f8" stroke="#5080d0" stroke-width="1" /><line x1="1298" y1="1074.5" x2="1340" y2="1074.5" stroke="#5080d0" stroke-width="1" /><line x1="1298" y1="1088.5" x2="1340" y2="1088.5" stroke="#5080d0" stroke-width="1" /><polygon points="1301,1078 1305,1081.5 1301,1085" fill="#000" /><text x="1306" y="1086.5" font-family='"Liberation Sans", sans-serif' font-size="12.5" fill="#ff00ff" font-weight="normal" text-anchor="start" >Add</text><polygon points="1300,1040 1305,1043.5 1300,1047" fill="#808000" /><polygon points="1300,1049 1305,1052.5 1300,1056" fill="#208020" /><polyline points="718.0,1034.5 776.0,1034.5" fill="none" stroke="#ff7f00" stroke-width="2"  stroke-linejoin="miter"/><polyline points="714.0,1142.5 730.5,1142.5 730.5,1026.5 776.0,1026.5" fill="none" stroke="#ff7f00" stroke-width="2"  stroke-linejoin="miter"/><polyline points="652.0,1034.5 687.0,1034.5" fill="none" stroke="#0000ff" stroke-width="1"  stroke-linejoin="miter"/><polyline points="682.0,1053.5 687.0,1053.5" fill="none" stroke="#ff7f00" stroke-width="1"  stroke-linejoin="miter"/><polyline points="797.5,1014.0 797.5,1000.0" fill="none" stroke="#ff7f00" stroke-width="3" stroke-linejoin="miter"/><polyline points="797.5,1014.0 797.5,1000.0" fill="none" stroke="#fff" stroke-width="1" stroke-linejoin="miter"/><polyline points="808.0,1026.5 1059.0,1026.5" fill="none" stroke="#ff7f00" stroke-width="3" stroke-linejoin="miter"/><polyline points="808.0,1026.5 1059.0,1026.5" fill="none" stroke="#fff" stroke-width="1" stroke-linejoin="miter"/><polyline points="1090.0,1026.5 1107.0,1026.5" fill="none" stroke="#ff7f00" stroke-width="3" stroke-linejoin="miter"/><polyline points="1090.0,1026.5 1107.0,1026.5" fill="none" stroke="#fff" stroke-width="1" stroke-linejoin="miter"/><rect x="848" y="1023" width="10" height="8" fill="#ff8000" /><rect x="848.5" y="1023.5" width="9" height="7" fill="none" stroke="#000" stroke-width="1" /><rect x="1253" y="1003" width="11" height="9" fill="#ff8000" /><rect x="1253.5" y="1003.5" width="10" height="8" fill="none" stroke="#000" stroke-width="1" /><rect x="1253" y="1013" width="11" height="8" fill="#ff8000" /><rect x="1253.5" y="1013.5" width="10" height="7" fill="none" stroke="#000" stroke-width="1" /><polyline points="1259.5,1021.0 1259.5,1099.5 1263.0,1099.5" fill="none" stroke="#ff7f00" stroke-width="2"  stroke-linejoin="miter"/><polyline points="953.0,1123.5 961.0,1123.5" fill="none" stroke="#008080" stroke-width="1"  stroke-linejoin="miter"/><pattern id="wv2" x="0" y="0" width="4" height="2" patternUnits="userSpaceOnUse"><rect x="1" y="0" width="1" height="1" fill="#ff00ff"/><rect x="2" y="0" width="1" height="1" fill="#ff00ff"/><rect x="3" y="0" width="1" height="1" fill="#ff00ff"/><rect x="0" y="1" width="1" height="1" fill="#ff00ff"/><rect x="1" y="1" width="1" height="1" fill="#ff00ff"/><rect x="3" y="1" width="1" height="1" fill="#ff00ff"/></pattern><rect x="985" y="1122" width="5" height="2" fill="url(#wv2)" transform="translate(0,0)"/><rect x="986" y="1144" width="10" height="2" fill="url(#wv2)" transform="translate(0,0)"/><pattern id="wv3" x="0" y="0" width="2" height="4" patternUnits="userSpaceOnUse"><rect x="0" y="1" width="1" height="1" fill="#ff00ff"/><rect x="0" y="2" width="1" height="1" fill="#ff00ff"/><rect x="0" y="3" width="1" height="1" fill="#ff00ff"/><rect x="1" y="0" width="1" height="1" fill="#ff00ff"/><rect x="1" y="1" width="1" height="1" fill="#ff00ff"/><rect x="1" y="3" width="1" height="1" fill="#ff00ff"/></pattern><rect x="994" y="1134" width="2" height="12" fill="url(#wv3)"/><polyline points="1050.0,1127.5 1057.5,1127.5 1057.5,1094.5 1069.0,1094.5" fill="none" stroke="#008080" stroke-width="1"  stroke-linejoin="miter"/><polyline points="1100.0,1090.5 1104.5,1090.5 1104.5,1018.5 1107.0,1018.5" fill="none" stroke="#008080" stroke-width="1"  stroke-linejoin="miter"/><g transform="translate(1,0)"><rect x="1020" y="1124" width="2" height="34" fill="url(#wv3)"/></g><rect x="1022.5" y="1156" width="115.5" height="2" fill="url(#wv2)" transform="translate(0,0)"/><rect x="1136" y="1080" width="2" height="78" fill="url(#wv3)"/><rect x="1137" y="1080" width="188" height="2" fill="url(#wv2)" transform="translate(0,0)"/><g transform="translate(1,0)"><rect x="1060" y="1106" width="2" height="52" fill="url(#wv3)"/></g><rect x="1062" y="1106" width="8" height="2" fill="url(#wv2)" transform="translate(0,0)"/><rect x="1061" y="1166" width="4" height="13" fill="#ff00ff" /><line x1="1063" y1="1167" x2="1063" y2="1175" stroke="#fff" stroke-width="2" stroke-dasharray="2,2"/><rect x="1061" y="1175" width="263" height="4" fill="#ff00ff" /><line x1="1064" y1="1177" x2="1324" y2="1177" stroke="#fff" stroke-width="2" stroke-dasharray="2,2"/><polyline points="1118.5,1045.0 1118.5,1052.0" fill="none" stroke="#008000" stroke-width="1" stroke-dasharray="1,1" stroke-linejoin="miter"/><polyline points="1072.5,1119.0 1072.5,1124.0" fill="none" stroke="#008000" stroke-width="1" stroke-dasharray="1,1" stroke-linejoin="miter"/><polyline points="1082.5,1119.0 1082.5,1138.0" fill="none" stroke="#008000" stroke-width="1" stroke-dasharray="1,1" stroke-linejoin="miter"/><g transform="translate(0,1)"><rect x="1196" y="1098" width="15" height="2" fill="url(#wv2)"/></g><rect x="1198" y="1118" width="13" height="2" fill="url(#wv2)" transform="translate(0,0)"/><rect x="1197" y="1138" width="22" height="2" fill="url(#wv2)" transform="translate(0,0)"/><g transform="translate(1,0)"><rect x="1216" y="1125" width="2" height="15" fill="url(#wv3)"/></g><polyline points="1240.0,1110.5 1248.0,1110.5" fill="none" stroke="#008000" stroke-width="1" stroke-dasharray="1,1" stroke-linejoin="miter"/><g transform="translate(0,1)"><rect x="798" y="1080" width="12" height="2" fill="url(#wv2)"/></g><rect x="798" y="1100" width="12" height="2" fill="url(#wv2)" transform="translate(0,0)"/><polyline points="840.0,1095.5 846.0,1095.5" fill="none" stroke="#008000" stroke-width="1" stroke-dasharray="1,1" stroke-linejoin="miter"/><rect x="1294" y="1097" width="30" height="5" fill="#000080" /><line x1="1295" y1="1099.5" x2="1324" y2="1099.5" stroke="#fff" stroke-width="1" stroke-dasharray="3,2"/><rect x="1058" y="1157" width="9" height="11" fill="#ff00ff" /><rect x="1058.5" y="1157.5" width="8" height="10" fill="none" stroke="#000" stroke-width="1" /><rect x="1249" y="1076" width="9" height="10" fill="#ff00ff" /><rect x="1249.5" y="1076.5" width="8" height="9" fill="none" stroke="#000" stroke-width="1" /><rect x="686.5" y="1030.5" width="31" height="30" fill="#fff" stroke="#000" stroke-width="1" /><rect x="687" y="1031" width="30" height="11" fill="#ffffc8" /><line x1="686" y1="1041.5" x2="718" y2="1041.5" stroke="#000" stroke-width="1" /><polygon points="690,1036 695,1033 695,1039" fill="#fff" stroke="#000" stroke-width="0.8" /><polyline points="698,1036 702,1033 706,1039 711,1036" fill="none" stroke="#000" stroke-width="1" /><polygon points="689,1059 715,1059 715,1044" fill="#606060" /><rect x="671.0" y="1047.0" width="10" height="14" fill="#fff" stroke="#ff7f00" stroke-width="2" /><text x="676.0" y="1057.9" font-family='"Liberation Sans", sans-serif' font-size="10.8" fill="#000" font-weight="normal" text-anchor="middle" >0</text><rect x="652.75" y="1066.75" width="99.5" height="14.5" fill="#fff" stroke="#8a008a" stroke-width="1.5" /><rect x="650.75" y="1064.75" width="99.5" height="14.5" fill="#fff" stroke="#8a008a" stroke-width="1.5" /><text x="652" y="1076.5" font-family='"Liberation Sans", sans-serif' font-size="10.3" fill="#000" font-weight="normal" text-anchor="start" >Ramp by Samples</text><polygon points="739,1069 746,1069 742.5,1073" fill="#8a008a" /><rect x="609.25" y="1067.25" width="27.5" height="13.5" fill="#fff" stroke="#0000ff" stroke-width="2.5" /><text x="623.0" y="1077.9" font-family='"Liberation Sans", sans-serif' font-size="10.8" fill="#000" font-weight="normal" text-anchor="middle" >1000</text><rect x="776.5" y="1014.5" width="31" height="24" fill="#ffffc8" stroke="#000" stroke-width="1" /><rect x="779" y="1017" width="6" height="5" fill="#fff" stroke="#000" stroke-width="0.8" /><rect x="779" y="1024" width="6" height="5" fill="#fff" stroke="#000" stroke-width="0.8" /><rect x="779" y="1031" width="6" height="5" fill="#fff" stroke="#000" stroke-width="0.8" /><path d="M795.5,1016V1036M795,1016.5H805M800.5,1016V1036M795,1026.5H805M805.5,1016V1036M795,1036.5H805" stroke="#000" stroke-width="1" fill="none"/><rect x="857.5" y="1034.5" width="96" height="104" fill="#c6e0f8" stroke="#4a80d0" stroke-width="1" /><rect x="889" y="1051" width="32" height="32" rx="4" fill="#a8a8a8" stroke="#303030" stroke-width="1.2"/><line x1="891" y1="1052.5" x2="919" y2="1052.5" stroke="#2040c0" stroke-width="2" /><path d="M894,1056 H916 Q918,1056 918,1059 V1073 Q918,1076 915,1076 H903 L899,1081 L899,1076 H895 Q892,1076 892,1073 V1059 Q892,1056 894,1056 Z" fill="#fff" stroke="#000" stroke-width="1"/><path d="M899,1059 H907 L910,1062 V1072 H899 Z" fill="#ffffc0" stroke="#000" stroke-width="0.9"/><text x="903" y="1113" font-family='"Liberation Sans", sans-serif' font-size="12" fill="#000" font-weight="normal" text-anchor="middle" >File Dialog</text><line x1="857" y1="1116.5" x2="954" y2="1116.5" stroke="#4a80d0" stroke-width="1" /><line x1="857" y1="1129.5" x2="954" y2="1129.5" stroke="#4a80d0" stroke-width="1" /><rect x="858" y="1117" width="95" height="12" fill="#f4f8ff" /><text x="903" y="1127.5" font-family='"Liberation Sans", sans-serif' font-size="12" fill="#008080" font-weight="normal" text-anchor="middle" >selected path</text><polygon points="946,1120 950,1123 946,1126" fill="#000" /><polyline points="899,1131 903,1134 907,1131" fill="none" stroke="#a0b0c0" stroke-width="1" /><polygon points="860,1037.0 865,1040.0 860,1043.0" fill="#008080" /><polygon points="860,1046.1 865,1049.1 860,1052.1" fill="#ff00ff" /><polygon points="860,1055.2 865,1058.2 860,1061.2" fill="#808000" /><polygon points="860,1064.3 865,1067.3 860,1070.3" fill="#ff00ff" /><polygon points="860,1073.4 865,1076.4 860,1079.4" fill="#ff00ff" /><polygon points="860,1082.5 865,1085.5 860,1088.5" fill="#ff00ff" /><polygon points="860,1091.6 865,1094.6 860,1097.6" fill="#ff00ff" /><polygon points="946,1055.5 951,1058.5 946,1061.5" fill="#00a000" /><polygon points="946,1073.5 951,1076.5 946,1079.5" fill="#00a000" /><polygon points="946,1091.5 951,1094.5 946,1097.5" fill="#808000" /><rect x="961.5" y="1118.5" width="24" height="9" fill="#ffffc8" stroke="#000" stroke-width="1" /><text x="973" y="1126" font-family='"Liberation Sans", sans-serif' font-size="6.5" fill="#000" font-weight="normal" text-anchor="middle" >⁰ₒ abc</text><rect x="961.25" y="1138.25" width="24.5" height="14.5" fill="#fff" stroke="#ff00ff" stroke-width="2.5" /><text x="973.5" y="1149.4" font-family='"Liberation Sans", sans-serif' font-size="10.8" fill="#000" font-weight="normal" text-anchor="middle" >.txt</text><rect x="989.5" y="1120.5" width="31" height="14" fill="#ffffc8" stroke="#000" stroke-width="1" /><rect x="992" y="1122" width="8" height="4" fill="#fff" stroke="#000" stroke-width="0.6" /><rect x="992" y="1128" width="8" height="4" fill="#fff" stroke="#000" stroke-width="0.6" /><rect x="1004" y="1122" width="14" height="10" fill="#e0e0e0" stroke="#000" stroke-width="0.6" /><rect x="1026.5" y="1122.5" width="24" height="9" fill="#ffffc8" stroke="#000" stroke-width="1" /><text x="1038" y="1130" font-family='"Liberation Sans", sans-serif' font-size="6.5" fill="#000" font-weight="normal" text-anchor="middle" >abc ⁰ₒ</text><rect x="1060.5" y="1015.5" width="29" height="22" fill="#ffffc8" stroke="#000" stroke-width="1" /><path d="M1063.5,1017V1026M1063,1017.5H1072M1067.5,1017V1026M1063,1021.5H1072M1072.5,1017V1026M1063,1026.5H1072" stroke="#000" stroke-width="1" fill="none"/><path d="M1075.5,1019V1026M1075,1019.5H1086M1081.5,1019V1026M1075,1023.5H1086M1086.5,1019V1026M1075,1026.5H1086" stroke="#000" stroke-width="1" fill="none"/><text x="1075" y="1036" font-family='"Liberation Sans", sans-serif' font-size="7" fill="#000" font-weight="bold" text-anchor="middle" >×ᵢⱼ ×ᵢⱼ</text><rect x="1107.5" y="1017.5" width="31" height="28" fill="#fff" stroke="#000" stroke-width="1" /><path d="M1113.5,1029V1043M1113,1029.5H1137M1121.5,1029V1043M1113,1034.5H1137M1129.5,1029V1043M1113,1038.5H1137M1137.5,1029V1043M1113,1043.5H1137" stroke="#000" stroke-width="1" fill="none"/><polyline points="1121,1029 1131,1019" fill="none" stroke="#000" stroke-width="3" /><polyline points="1121,1029 1131,1019" fill="none" stroke="#fff" stroke-width="1.5" /><rect x="1069.5" y="1087.5" width="31" height="28" fill="#fff" stroke="#000" stroke-width="1" /><path d="M1075.5,1099V1113M1075,1099.5H1099M1083.5,1099V1113M1075,1104.5H1099M1091.5,1099V1113M1075,1108.5H1099M1099.5,1099V1113M1075,1113.5H1099" stroke="#000" stroke-width="1" fill="none"/><polyline points="1083,1099 1093,1089" fill="none" stroke="#000" stroke-width="3" /><polyline points="1083,1099 1093,1089" fill="none" stroke="#fff" stroke-width="1.5" /><rect x="1111.75" y="1052.75" width="13.5" height="10.5" fill="#fff" stroke="#008000" stroke-width="1.5" /><rect x="1113" y="1054" width="11" height="8" fill="#008000" /><text x="1118.5" y="1061" font-family='"Liberation Sans", sans-serif' font-size="9" fill="#fff" font-weight="bold" text-anchor="middle" >F</text><rect x="1111.75" y="1067.75" width="13.5" height="10.5" fill="#fff" stroke="#008000" stroke-width="1.5" /><rect x="1113" y="1069" width="11" height="8" fill="#008000" /><text x="1118.5" y="1076" font-family='"Liberation Sans", sans-serif' font-size="9" fill="#fff" font-weight="bold" text-anchor="middle" >T</text><rect x="1065.75" y="1124.75" width="13.5" height="10.5" fill="#fff" stroke="#008000" stroke-width="1.5" /><rect x="1067" y="1126" width="11" height="8" fill="#008000" /><text x="1072.5" y="1133" font-family='"Liberation Sans", sans-serif' font-size="9" fill="#fff" font-weight="bold" text-anchor="middle" >T</text><rect x="1075.75" y="1138.75" width="13.5" height="10.5" fill="#fff" stroke="#008000" stroke-width="1.5" /><rect x="1077" y="1140" width="11" height="8" fill="#008000" /><text x="1082.5" y="1147" font-family='"Liberation Sans", sans-serif' font-size="9" fill="#fff" font-weight="bold" text-anchor="middle" >T</text><rect x="1147.25" y="1093.25" width="47.5" height="13.5" fill="#fff" stroke="#ff00ff" stroke-width="2.5" /><text x="1171.0" y="1103.9" font-family='"Liberation Sans", sans-serif' font-size="10.8" fill="#000" font-weight="normal" text-anchor="middle" >Print File</text><rect x="1169.25" y="1113.25" width="27.5" height="12.5" fill="#fff" stroke="#ff00ff" stroke-width="2.5" /><text x="1183.0" y="1123.4" font-family='"Liberation Sans", sans-serif' font-size="10.8" fill="#000" font-weight="normal" text-anchor="middle" >Print</text><rect x="1158.25" y="1132.25" width="38.5" height="13.5" fill="#fff" stroke="#ff00ff" stroke-width="2.5" /><text x="1177.5" y="1142.9" font-family='"Liberation Sans", sans-serif' font-size="10.8" fill="#000" font-weight="normal" text-anchor="middle" >Cancel</text><rect x="1210.5" y="1096.5" width="30" height="29" fill="#ffffc8" stroke="#000" stroke-width="1" /><rect x="1213" y="1099" width="11" height="14" fill="#000" /><rect x="1215" y="1101" width="7" height="10" fill="#fff" /><line x1="1227" y1="1102.5" x2="1237" y2="1102.5" stroke="#000" stroke-width="1" /><line x1="1227" y1="1106.5" x2="1237" y2="1106.5" stroke="#000" stroke-width="1" /><line x1="1227" y1="1110.5" x2="1237" y2="1110.5" stroke="#000" stroke-width="1" /><rect x="1213.5" y="1115.5" width="10" height="8" fill="#fff" stroke="#000" stroke-width="1" /><rect x="1226.5" y="1115.5" width="10" height="8" fill="#fff" stroke="#000" stroke-width="1" /><text x="1218.5" y="1122.5" font-family='"Liberation Sans", sans-serif' font-size="7" fill="#000" font-weight="bold" text-anchor="middle" >T</text><text x="1231.5" y="1122.5" font-family='"Liberation Sans", sans-serif' font-size="7" fill="#000" font-weight="bold" text-anchor="middle" >F</text><rect x="809.5" y="1080.5" width="30" height="29" fill="#ffffc8" stroke="#000" stroke-width="1" /><rect x="812" y="1083" width="11" height="14" fill="#000" /><rect x="814" y="1085" width="7" height="10" fill="#fff" /><line x1="826" y1="1086.5" x2="836" y2="1086.5" stroke="#000" stroke-width="1" /><line x1="826" y1="1090.5" x2="836" y2="1090.5" stroke="#000" stroke-width="1" /><line x1="826" y1="1094.5" x2="836" y2="1094.5" stroke="#000" stroke-width="1" /><rect x="812.5" y="1099.5" width="10" height="8" fill="#fff" stroke="#000" stroke-width="1" /><rect x="825.5" y="1099.5" width="10" height="8" fill="#fff" stroke="#000" stroke-width="1" /><text x="817.5" y="1106.5" font-family='"Liberation Sans", sans-serif' font-size="7" fill="#000" font-weight="bold" text-anchor="middle" >T</text><text x="830.5" y="1106.5" font-family='"Liberation Sans", sans-serif' font-size="7" fill="#000" font-weight="bold" text-anchor="middle" >F</text><rect x="1248.5" y="1105.5" width="8" height="11" fill="#fff" stroke="#008000" stroke-width="1" /><text x="1252.5" y="1115" font-family='"Liberation Sans", sans-serif' font-size="9" fill="#008000" font-weight="normal" text-anchor="middle" >?</text><rect x="846.5" y="1090.5" width="10" height="10" fill="#fff" stroke="#008000" stroke-width="1" /><text x="851.5" y="1099.5" font-family='"Liberation Sans", sans-serif' font-size="9" fill="#008000" font-weight="normal" text-anchor="middle" >?</text><rect x="767.25" y="1075.25" width="29.5" height="14.5" fill="#fff" stroke="#ff00ff" stroke-width="2.5" /><text x="782.0" y="1086.4" font-family='"Liberation Sans", sans-serif' font-size="10.8" fill="#000" font-weight="normal" text-anchor="middle" >Save</text><rect x="744.25" y="1095.25" width="53.5" height="13.5" fill="#fff" stroke="#ff00ff" stroke-width="2.5" /><text x="771.0" y="1105.9" font-family='"Liberation Sans", sans-serif' font-size="10.8" fill="#000" font-weight="normal" text-anchor="middle" >Save File?</text><polygon points="1266,1092 1290,1092 1294,1099.5 1290,1107 1266,1107 1262,1099.5" fill="#d8e8ff" stroke="#4070d0" stroke-width="1.2" /><rect x="1267" y="1094" width="22" height="11" fill="#ffffc0" /><text x="1276" y="1103" font-family='"Liberation Sans", sans-serif' font-size="7" fill="#ff6000" font-weight="bold" text-anchor="middle" >[dbl]</text><text x="1285" y="1103" font-family='"Liberation Sans", sans-serif' font-size="8" fill="#000080" font-weight="normal" text-anchor="middle" >⌘</text><rect x="386.5" y="1110.5" width="170" height="13" fill="#ffffe0" stroke="#000" stroke-width="1" /><text x="388.5" y="1121" font-family='"Liberation Sans", sans-serif' font-size="10.4" fill="#000" font-weight="normal" text-anchor="start" >Create Marks of TTL Signals Timing</text><rect x="386" y="1125" width="329" height="155" fill="#808080" /><rect x="386.75" y="1125.75" width="327.5" height="153.5" fill="none" stroke="#000" stroke-width="1.5" /><rect x="391" y="1131" width="318" height="143" fill="#fff" /><rect x="391.5" y="1131.5" width="317" height="142" fill="none" stroke="#000" stroke-width="1" /><clipPath id="fclip"><rect x="391" y="1131" width="318" height="142"/></clipPath><g clip-path="url(#fclip)"><text x="472" y="1145.5" font-family='"Liberation Sans", sans-serif' font-size="10.8" fill="#000" font-weight="normal" text-anchor="start" >int16 index;</text><text x="472" y="1158.35" font-family='"Liberation Sans", sans-serif' font-size="10.8" fill="#000" font-weight="normal" text-anchor="start" >int16 on;</text><text x="472" y="1171.2" font-family='"Liberation Sans", sans-serif' font-size="10.8" fill="#000" font-weight="normal" text-anchor="start" >int16 off;</text><text x="472" y="1184.05" font-family='"Liberation Sans", sans-serif' font-size="10.8" fill="#000" font-weight="normal" text-anchor="start" >index = Delay1;</text><text x="472" y="1196.9" font-family='"Liberation Sans", sans-serif' font-size="10.8" fill="#000" font-weight="normal" text-anchor="start" >Array[index] = 1;</text><text x="472" y="1209.75" font-family='"Liberation Sans", sans-serif' font-size="10.8" fill="#000" font-weight="normal" text-anchor="start" >index = Delay2;</text><text x="472" y="1222.6" font-family='"Liberation Sans", sans-serif' font-size="10.8" fill="#000" font-weight="normal" text-anchor="start" >Array[index] = 1.1;</text><text x="472" y="1235.45" font-family='"Liberation Sans", sans-serif' font-size="10.8" fill="#000" font-weight="normal" text-anchor="start" >index = (Delay1+High1);</text><text x="472" y="1248.3" font-family='"Liberation Sans", sans-serif' font-size="10.8" fill="#000" font-weight="normal" text-anchor="start" >Array[index] = 1;</text><text x="472" y="1261.15" font-family='"Liberation Sans", sans-serif' font-size="10.8" fill="#000" font-weight="normal" text-anchor="start" >index = (Delay2+High2);</text><text x="472" y="1274.0" font-family='"Liberation Sans", sans-serif' font-size="10.8" fill="#000" font-weight="normal" text-anchor="start" >Array[index] = 1.1;</text></g><polyline points="377,1135 377.0,1284.5 468.0,1284.5" fill="none" stroke="#ff7f00" stroke-width="2"  stroke-linejoin="miter"/><polyline points="377.0,1136.5 386.0,1136.5" fill="none" stroke="#ff7f00" stroke-width="2"  stroke-linejoin="miter"/><polyline points="328.0,1146.5 386.0,1146.5" fill="none" stroke="#ff7f00" stroke-width="1"  stroke-linejoin="miter"/><polyline points="337.5,1174.5 350.5,1174.5 350.5,1176.5 386.0,1176.5" fill="none" stroke="#ff7f00" stroke-width="1"  stroke-linejoin="miter"/><polyline points="319.0,1203.5 345.5,1203.5 345.5,1196.5 386.0,1196.5" fill="none" stroke="#ff7f00" stroke-width="1"  stroke-linejoin="miter"/><polyline points="329.0,1232.5 347.5,1232.5 347.5,1216.5 386.0,1216.5" fill="none" stroke="#ff7f00" stroke-width="1"  stroke-linejoin="miter"/><polyline points="341.0,1262.5 351.5,1262.5 351.5,1236.5 386.0,1236.5" fill="none" stroke="#0000ff" stroke-width="1"  stroke-linejoin="miter"/><polyline points="246.0,1282.5 355.5,1282.5 355.5,1256.5 386.0,1256.5" fill="none" stroke="#0000ff" stroke-width="2"  stroke-linejoin="miter"/><rect x="386.75" y="1128.75" width="30.5" height="14.5" fill="#fff" stroke="#ff7f00" stroke-width="1.5" /><text x="388" y="1140" font-family='"Liberation Sans", sans-serif' font-size="10.8" fill="#ff7f00" font-weight="normal" text-anchor="start" >Array</text><rect x="386.75" y="1148.75" width="35.5" height="14.5" fill="#fff" stroke="#ff7f00" stroke-width="1.5" /><text x="388" y="1160" font-family='"Liberation Sans", sans-serif' font-size="10.8" fill="#ff7f00" font-weight="normal" text-anchor="start" >Delay1</text><rect x="386.75" y="1168.75" width="35.5" height="14.5" fill="#fff" stroke="#ff7f00" stroke-width="1.5" /><text x="388" y="1180" font-family='"Liberation Sans", sans-serif' font-size="10.8" fill="#ff7f00" font-weight="normal" text-anchor="start" >Delay2</text><rect x="386.75" y="1188.75" width="30.5" height="14.5" fill="#fff" stroke="#ff7f00" stroke-width="1.5" /><text x="388" y="1200" font-family='"Liberation Sans", sans-serif' font-size="10.8" fill="#ff7f00" font-weight="normal" text-anchor="start" >High1</text><rect x="386.75" y="1208.75" width="30.5" height="14.5" fill="#fff" stroke="#ff7f00" stroke-width="1.5" /><text x="388" y="1220" font-family='"Liberation Sans", sans-serif' font-size="10.8" fill="#ff7f00" font-weight="normal" text-anchor="start" >High2</text><rect x="386.75" y="1228.75" width="69.5" height="14.5" fill="#fff" stroke="#0000ff" stroke-width="1.5" /><text x="388" y="1240" font-family='"Liberation Sans", sans-serif' font-size="10.8" fill="#0000ff" font-weight="normal" text-anchor="start" >StimulusDelay</text><rect x="386.75" y="1248.75" width="83.5" height="14.5" fill="#fff" stroke="#0000ff" stroke-width="1.5" /><text x="388" y="1260" font-family='"Liberation Sans", sans-serif' font-size="10.8" fill="#0000ff" font-weight="normal" text-anchor="start" >StimulusDuration</text><rect x="386" y="1145" width="7" height="3" fill="#606060" /><rect x="386" y="1165" width="7" height="3" fill="#606060" /><rect x="386" y="1185" width="7" height="3" fill="#606060" /><rect x="386" y="1205" width="7" height="3" fill="#606060" /><rect x="386" y="1225" width="7" height="3" fill="#606060" /><rect x="386" y="1245" width="7" height="3" fill="#606060" /><rect x="684.0" y="1135.0" width="30" height="15" fill="#fff" stroke="#ff7f00" stroke-width="2" /><text x="685" y="1147" font-family='"Liberation Sans", sans-serif' font-size="10.8" fill="#ff7f00" font-weight="normal" text-anchor="start" >Array</text><rect x="249.25" y="1139.25" width="77.5" height="14.5" fill="#fff" stroke="#ff7f00" stroke-width="2.5" /><polygon points="253,1146 258,1141.5 263,1146 261.5,1146 261.5,1150.5 259,1150.5 259,1148 257,1148 257,1150.5 254.5,1150.5 254.5,1146" fill="#000" /><text x="262.5" y="1150.5" font-family='"Liberation Sans", sans-serif' font-size="10.2" fill="#ff7f00" font-weight="normal" text-anchor="start" >Initial Delay</text><polygon points="320,1142.5 324,1146.5 320,1150.5" fill="#ff7f00" /><rect x="250.25" y="1167.25" width="86.5" height="14.5" fill="#fff" stroke="#ff7f00" stroke-width="2.5" /><polygon points="254,1174 259,1169.5 264,1174 262.5,1174 262.5,1178.5 260,1178.5 260,1176 258,1176 258,1178.5 255.5,1178.5 255.5,1174" fill="#000" /><text x="263.5" y="1178.5" font-family='"Liberation Sans", sans-serif' font-size="10.2" fill="#ff7f00" font-weight="normal" text-anchor="start" >Initial Delay 2</text><polygon points="330,1170.5 334,1174.5 330,1178.5" fill="#ff7f00" /><rect x="250.25" y="1196.25" width="67.5" height="13.5" fill="#fff" stroke="#ff7f00" stroke-width="2.5" /><polygon points="254,1203 259,1198.5 264,1203 262.5,1203 262.5,1207.5 260,1207.5 260,1205 258,1205 258,1207.5 255.5,1207.5 255.5,1203" fill="#000" /><text x="263.5" y="1206.5" font-family='"Liberation Sans", sans-serif' font-size="10.2" fill="#ff7f00" font-weight="normal" text-anchor="start" >High Time</text><polygon points="311,1199.0 315,1203.0 311,1207.0" fill="#ff7f00" /><rect x="251.25" y="1226.25" width="76.5" height="13.5" fill="#fff" stroke="#ff7f00" stroke-width="2.5" /><polygon points="255,1233 260,1228.5 265,1233 263.5,1233 263.5,1237.5 261,1237.5 261,1235 259,1235 259,1237.5 256.5,1237.5 256.5,1233" fill="#000" /><text x="264.5" y="1236.5" font-family='"Liberation Sans", sans-serif' font-size="10.2" fill="#ff7f00" font-weight="normal" text-anchor="start" >High Time 2</text><polygon points="321,1229.0 325,1233.0 321,1237.0" fill="#ff7f00" /><rect x="247.25" y="1255.25" width="93.5" height="13.5" fill="#fff" stroke="#0000ff" stroke-width="2.5" /><polygon points="251,1262 256,1257.5 261,1262 259.5,1262 259.5,1266.5 257,1266.5 257,1264 255,1264 255,1266.5 252.5,1266.5 252.5,1262" fill="#000" /><text x="260.5" y="1265.5" font-family='"Liberation Sans", sans-serif' font-size="10.2" fill="#0000ff" font-weight="normal" text-anchor="start" >Stimulus  Delay</text><polygon points="334,1258.0 338,1262.0 334,1266.0" fill="#0000ff" /><pattern id="hp11" x="0" y="1172" width="4" height="5" patternUnits="userSpaceOnUse"><rect width="4" height="5" fill="#fff"/><rect x="1" y="0" width="1" height="1" fill="#000"/><rect x="3" y="0" width="1" height="1" fill="#000"/><rect x="0" y="1" width="1" height="1" fill="#000"/><rect x="2" y="1" width="1" height="1" fill="#000"/><rect x="2" y="2" width="1" height="1" fill="#000"/><rect x="3" y="2" width="1" height="1" fill="#000"/><rect x="0" y="3" width="1" height="1" fill="#000"/><rect x="1" y="3" width="1" height="1" fill="#000"/><rect x="1" y="4" width="1" height="1" fill="#000"/><rect x="3" y="4" width="1" height="1" fill="#000"/></pattern><rect x="-10" y="1172" width="187" height="5" fill="url(#hp11)"/><pattern id="hp12" x="0" y="1294" width="4" height="5" patternUnits="userSpaceOnUse"><rect width="4" height="5" fill="#fff"/><rect x="1" y="0" width="1" height="1" fill="#000"/><rect x="3" y="0" width="1" height="1" fill="#000"/><rect x="0" y="1" width="1" height="1" fill="#000"/><rect x="2" y="1" width="1" height="1" fill="#000"/><rect x="2" y="2" width="1" height="1" fill="#000"/><rect x="3" y="2" width="1" height="1" fill="#000"/><rect x="0" y="3" width="1" height="1" fill="#000"/><rect x="1" y="3" width="1" height="1" fill="#000"/><rect x="1" y="4" width="1" height="1" fill="#000"/><rect x="3" y="4" width="1" height="1" fill="#000"/></pattern><rect x="-10" y="1294" width="187" height="5" fill="url(#hp12)"/><pattern id="hp13" x="-9" y="0" width="5" height="4" patternUnits="userSpaceOnUse"><rect width="5" height="4" fill="#fff"/><rect x="0" y="1" width="1" height="1" fill="#000"/><rect x="0" y="3" width="1" height="1" fill="#000"/><rect x="1" y="0" width="1" height="1" fill="#000"/><rect x="1" y="2" width="1" height="1" fill="#000"/><rect x="2" y="2" width="1" height="1" fill="#000"/><rect x="2" y="3" width="1" height="1" fill="#000"/><rect x="3" y="0" width="1" height="1" fill="#000"/><rect x="3" y="1" width="1" height="1" fill="#000"/><rect x="4" y="1" width="1" height="1" fill="#000"/><rect x="4" y="3" width="1" height="1" fill="#000"/></pattern><rect x="-9" y="1172" width="5" height="127" fill="url(#hp13)"/><pattern id="hp14" x="171" y="0" width="5" height="4" patternUnits="userSpaceOnUse"><rect width="5" height="4" fill="#fff"/><rect x="0" y="1" width="1" height="1" fill="#000"/><rect x="0" y="3" width="1" height="1" fill="#000"/><rect x="1" y="0" width="1" height="1" fill="#000"/><rect x="1" y="2" width="1" height="1" fill="#000"/><rect x="2" y="2" width="1" height="1" fill="#000"/><rect x="2" y="3" width="1" height="1" fill="#000"/><rect x="3" y="0" width="1" height="1" fill="#000"/><rect x="3" y="1" width="1" height="1" fill="#000"/><rect x="4" y="1" width="1" height="1" fill="#000"/><rect x="4" y="3" width="1" height="1" fill="#000"/></pattern><rect x="171" y="1172" width="5" height="127" fill="url(#hp14)"/><rect x="-9.5" y="1171.5" width="186" height="128" fill="none" stroke="#000" stroke-width="1" /><rect x="1.0" y="1233.0" width="130" height="15" fill="#fff" stroke="#0000ff" stroke-width="2" /><text x="1" y="1244.5" font-family='"Liberation Sans", sans-serif' font-size="10.2" fill="#000" font-weight="normal" text-anchor="start" >OK message + warnings</text><polygon points="122,1238 129,1238 125.5,1242" fill="#0000ff" /><polyline points="79.5,1249.0 79.5,1286.0" fill="none" stroke="#0000ff" stroke-width="1"  stroke-linejoin="miter"/><path d="M-5,1256 Q8,1256 8,1268 V1286" fill="none" stroke="#808080" stroke-width="4"/><rect x="3" y="1275" width="9" height="8" fill="#800080" /><rect x="3.5" y="1275.5" width="8" height="7" fill="none" stroke="#000" stroke-width="1" /><rect x="12" y="1278" width="10" height="2" fill="url(#wv2)" transform="translate(0,0)"/><rect x="21" y="1277" width="32" height="9" fill="#a00000" /><text x="37" y="1285" font-family='"Liberation Sans", sans-serif' font-size="8" fill="#fff" font-weight="bold" text-anchor="middle" >DAQmx</text><rect x="100.5" y="1275.5" width="32" height="14" fill="#fff" stroke="#000" stroke-width="1" /><rect x="102" y="1277" width="29" height="12" rx="5" fill="none" stroke="#000" stroke-width="1"/><text x="116.5" y="1286" font-family='"Liberation Sans", sans-serif' font-size="8.5" fill="#000" font-weight="normal" text-anchor="middle" >Error</text><rect x="774" y="1176" width="97" height="2" fill="url(#wv2)" transform="translate(0,0)"/><g transform="translate(0,1)"><rect x="774" y="1190" width="97" height="2" fill="url(#wv2)"/></g><rect x="897" y="1176" width="12" height="2" fill="url(#wv2)" transform="translate(0,0)"/><rect x="897" y="1184" width="12" height="2" fill="url(#wv2)" transform="translate(0,0)"/><g transform="translate(0,1)"><rect x="897" y="1190" width="12" height="2" fill="url(#wv2)"/></g><g transform="translate(0,1)"><rect x="899" y="1198" width="10" height="2" fill="url(#wv2)"/></g><g transform="translate(0,1)"><rect x="940" y="1186" width="10" height="2" fill="url(#wv2)"/></g><rect x="948" y="1187" width="2" height="69" fill="url(#wv3)"/><rect x="949" y="1254" width="376" height="2" fill="url(#wv2)" transform="translate(0,0)"/><g transform="translate(0,1)"><rect x="834" y="1214" width="76" height="2" fill="url(#wv2)"/></g><rect x="899" y="1240" width="6" height="2" fill="url(#wv2)" transform="translate(0,0)"/><g transform="translate(1,0)"><rect x="902" y="1223" width="2" height="19" fill="url(#wv3)"/></g><g transform="translate(0,1)"><rect x="904" y="1222" width="6" height="2" fill="url(#wv2)"/></g><rect x="940" y="1224" width="5" height="2" fill="url(#wv2)" transform="translate(0,0)"/><g transform="translate(1,0)"><rect x="942" y="1224" width="2" height="40" fill="url(#wv3)"/></g><rect x="944" y="1262" width="381" height="2" fill="url(#wv2)" transform="translate(0,0)"/><rect x="849" y="1264" width="61" height="2" fill="url(#wv2)" transform="translate(0,0)"/><g transform="translate(0,1)"><rect x="940" y="1270" width="295" height="2" fill="url(#wv2)"/></g><g transform="translate(1,0)"><rect x="1232" y="1269" width="2" height="4" fill="url(#wv3)"/></g><g transform="translate(0,1)"><rect x="1234" y="1268" width="91" height="2" fill="url(#wv2)"/></g><rect x="926" y="1278" width="399" height="2" fill="url(#wv2)" transform="translate(0,0)"/><polyline points="834.0,1240.5 867.0,1240.5" fill="none" stroke="#0000ff" stroke-width="1"  stroke-linejoin="miter"/><polyline points="738.0,1284.5 867.0,1284.5" fill="none" stroke="#0000ff" stroke-width="2"  stroke-linejoin="miter"/><g transform="translate(1,0)"><rect x="912" y="1236" width="2" height="6" fill="url(#wv3)"/></g><rect x="742.5" y="1170.5" width="31" height="31" fill="#ffffc8" stroke="#000" stroke-width="1" /><text x="746" y="1181" font-family='"Liberation Sans", sans-serif' font-size="7" fill="#000" font-weight="bold" text-anchor="start" >▸:</text><text x="746" y="1191" font-family='"Liberation Sans", sans-serif' font-size="9" fill="#000" font-weight="bold" text-anchor="start" >#</text><text x="746" y="1200" font-family='"Liberation Sans", sans-serif' font-size="8" fill="#000" font-weight="bold" text-anchor="start" >?ₛ</text><rect x="755.5" y="1172.5" width="16" height="9" fill="#fff" stroke="#000" stroke-width="1" /><text x="763.5" y="1180.5" font-family='"Liberation Sans", sans-serif' font-size="6.5" fill="#000" font-weight="normal" text-anchor="middle" >1/89</text><rect x="755.5" y="1191.5" width="16" height="8" fill="#fff" stroke="#000" stroke-width="1" /><text x="763.5" y="1198.5" font-family='"Liberation Sans", sans-serif' font-size="6.5" fill="#000" font-weight="normal" text-anchor="middle" >10:21</text><rect x="871.5" y="1178.5" width="24" height="13" fill="#fff" stroke="#ff00ff" stroke-width="3" /><rect x="908.5" y="1173.5" width="31" height="31" fill="#ffffc8" stroke="#000" stroke-width="1" /><line x1="925.5" y1="1173" x2="925.5" y2="1205" stroke="#000" stroke-width="1" /><rect x="911" y="1176.0" width="6" height="5" fill="#fff" stroke="#000" stroke-width="0.7" /><polygon points="918,1177.0 922,1178.5 918,1180.0" fill="#000" /><rect x="911" y="1183.5" width="6" height="5" fill="#fff" stroke="#000" stroke-width="0.7" /><polygon points="918,1184.5 922,1186.0 918,1187.5" fill="#000" /><rect x="911" y="1191.0" width="6" height="5" fill="#fff" stroke="#000" stroke-width="0.7" /><polygon points="918,1192.0 922,1193.5 918,1195.0" fill="#000" /><rect x="911" y="1198.5" width="6" height="5" fill="#fff" stroke="#000" stroke-width="0.7" /><polygon points="918,1199.5 922,1201.0 918,1202.5" fill="#000" /><rect x="928" y="1185" width="10" height="7" fill="#e8e8e8" stroke="#000" stroke-width="0.7" /><rect x="908.5" y="1212.5" width="31" height="31" fill="#ffffc8" stroke="#000" stroke-width="1" /><line x1="925.5" y1="1212" x2="925.5" y2="1244" stroke="#000" stroke-width="1" /><rect x="911" y="1215.0" width="6" height="5" fill="#fff" stroke="#000" stroke-width="0.7" /><polygon points="918,1216.0 922,1217.5 918,1219.0" fill="#000" /><rect x="911" y="1222.5" width="6" height="5" fill="#fff" stroke="#000" stroke-width="0.7" /><polygon points="918,1223.5 922,1225.0 918,1226.5" fill="#000" /><rect x="911" y="1230.0" width="6" height="5" fill="#fff" stroke="#000" stroke-width="0.7" /><polygon points="918,1231.0 922,1232.5 918,1234.0" fill="#000" /><rect x="928" y="1224" width="10" height="7" fill="#e8e8e8" stroke="#000" stroke-width="0.7" /><rect x="908.5" y="1261.5" width="31" height="31" fill="#ffffc8" stroke="#000" stroke-width="1" /><line x1="925.5" y1="1261" x2="925.5" y2="1293" stroke="#000" stroke-width="1" /><rect x="911" y="1264.0" width="6" height="5" fill="#fff" stroke="#000" stroke-width="0.7" /><polygon points="918,1265.0 922,1266.5 918,1268.0" fill="#000" /><rect x="911" y="1271.5" width="6" height="5" fill="#fff" stroke="#000" stroke-width="0.7" /><polygon points="918,1272.5 922,1274.0 918,1275.5" fill="#000" /><rect x="911" y="1279.0" width="6" height="5" fill="#fff" stroke="#000" stroke-width="0.7" /><polygon points="918,1280.0 922,1281.5 918,1283.0" fill="#000" /><rect x="928" y="1273" width="10" height="7" fill="#e8e8e8" stroke="#000" stroke-width="0.7" /><rect x="885.25" y="1197.25" width="13.5" height="13.5" fill="#fff" stroke="#ff00ff" stroke-width="2.5" /><text x="892.0" y="1207.7" font-family='"Liberation Sans", sans-serif' font-size="10" fill="#000" font-weight="normal" text-anchor="middle" >⏎</text><rect x="908.25" y="1242.25" width="13.5" height="13.5" fill="#fff" stroke="#ff00ff" stroke-width="2.5" /><text x="915.0" y="1252.7" font-family='"Liberation Sans", sans-serif' font-size="10" fill="#000" font-weight="normal" text-anchor="middle" >⏎</text><rect x="749.25" y="1209.25" width="84.5" height="14.5" fill="#fff" stroke="#ff00ff" stroke-width="2.5" /><text x="791.5" y="1220.4" font-family='"Liberation Sans", sans-serif' font-size="10.8" fill="#000" font-weight="normal" text-anchor="middle" >Stimulus Delay</text><rect x="749.25" y="1258.25" width="98.5" height="14.5" fill="#fff" stroke="#ff00ff" stroke-width="2.5" /><text x="798.5" y="1269.4" font-family='"Liberation Sans", sans-serif' font-size="10.8" fill="#000" font-weight="normal" text-anchor="middle" >Stimulus Duration</text><rect x="739.25" y="1233.25" width="93.5" height="14.5" fill="#fff" stroke="#0000ff" stroke-width="2.5" /><polygon points="743,1240 748,1235.5 753,1240 751.5,1240 751.5,1244.5 749,1244.5 749,1242 747,1242 747,1244.5 744.5,1244.5 744.5,1240" fill="#000" /><text x="752.5" y="1244.5" font-family='"Liberation Sans", sans-serif' font-size="10.2" fill="#0000ff" font-weight="normal" text-anchor="start" >Stimulus  Delay</text><polygon points="826,1236.5 830,1240.5 826,1244.5" fill="#0000ff" /><rect x="867.5" y="1224.5" width="31" height="31" fill="#ffffc8" stroke="#000" stroke-width="1" /><text x="870" y="1234" font-family='"Liberation Sans", sans-serif' font-size="9" fill="#000" font-weight="bold" text-anchor="start" >#</text><polyline points="876,1229 890,1229 890,1236" fill="none" stroke="#000" stroke-width="1.5" /><rect x="881.5" y="1239.5" width="16" height="8" fill="#fff" stroke="#000" stroke-width="1" /><text x="889.5" y="1246.5" font-family='"Liberation Sans", sans-serif' font-size="7" fill="#000" font-weight="normal" text-anchor="middle" >999</text><text x="870" y="1254" font-family='"Liberation Sans", sans-serif' font-size="7" fill="#000" font-weight="normal" text-anchor="start" >⟼</text><rect x="867.5" y="1275.5" width="31" height="31" fill="#ffffc8" stroke="#000" stroke-width="1" /><text x="870" y="1285" font-family='"Liberation Sans", sans-serif' font-size="9" fill="#000" font-weight="bold" text-anchor="start" >#</text><polyline points="876,1280 890,1280 890,1287" fill="none" stroke="#000" stroke-width="1.5" /><rect x="881.5" y="1290.5" width="16" height="8" fill="#fff" stroke="#000" stroke-width="1" /><text x="889.5" y="1297.5" font-family='"Liberation Sans", sans-serif' font-size="7" fill="#000" font-weight="normal" text-anchor="middle" >999</text><text x="870" y="1305" font-family='"Liberation Sans", sans-serif' font-size="7" fill="#000" font-weight="normal" text-anchor="start" >⟼</text><rect x="1119" y="751" width="180" height="228" fill="#d4d0c8" /><line x1="1119" y1="751.5" x2="1299" y2="751.5" stroke="#ffffff" stroke-width="1" /><line x1="1119.5" y1="751" x2="1119.5" y2="979" stroke="#ffffff" stroke-width="1" /><line x1="1119" y1="978.5" x2="1299" y2="978.5" stroke="#404040" stroke-width="1" /><line x1="1298.5" y1="751" x2="1298.5" y2="979" stroke="#404040" stroke-width="1" /><line x1="1120" y1="977.5" x2="1298" y2="977.5" stroke="#808080" stroke-width="1" /><line x1="1297.5" y1="752" x2="1297.5" y2="978" stroke="#808080" stroke-width="1" /><rect x="1123" y="756" width="172" height="14" fill="url(#ttlbar)"/><text x="1125" y="768" font-family='"Liberation Sans", sans-serif' font-size="12.5" fill="#ececec" font-weight="bold" text-anchor="start" >Functions</text><rect x="1282" y="757" width="12" height="12" fill="#d8d4cc" /><line x1="1283" y1="758.5" x2="1293" y2="758.5" stroke="#f2f0ea" stroke-width="1" /><line x1="1283.5" y1="758" x2="1283.5" y2="768" stroke="#f2f0ea" stroke-width="1" /><line x1="1283" y1="767.5" x2="1293" y2="767.5" stroke="#a8a49c" stroke-width="1" /><line x1="1292.5" y1="758" x2="1292.5" y2="768" stroke="#a8a49c" stroke-width="1" /><rect x="1282.5" y="757.5" width="11" height="11" fill="none" stroke="#404040" stroke-width="1" /><text x="1288" y="767" font-family='"Liberation Sans", sans-serif' font-size="11" fill="#000" font-weight="bold" text-anchor="middle" >×</text><rect x="1126" y="774" width="62" height="19" fill="#d8d4cc" /><line x1="1127" y1="775.5" x2="1187" y2="775.5" stroke="#f2f0ea" stroke-width="1" /><line x1="1127.5" y1="775" x2="1127.5" y2="792" stroke="#f2f0ea" stroke-width="1" /><line x1="1127" y1="791.5" x2="1187" y2="791.5" stroke="#a8a49c" stroke-width="1" /><line x1="1186.5" y1="775" x2="1186.5" y2="792" stroke="#a8a49c" stroke-width="1" /><rect x="1126.5" y="774.5" width="61" height="18" fill="none" stroke="#404040" stroke-width="1" /><circle cx="1138" cy="781" r="4.5" fill="#e0e8ff" stroke="#404080" stroke-width="1.2"/><line x1="1141" y1="784" x2="1146" y2="789" stroke="#604020" stroke-width="2" /><text x="1148" y="788.5" font-family='"Liberation Sans", sans-serif' font-size="10.8" fill="#000" font-weight="normal" text-anchor="start" >Search</text><rect x="1191" y="774" width="87" height="19" fill="#d8d4cc" /><line x1="1192" y1="775.5" x2="1277" y2="775.5" stroke="#f2f0ea" stroke-width="1" /><line x1="1192.5" y1="775" x2="1192.5" y2="792" stroke="#f2f0ea" stroke-width="1" /><line x1="1192" y1="791.5" x2="1277" y2="791.5" stroke="#a8a49c" stroke-width="1" /><line x1="1276.5" y1="775" x2="1276.5" y2="792" stroke="#a8a49c" stroke-width="1" /><rect x="1191.5" y="774.5" width="86" height="18" fill="none" stroke="#404040" stroke-width="1" /><line x1="1200" y1="788" x2="1206" y2="781" stroke="#404060" stroke-width="2" /><circle cx="1206" cy="780" r="3" fill="none" stroke="#404060" stroke-width="1.5"/><text x="1213" y="788.5" font-family='"Liberation Sans", sans-serif' font-size="10.8" fill="#000" font-weight="normal" text-anchor="start" >Customize</text><polygon points="1266,781 1272,781 1269,785" fill="#000" /><line x1="1124.5" y1="795" x2="1124.5" y2="975" stroke="#808080" stroke-width="1" /><line x1="1125.5" y1="795" x2="1125.5" y2="975" stroke="#ffffff" stroke-width="1" /><line x1="1125" y1="796.5" x2="1295" y2="796.5" stroke="#a0a0a0" stroke-width="1" /><line x1="1129.5" y1="799" x2="1129.5" y2="811" stroke="#808080" stroke-width="1" /><polygon points="1133,801 1141,801 1137,806" fill="#000" /><text x="1152" y="808.5" font-family='"Liberation Sans", sans-serif' font-size="10.8" fill="#000" font-weight="normal" text-anchor="start" >Express</text><rect x="1132" y="814" width="151" height="77" fill="#c8c4bc" /><rect x="1132.5" y="814.5" width="150" height="76" fill="none" stroke="#a09c94" stroke-width="1" /><rect x="1134" y="816" width="35" height="36" fill="#d8d4cc" /><line x1="1135" y1="817.5" x2="1168" y2="817.5" stroke="#f2f0ea" stroke-width="1" /><line x1="1135.5" y1="817" x2="1135.5" y2="851" stroke="#f2f0ea" stroke-width="1" /><line x1="1135" y1="850.5" x2="1168" y2="850.5" stroke="#a8a49c" stroke-width="1" /><line x1="1167.5" y1="817" x2="1167.5" y2="851" stroke="#a8a49c" stroke-width="1" /><rect x="1134.5" y="816.5" width="34" height="35" fill="none" stroke="#404040" stroke-width="1" /><polygon points="1164,819 1168,823 1164,827" fill="#000" /><rect x="1170" y="816" width="35" height="36" fill="#d8d4cc" /><line x1="1171" y1="817.5" x2="1204" y2="817.5" stroke="#f2f0ea" stroke-width="1" /><line x1="1171.5" y1="817" x2="1171.5" y2="851" stroke="#f2f0ea" stroke-width="1" /><line x1="1171" y1="850.5" x2="1204" y2="850.5" stroke="#a8a49c" stroke-width="1" /><line x1="1203.5" y1="817" x2="1203.5" y2="851" stroke="#a8a49c" stroke-width="1" /><rect x="1170.5" y="816.5" width="34" height="35" fill="none" stroke="#404040" stroke-width="1" /><polygon points="1200,819 1204,823 1200,827" fill="#000" /><rect x="1206" y="816" width="35" height="36" fill="#d8d4cc" /><line x1="1207" y1="817.5" x2="1240" y2="817.5" stroke="#f2f0ea" stroke-width="1" /><line x1="1207.5" y1="817" x2="1207.5" y2="851" stroke="#f2f0ea" stroke-width="1" /><line x1="1207" y1="850.5" x2="1240" y2="850.5" stroke="#a8a49c" stroke-width="1" /><line x1="1239.5" y1="817" x2="1239.5" y2="851" stroke="#a8a49c" stroke-width="1" /><rect x="1206.5" y="816.5" width="34" height="35" fill="none" stroke="#404040" stroke-width="1" /><polygon points="1236,819 1240,823 1236,827" fill="#000" /><rect x="1243" y="816" width="35" height="36" fill="#d8d4cc" /><line x1="1244" y1="817.5" x2="1277" y2="817.5" stroke="#f2f0ea" stroke-width="1" /><line x1="1244.5" y1="817" x2="1244.5" y2="851" stroke="#f2f0ea" stroke-width="1" /><line x1="1244" y1="850.5" x2="1277" y2="850.5" stroke="#a8a49c" stroke-width="1" /><line x1="1276.5" y1="817" x2="1276.5" y2="851" stroke="#a8a49c" stroke-width="1" /><rect x="1243.5" y="816.5" width="34" height="35" fill="none" stroke="#404040" stroke-width="1" /><polygon points="1273,819 1277,823 1273,827" fill="#000" /><rect x="1134" y="853" width="35" height="36" fill="#d8d4cc" /><line x1="1135" y1="854.5" x2="1168" y2="854.5" stroke="#f2f0ea" stroke-width="1" /><line x1="1135.5" y1="854" x2="1135.5" y2="888" stroke="#f2f0ea" stroke-width="1" /><line x1="1135" y1="887.5" x2="1168" y2="887.5" stroke="#a8a49c" stroke-width="1" /><line x1="1167.5" y1="854" x2="1167.5" y2="888" stroke="#a8a49c" stroke-width="1" /><rect x="1134.5" y="853.5" width="34" height="35" fill="none" stroke="#404040" stroke-width="1" /><polygon points="1164,856 1168,860 1164,864" fill="#000" /><rect x="1170" y="853" width="35" height="36" fill="#d8d4cc" /><line x1="1171" y1="854.5" x2="1204" y2="854.5" stroke="#f2f0ea" stroke-width="1" /><line x1="1171.5" y1="854" x2="1171.5" y2="888" stroke="#f2f0ea" stroke-width="1" /><line x1="1171" y1="887.5" x2="1204" y2="887.5" stroke="#a8a49c" stroke-width="1" /><line x1="1203.5" y1="854" x2="1203.5" y2="888" stroke="#a8a49c" stroke-width="1" /><rect x="1170.5" y="853.5" width="34" height="35" fill="none" stroke="#404040" stroke-width="1" /><polygon points="1200,856 1204,860 1200,864" fill="#000" /><polyline points="1137.0,820.5 1153.0,820.5 1156,823 1156,829" fill="none" stroke="#606060" stroke-width="2.2" /><polyline points="1137.0,820.5 1153.0,820.5 1156,823 1156,829" fill="none" stroke="#fff" stroke-width="0.8" /><rect x="1152" y="829" width="8" height="4" fill="#808080" /><polygon points="1138,826 1144,826 1144,823 1149,828 1144,833 1144,830 1138,830" fill="#0000ff" /><rect x="1149" y="833" width="13" height="17" fill="#000" /><rect x="1151" y="836" width="9" height="11" fill="#ffff60" /><polygon points="1151,836 1160,841.5 1151,847" fill="#ffff00" stroke="#000" stroke-width="0.8" /><line x1="1153" y1="841.5" x2="1157" y2="841.5" stroke="#000" stroke-width="1" /><line x1="1155" y1="839.5" x2="1155" y2="843.5" stroke="#000" stroke-width="1" /><line x1="1147" y1="839.5" x2="1149" y2="839.5" stroke="#ff0000" stroke-width="1" /><line x1="1147" y1="845.5" x2="1149" y2="845.5" stroke="#0000ff" stroke-width="1" /><line x1="1162" y1="843.5" x2="1164" y2="843.5" stroke="#ff0000" stroke-width="1" /><line x1="1176.5" y1="825" x2="1176.5" y2="848" stroke="#ff8080" stroke-width="1" /><line x1="1176" y1="847.5" x2="1202" y2="847.5" stroke="#ff8080" stroke-width="1" /><polyline points="1178,844 1181,842 1182,833 1184,843 1186,841 1188,837 1190,843 1193,843 1195,840 1197,844 1200,844" fill="none" stroke="#000" stroke-width="1" /><rect x="1185" y="823" width="17" height="5" fill="#e8d000" /><rect x="1185.4" y="823.4" width="16.2" height="4.2" fill="none" stroke="#000" stroke-width="0.8" /><polygon points="1201,818 1205,822 1201,826" fill="#000" /><rect x="1211" y="818" width="15" height="17" fill="#606060" /><rect x="1213" y="819" width="12" height="15" fill="#000" /><rect x="1215" y="822" width="8" height="9" fill="#ffff60" /><polygon points="1215,822 1223,826.5 1215,831" fill="#ffff00" stroke="#000" stroke-width="0.8" /><line x1="1217" y1="826.5" x2="1221" y2="826.5" stroke="#000" stroke-width="1" /><line x1="1219" y1="824.5" x2="1219" y2="828.5" stroke="#000" stroke-width="1" /><line x1="1211" y1="825.5" x2="1213" y2="825.5" stroke="#ff0000" stroke-width="1" /><line x1="1211" y1="831.5" x2="1213" y2="831.5" stroke="#0000ff" stroke-width="1" /><line x1="1225" y1="829.5" x2="1227" y2="829.5" stroke="#ff0000" stroke-width="1" /><polyline points="1219,836 1219,845 1222.0,847.5 1237.0,847.5" fill="none" stroke="#606060" stroke-width="2.2" /><polyline points="1219,836 1219,845 1222.0,847.5 1237.0,847.5" fill="none" stroke="#fff" stroke-width="0.8" /><polygon points="1227,838 1233,838 1233,835 1238,840 1233,845 1233,842 1227,842" fill="#0000ff" /><rect x="1249" y="827" width="3" height="3" fill="#ff6060" /><rect x="1253" y="827" width="3" height="3" fill="#ff6060" /><rect x="1249" y="831" width="3" height="3" fill="#0000ff" /><rect x="1253" y="831" width="3" height="3" fill="#0000ff" /><rect x="1249" y="835" width="3" height="3" fill="#ffff00" /><rect x="1253" y="835" width="3" height="3" fill="#ffff00" /><rect x="1249" y="839" width="3" height="3" fill="#00a000" /><rect x="1253" y="839" width="3" height="3" fill="#00a000" /><rect x="1248.5" y="826.5" width="9" height="16" fill="none" stroke="#000" stroke-width="1" /><rect x="1267" y="827" width="3" height="3" fill="#ff6060" /><rect x="1271" y="827" width="3" height="3" fill="#ff6060" /><rect x="1267" y="831" width="3" height="3" fill="#00a000" /><rect x="1271" y="831" width="3" height="3" fill="#00a000" /><rect x="1267" y="835" width="3" height="3" fill="#ffff00" /><rect x="1271" y="835" width="3" height="3" fill="#ffff00" /><rect x="1266.5" y="826.5" width="9" height="12" fill="none" stroke="#000" stroke-width="1" /><polyline points="1259.0,829.5 1265.0,829.5" fill="none" stroke="#000" stroke-width="1" /><polyline points="1262.0,833.5 1265.0,833.5" fill="none" stroke="#000" stroke-width="1" /><polyline points="1262.0,837.5 1265.0,837.5" fill="none" stroke="#000" stroke-width="1" /><polyline points="1262,829 1262,841" fill="none" stroke="#000" stroke-width="1" /><path d="M1162,882 H1142 Q1139,882 1139,879 V862 Q1139,859 1142,859 H1158 Q1161,859 1161,862 V880" fill="none" stroke="#707070" stroke-width="3.5"/><rect x="1141.75" y="872.75" width="5.5" height="5.5" fill="#fff" stroke="#0000ff" stroke-width="1.5" /><rect x="1150.5" y="872.5" width="6" height="6" fill="#00c000" stroke="#008000" stroke-width="1" /><polygon points="1177,858 1184,862 1177,866" fill="#ffff40" stroke="#000" stroke-width="1" /><text x="1191" y="867" font-family='"Liberation Sans", sans-serif' font-size="10" fill="#000" font-weight="bold" text-anchor="start" >Σ</text><text x="1177" y="881" font-family='"Liberation Sans", sans-serif' font-size="10" fill="#000" font-weight="normal" text-anchor="start" >∫</text><polygon points="1189,873 1197,877 1189,881" fill="#ffff40" stroke="#000" stroke-width="1" /><line x1="1125" y1="894.5" x2="1295" y2="894.5" stroke="#a0a0a0" stroke-width="1" /><line x1="1125" y1="895.5" x2="1295" y2="895.5" stroke="#ffffff" stroke-width="1" /><line x1="1129.5" y1="898" x2="1129.5" y2="910" stroke="#808080" stroke-width="1" /><polygon points="1135,899 1140,903.5 1135,908" fill="#000" /><text x="1152" y="908" font-family='"Liberation Sans", sans-serif' font-size="12" fill="#000" font-weight="normal" text-anchor="start" >Favorites</text><line x1="1125" y1="913.5" x2="1295" y2="913.5" stroke="#a0a0a0" stroke-width="1" /><line x1="1125" y1="914.5" x2="1295" y2="914.5" stroke="#ffffff" stroke-width="1" /><line x1="1129.5" y1="917" x2="1129.5" y2="929" stroke="#808080" stroke-width="1" /><polygon points="1135,918 1140,922.5 1135,927" fill="#000" /><text x="1152" y="927" font-family='"Liberation Sans", sans-serif' font-size="12" fill="#000" font-weight="normal" text-anchor="start" >User Libraries</text><line x1="1125" y1="932.5" x2="1295" y2="932.5" stroke="#a0a0a0" stroke-width="1" /><line x1="1125" y1="933.5" x2="1295" y2="933.5" stroke="#ffffff" stroke-width="1" /><line x1="1129.5" y1="936" x2="1129.5" y2="948" stroke="#808080" stroke-width="1" /><text x="1152" y="946" font-family='"Liberation Sans", sans-serif' font-size="12" fill="#000" font-weight="normal" text-anchor="start" >Select a VI...</text><polyline points="1205,956 1209,960 1213,956" fill="none" stroke="#404040" stroke-width="1" /><polyline points="1205,960 1209,964 1213,960" fill="none" stroke="#404040" stroke-width="1" /></svg></body></html>
